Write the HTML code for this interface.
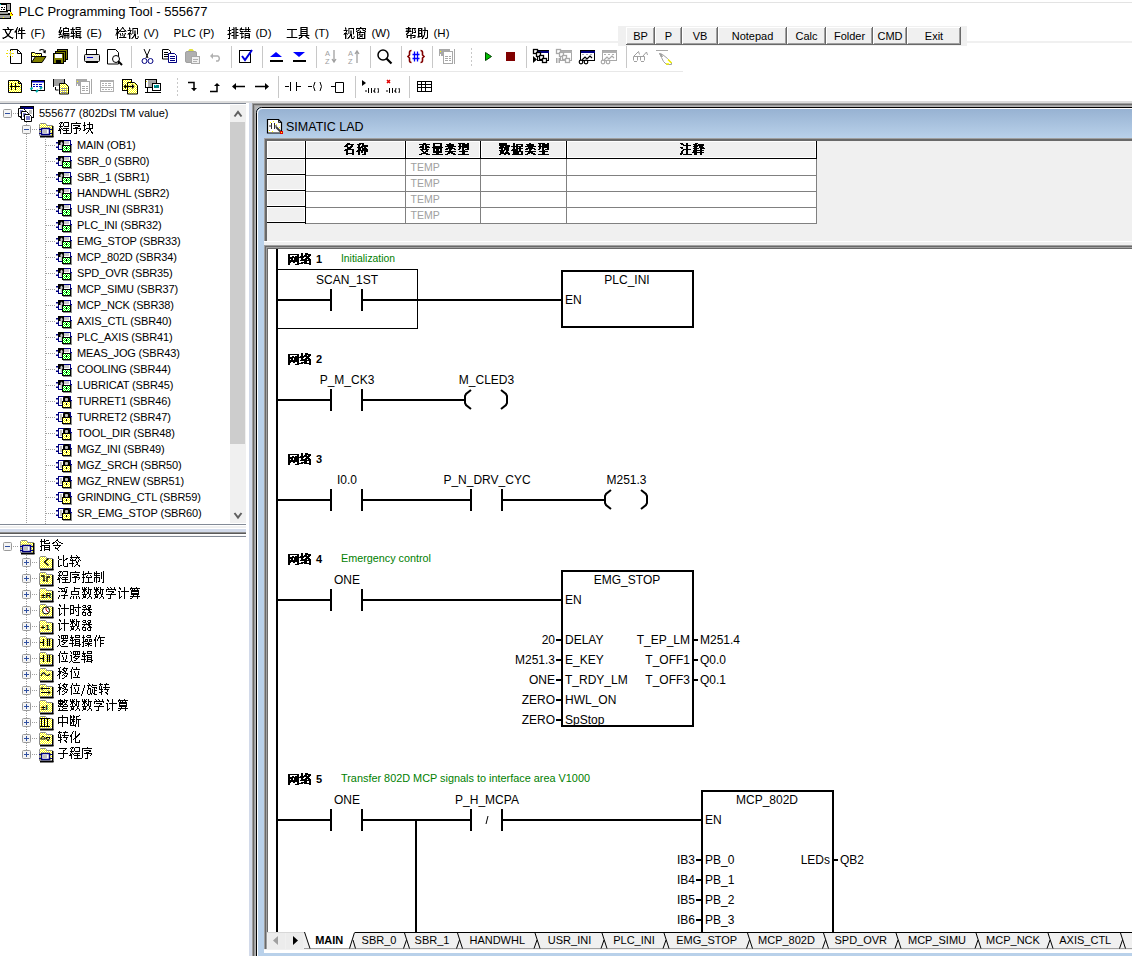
<!DOCTYPE html>
<html><head><meta charset="utf-8"><title>PLC Programming Tool - 555677</title>
<style>html,body{margin:0;padding:0;width:1132px;height:956px;overflow:hidden;background:#fff;font-family:"Liberation Sans",sans-serif}
svg text{font-family:"Liberation Sans",sans-serif}</style></head>
<body>
<svg width="1132" height="956" viewBox="0 0 1132 956" style="position:absolute;left:0;top:0" font-family="Liberation Sans, sans-serif"><rect x="0" y="0" width="1132" height="956" fill="#ffffff" /><rect x="139" y="2" width="993" height="1" fill="#e3e3e3" /><rect x="139" y="0" width="1" height="3" fill="#e3e3e3" /><g><rect x="0" y="3" width="11" height="16" fill="#000"/><rect x="0" y="4" width="1" height="1" fill="#00e0e0"/><rect x="0" y="5" width="6" height="6" fill="#fff"/><rect x="1" y="7" width="2" height="1" fill="#000"/><rect x="4" y="7" width="1" height="1" fill="#000"/><rect x="1" y="9" width="1" height="1" fill="#000"/><rect x="3" y="9" width="2" height="1" fill="#000"/><rect x="7" y="4" width="3" height="6" fill="#a8a8a8"/><rect x="0" y="12" width="8" height="2" fill="#a0a0a0"/><rect x="8" y="11" width="2" height="2" fill="#fff"/><rect x="0" y="15" width="10" height="3" fill="#a0a0a0"/><rect x="3" y="17" width="1" height="1" fill="#ffff00"/><rect x="10" y="12" width="2" height="2" fill="#ffff00"/><rect x="11" y="13" width="1" height="1" fill="#c00000"/><rect x="10" y="14" width="3" height="2" fill="#ffff00"/><rect x="12" y="14" width="1" height="1" fill="#800000"/></g><text x="18.5" y="16" font-size="13" fill="#000" >PLC Programming Tool - 555677</text><path d="M22 27h1v1h-1zM7 28h1v1h-1zM22 28h1v1h-1zM2 29h1v1h-1zM17 29h2v1h-2zM22 29h1v1h-1zM4 30h1v1h-1zM6 31h1v1h-1zM9 31h1v1h-1zM14 31h1v1h-1zM22 31h1v1h-1zM14 32h1v1h-1zM18 32h1v1h-1zM22 32h1v1h-1zM8 33h1v1h-1zM17 33h1v1h-1zM6 34h1v1h-1zM9 34h1v1h-1zM22 34h1v1h-1zM6 35h1v1h-1zM9 35h1v1h-1zM22 35h1v1h-1zM22 36h1v1h-1zM2 37h1v1h-1zM6 37h1v1h-1zM9 37h1v1h-1zM13 37h1v1h-1zM22 37h1v1h-1zM2 38h1v1h-1zM4 38h1v1h-1zM11 38h1v1h-1zM22 38h1v1h-1z" fill="#000" fill-opacity="0.35"/><path d="M8 27h1v1h-1zM21 27h1v1h-1zM16 28h2v1h-2zM13 29h1v1h-1zM11 30h1v1h-1zM15 30h1v1h-1zM18 30h1v1h-1zM5 32h1v1h-1zM9 32h2v1h-2zM15 32h1v1h-1zM7 33h1v1h-1zM25 33h1v1h-1zM5 36h1v1h-1zM7 36h2v1h-2zM10 36h1v1h-1zM3 37h1v1h-1zM12 37h1v1h-1z" fill="#000" fill-opacity="0.62"/><path d="M7 27h1v1h-1zM17 27h1v1h-1zM8 28h1v1h-1zM19 28h1v1h-1zM21 28h1v1h-1zM3 29h10v1h-10zM16 29h1v1h-1zM19 29h1v1h-1zM21 29h1v1h-1zM5 30h1v1h-1zM10 30h1v1h-1zM16 30h1v1h-1zM19 30h6v1h-6zM5 31h1v1h-1zM10 31h1v1h-1zM15 31h2v1h-2zM18 31h1v1h-1zM21 31h1v1h-1zM6 32h1v1h-1zM16 32h1v1h-1zM21 32h1v1h-1zM6 33h1v1h-1zM9 33h1v1h-1zM16 33h1v1h-1zM18 33h7v1h-7zM7 34h2v1h-2zM16 34h1v1h-1zM21 34h1v1h-1zM7 35h2v1h-2zM16 35h1v1h-1zM21 35h1v1h-1zM6 36h1v1h-1zM9 36h1v1h-1zM16 36h1v1h-1zM21 36h1v1h-1zM4 37h2v1h-2zM10 37h2v1h-2zM16 37h1v1h-1zM21 37h1v1h-1zM3 38h1v1h-1zM12 38h1v1h-1zM16 38h1v1h-1zM21 38h1v1h-1z" fill="#000"/><text x="30.5" y="36.5" font-size="11.5" fill="#000" >(F)</text><path d="M61 27h1v1h-1zM73 27h1v1h-1zM75 27h1v1h-1zM73 28h1v1h-1zM75 28h1v1h-1zM79 28h1v1h-1zM59 29h1v1h-1zM75 29h1v1h-1zM60 30h1v1h-1zM62 30h1v1h-1zM71 30h1v1h-1zM58 31h1v1h-1zM81 31h1v1h-1zM58 32h1v1h-1zM61 32h1v1h-1zM72 32h1v1h-1zM75 32h1v1h-1zM79 32h1v1h-1zM59 33h1v1h-1zM62 33h1v1h-1zM69 33h2v1h-2zM75 33h1v1h-1zM58 34h1v1h-1zM62 34h1v1h-1zM66 34h1v1h-1zM69 34h1v1h-1zM75 34h1v1h-1zM79 34h1v1h-1zM59 35h1v1h-1zM61 35h1v1h-1zM69 35h1v1h-1zM71 35h1v1h-1zM75 35h1v1h-1zM59 36h1v1h-1zM66 36h1v1h-1zM69 36h1v1h-1zM74 36h2v1h-2zM77 36h2v1h-2zM60 37h1v1h-1zM63 37h1v1h-1zM66 37h1v1h-1zM69 37h1v1h-1zM62 38h1v1h-1zM65 38h1v1h-1zM67 38h1v1h-1zM79 38h1v1h-1z" fill="#000" fill-opacity="0.35"/><path d="M65 27h2v1h-2zM72 27h1v1h-1zM80 27h1v1h-1zM76 28h1v1h-1zM80 28h1v1h-1zM60 29h1v1h-1zM70 29h1v1h-1zM80 29h1v1h-1zM72 30h2v1h-2zM60 31h1v1h-1zM71 31h2v1h-2zM80 32h1v1h-1zM80 33h1v1h-1zM61 34h1v1h-1zM64 34h2v1h-2zM67 34h2v1h-2zM80 34h1v1h-1zM62 35h2v1h-2zM72 35h1v1h-1zM74 35h1v1h-1zM80 35h1v1h-1zM63 36h3v1h-3zM67 36h2v1h-2zM70 36h1v1h-1zM79 36h2v1h-2zM58 37h1v1h-1zM64 37h2v1h-2zM67 37h2v1h-2zM75 37h1v1h-1zM78 37h1v1h-1zM81 37h1v1h-1zM64 38h1v1h-1zM68 38h1v1h-1zM80 38h1v1h-1z" fill="#000" fill-opacity="0.62"/><path d="M60 27h1v1h-1zM76 27h4v1h-4zM60 28h1v1h-1zM63 28h6v1h-6zM72 28h1v1h-1zM63 29h1v1h-1zM68 29h1v1h-1zM71 29h4v1h-4zM76 29h4v1h-4zM59 30h1v1h-1zM61 30h1v1h-1zM63 30h1v1h-1zM68 30h1v1h-1zM59 31h1v1h-1zM61 31h1v1h-1zM63 31h6v1h-6zM73 31h1v1h-1zM75 31h6v1h-6zM59 32h2v1h-2zM63 32h1v1h-1zM71 32h1v1h-1zM73 32h1v1h-1zM76 32h1v1h-1zM60 33h1v1h-1zM63 33h6v1h-6zM71 33h4v1h-4zM76 33h4v1h-4zM59 34h2v1h-2zM63 34h1v1h-1zM73 34h1v1h-1zM76 34h1v1h-1zM64 35h5v1h-5zM73 35h1v1h-1zM76 35h4v1h-4zM60 36h3v1h-3zM71 36h3v1h-3zM76 36h1v1h-1zM59 37h1v1h-1zM62 37h1v1h-1zM73 37h1v1h-1zM76 37h2v1h-2zM79 37h2v1h-2zM73 38h1v1h-1z" fill="#000"/><text x="86.5" y="36.5" font-size="11.5" fill="#000" >(E)</text><path d="M123 27h1v1h-1zM130 28h1v1h-1zM120 29h1v1h-1zM123 29h1v1h-1zM130 29h1v1h-1zM133 29h1v1h-1zM116 30h1v1h-1zM127 30h1v1h-1zM133 30h3v1h-3zM116 31h1v1h-1zM126 31h1v1h-1zM133 31h1v1h-1zM133 32h1v1h-1zM119 33h1v1h-1zM124 33h1v1h-1zM131 33h1v1h-1zM133 33h1v1h-1zM115 34h1v1h-1zM123 34h1v1h-1zM125 34h1v1h-1zM127 34h1v1h-1zM130 34h1v1h-1zM137 34h1v1h-1zM115 35h2v1h-2zM121 35h1v1h-1zM123 35h1v1h-1zM130 35h1v1h-1zM133 35h1v1h-1zM120 36h1v1h-1zM130 36h1v1h-1zM134 36h1v1h-1zM137 36h1v1h-1zM126 37h1v1h-1zM130 37h1v1h-1zM137 37h1v1h-1zM130 38h1v1h-1z" fill="#000" fill-opacity="0.35"/><path d="M129 27h1v1h-1zM121 28h2v1h-2zM132 28h1v1h-1zM115 29h1v1h-1zM121 29h1v1h-1zM124 29h1v1h-1zM129 29h1v1h-1zM132 29h1v1h-1zM119 30h1v1h-1zM124 30h1v1h-1zM131 30h2v1h-2zM118 31h1v1h-1zM120 31h1v1h-1zM125 31h1v1h-1zM132 31h1v1h-1zM134 31h2v1h-2zM116 32h1v1h-1zM129 32h2v1h-2zM132 32h1v1h-1zM134 32h2v1h-2zM118 33h1v1h-1zM120 33h1v1h-1zM132 33h1v1h-1zM134 33h2v1h-2zM116 34h1v1h-1zM122 34h1v1h-1zM124 34h1v1h-1zM128 34h1v1h-1zM131 34h1v1h-1zM120 35h1v1h-1zM122 35h1v1h-1zM123 36h2v1h-2zM138 36h1v1h-1zM133 37h1v1h-1zM138 37h1v1h-1zM131 38h2v1h-2zM135 38h1v1h-1z" fill="#000" fill-opacity="0.62"/><path d="M117 27h1v1h-1zM122 27h1v1h-1zM117 28h1v1h-1zM123 28h1v1h-1zM129 28h1v1h-1zM133 28h5v1h-5zM116 29h3v1h-3zM137 29h1v1h-1zM117 30h1v1h-1zM120 30h1v1h-1zM125 30h1v1h-1zM128 30h3v1h-3zM137 30h1v1h-1zM117 31h1v1h-1zM119 31h1v1h-1zM121 31h4v1h-4zM130 31h1v1h-1zM137 31h1v1h-1zM117 32h2v1h-2zM137 32h1v1h-1zM116 33h2v1h-2zM122 33h1v1h-1zM125 33h1v1h-1zM128 33h3v1h-3zM137 33h1v1h-1zM117 34h1v1h-1zM120 34h1v1h-1zM129 34h1v1h-1zM134 34h2v1h-2zM117 35h1v1h-1zM124 35h1v1h-1zM129 35h1v1h-1zM134 35h2v1h-2zM117 36h1v1h-1zM129 36h1v1h-1zM133 36h1v1h-1zM135 36h1v1h-1zM117 37h1v1h-1zM119 37h7v1h-7zM129 37h1v1h-1zM132 37h1v1h-1zM135 37h1v1h-1zM117 38h1v1h-1zM129 38h1v1h-1zM136 38h2v1h-2z" fill="#000"/><text x="143.5" y="36.5" font-size="11.5" fill="#000" >(V)</text><text x="173.5" y="36.5" font-size="11.5" fill="#000" >PLC (P)</text><path d="M234 27h1v1h-1zM246 27h1v1h-1zM246 28h1v1h-1zM231 29h1v1h-1zM238 29h2v1h-2zM250 29h1v1h-1zM227 30h1v1h-1zM231 30h1v1h-1zM239 30h1v1h-1zM246 30h1v1h-1zM231 32h1v1h-1zM238 32h1v1h-1zM242 32h1v1h-1zM228 33h1v1h-1zM231 33h1v1h-1zM239 33h1v1h-1zM244 33h1v1h-1zM230 34h1v1h-1zM242 34h1v1h-1zM244 34h1v1h-1zM248 34h1v1h-1zM242 35h1v1h-1zM244 35h1v1h-1zM244 36h1v1h-1zM248 36h1v1h-1zM243 37h2v1h-2zM244 38h1v1h-1zM248 38h1v1h-1z" fill="#000" fill-opacity="0.35"/><path d="M233 27h1v1h-1zM235 27h2v1h-2zM241 27h1v1h-1zM245 27h1v1h-1zM233 28h4v1h-4zM240 28h1v1h-1zM245 28h1v1h-1zM234 29h2v1h-2zM244 29h1v1h-1zM233 30h4v1h-4zM240 30h1v1h-1zM245 30h1v1h-1zM233 31h4v1h-4zM243 31h1v1h-1zM250 31h1v1h-1zM234 32h2v1h-2zM241 32h1v1h-1zM233 33h4v1h-4zM249 33h1v1h-1zM227 34h1v1h-1zM233 34h4v1h-4zM241 34h1v1h-1zM245 34h1v1h-1zM231 35h1v1h-1zM234 35h2v1h-2zM238 35h1v1h-1zM241 35h1v1h-1zM233 36h4v1h-4zM241 36h3v1h-3zM245 36h1v1h-1zM233 37h4v1h-4zM233 38h4v1h-4zM241 38h1v1h-1zM245 38h1v1h-1zM249 38h1v1h-1z" fill="#000" fill-opacity="0.62"/><path d="M229 27h1v1h-1zM248 27h1v1h-1zM229 28h1v1h-1zM241 28h1v1h-1zM248 28h1v1h-1zM229 29h1v1h-1zM232 29h2v1h-2zM236 29h2v1h-2zM240 29h4v1h-4zM245 29h5v1h-5zM228 30h3v1h-3zM248 30h1v1h-1zM229 31h1v1h-1zM240 31h3v1h-3zM244 31h6v1h-6zM229 32h1v1h-1zM232 32h2v1h-2zM236 32h2v1h-2zM229 33h2v1h-2zM240 33h4v1h-4zM245 33h4v1h-4zM228 34h2v1h-2zM249 34h1v1h-1zM229 35h1v1h-1zM232 35h2v1h-2zM236 35h2v1h-2zM245 35h5v1h-5zM229 36h1v1h-1zM249 36h1v1h-1zM229 37h1v1h-1zM241 37h2v1h-2zM245 37h5v1h-5zM228 38h2v1h-2z" fill="#000"/><text x="255.5" y="36.5" font-size="11.5" fill="#000" >(D)</text><path d="M298 35h1v1h-1zM309 35h1v1h-1zM307 36h1v1h-1zM286 37h1v1h-1zM297 37h1v1h-1zM298 38h1v1h-1zM300 38h1v1h-1zM307 38h1v1h-1zM309 38h1v1h-1z" fill="#000" fill-opacity="0.35"/><path d="M300 27h1v1h-1zM307 27h1v1h-1zM300 28h2v1h-2zM306 28h2v1h-2zM300 29h1v1h-1zM307 29h1v1h-1zM291 30h2v1h-2zM300 30h2v1h-2zM306 30h2v1h-2zM291 31h2v1h-2zM300 31h1v1h-1zM307 31h1v1h-1zM291 32h2v1h-2zM300 32h2v1h-2zM306 32h2v1h-2zM291 33h2v1h-2zM300 33h1v1h-1zM307 33h1v1h-1zM291 34h2v1h-2zM300 34h2v1h-2zM306 34h2v1h-2zM291 35h2v1h-2zM291 36h2v1h-2zM302 36h1v1h-1zM305 36h1v1h-1zM299 37h1v1h-1zM306 37h1v1h-1zM308 37h1v1h-1z" fill="#000" fill-opacity="0.62"/><path d="M301 27h6v1h-6zM287 29h10v1h-10zM301 29h6v1h-6zM301 31h6v1h-6zM301 33h6v1h-6zM299 35h10v1h-10zM301 36h1v1h-1zM306 36h1v1h-1zM287 37h10v1h-10zM300 37h2v1h-2zM307 37h1v1h-1zM299 38h1v1h-1zM308 38h1v1h-1z" fill="#000"/><text x="314.5" y="36.5" font-size="11.5" fill="#000" >(T)</text><path d="M361 27h1v1h-1zM346 28h1v1h-1zM346 29h1v1h-1zM349 29h1v1h-1zM358 29h1v1h-1zM363 29h1v1h-1zM343 30h1v1h-1zM349 30h3v1h-3zM356 30h1v1h-1zM359 30h2v1h-2zM362 30h1v1h-1zM365 30h1v1h-1zM349 31h1v1h-1zM359 31h1v1h-1zM364 31h1v1h-1zM349 32h1v1h-1zM365 32h1v1h-1zM347 33h1v1h-1zM349 33h1v1h-1zM360 33h1v1h-1zM365 33h1v1h-1zM343 34h1v1h-1zM346 34h1v1h-1zM353 34h1v1h-1zM358 34h1v1h-1zM363 34h1v1h-1zM365 34h1v1h-1zM346 35h1v1h-1zM349 35h1v1h-1zM358 35h2v1h-2zM365 35h1v1h-1zM346 36h1v1h-1zM350 36h1v1h-1zM353 36h1v1h-1zM359 36h1v1h-1zM365 36h1v1h-1zM346 37h1v1h-1zM353 37h1v1h-1zM358 37h1v1h-1zM362 37h1v1h-1zM365 37h1v1h-1zM346 38h1v1h-1zM365 38h1v1h-1z" fill="#000" fill-opacity="0.35"/><path d="M345 27h1v1h-1zM348 28h1v1h-1zM345 29h1v1h-1zM348 29h1v1h-1zM359 29h1v1h-1zM362 29h1v1h-1zM347 30h2v1h-2zM357 30h1v1h-1zM348 31h1v1h-1zM350 31h2v1h-2zM357 31h1v1h-1zM345 32h2v1h-2zM348 32h1v1h-1zM350 32h2v1h-2zM348 33h1v1h-1zM350 33h2v1h-2zM359 33h1v1h-1zM344 34h1v1h-1zM347 34h1v1h-1zM360 34h2v1h-2zM360 35h3v1h-3zM354 36h1v1h-1zM362 36h1v1h-1zM349 37h1v1h-1zM354 37h1v1h-1zM359 37h1v1h-1zM347 38h2v1h-2zM351 38h1v1h-1z" fill="#000" fill-opacity="0.62"/><path d="M360 27h1v1h-1zM345 28h1v1h-1zM349 28h5v1h-5zM356 28h10v1h-10zM353 29h1v1h-1zM356 29h1v1h-1zM365 29h1v1h-1zM344 30h3v1h-3zM353 30h1v1h-1zM358 30h1v1h-1zM363 30h2v1h-2zM346 31h1v1h-1zM353 31h1v1h-1zM356 31h1v1h-1zM360 31h1v1h-1zM365 31h1v1h-1zM353 32h1v1h-1zM357 32h8v1h-8zM344 33h3v1h-3zM353 33h1v1h-1zM357 33h1v1h-1zM364 33h1v1h-1zM345 34h1v1h-1zM350 34h2v1h-2zM357 34h1v1h-1zM359 34h1v1h-1zM362 34h1v1h-1zM364 34h1v1h-1zM345 35h1v1h-1zM350 35h2v1h-2zM357 35h1v1h-1zM364 35h1v1h-1zM345 36h1v1h-1zM349 36h1v1h-1zM351 36h1v1h-1zM357 36h1v1h-1zM360 36h2v1h-2zM364 36h1v1h-1zM345 37h1v1h-1zM348 37h1v1h-1zM351 37h1v1h-1zM357 37h1v1h-1zM364 37h1v1h-1zM345 38h1v1h-1zM352 38h2v1h-2zM357 38h8v1h-8z" fill="#000"/><text x="371.5" y="36.5" font-size="11.5" fill="#000" >(W)</text><path d="M409 27h1v1h-1zM425 27h1v1h-1zM405 28h1v1h-1zM411 28h1v1h-1zM422 28h1v1h-1zM406 29h2v1h-2zM410 29h1v1h-1zM415 29h1v1h-1zM419 29h1v1h-1zM422 29h1v1h-1zM405 31h1v1h-1zM419 31h1v1h-1zM422 31h1v1h-1zM425 31h1v1h-1zM419 32h1v1h-1zM422 32h1v1h-1zM425 32h1v1h-1zM408 33h1v1h-1zM410 33h2v1h-2zM422 33h1v1h-1zM407 34h1v1h-1zM419 34h1v1h-1zM422 34h1v1h-1zM406 35h1v1h-1zM419 35h1v1h-1zM406 36h1v1h-1zM417 36h1v1h-1zM424 36h1v1h-1zM406 37h1v1h-1zM412 37h1v1h-1zM415 37h1v1h-1zM417 37h1v1h-1zM419 37h1v1h-1zM426 37h1v1h-1zM421 38h1v1h-1zM427 38h1v1h-1z" fill="#000" fill-opacity="0.35"/><path d="M424 27h1v1h-1zM424 28h2v1h-2zM409 29h1v1h-1zM414 29h1v1h-1zM424 29h2v1h-2zM406 30h2v1h-2zM409 30h2v1h-2zM414 30h2v1h-2zM422 30h1v1h-1zM411 31h1v1h-1zM424 31h1v1h-1zM407 32h1v1h-1zM413 32h1v1h-1zM406 33h1v1h-1zM410 34h2v1h-2zM415 35h1v1h-1zM422 35h3v1h-3zM410 36h2v1h-2zM414 36h2v1h-2zM422 36h1v1h-1zM410 37h2v1h-2zM418 37h1v1h-1zM423 37h1v1h-1zM410 38h2v1h-2z" fill="#000" fill-opacity="0.62"/><path d="M408 27h1v1h-1zM406 28h5v1h-5zM412 28h4v1h-4zM418 28h4v1h-4zM408 29h1v1h-1zM412 29h1v1h-1zM418 29h1v1h-1zM421 29h1v1h-1zM408 30h1v1h-1zM412 30h1v1h-1zM418 30h4v1h-4zM423 30h5v1h-5zM406 31h5v1h-5zM412 31h1v1h-1zM415 31h1v1h-1zM418 31h1v1h-1zM421 31h1v1h-1zM427 31h1v1h-1zM408 32h1v1h-1zM412 32h1v1h-1zM414 32h2v1h-2zM418 32h1v1h-1zM421 32h1v1h-1zM424 32h1v1h-1zM427 32h1v1h-1zM407 33h1v1h-1zM412 33h1v1h-1zM418 33h4v1h-4zM424 33h1v1h-1zM427 33h1v1h-1zM406 34h1v1h-1zM418 34h1v1h-1zM421 34h1v1h-1zM424 34h1v1h-1zM427 34h1v1h-1zM407 35h8v1h-8zM418 35h1v1h-1zM421 35h1v1h-1zM427 35h1v1h-1zM407 36h1v1h-1zM418 36h4v1h-4zM423 36h1v1h-1zM427 36h1v1h-1zM407 37h1v1h-1zM413 37h2v1h-2zM422 37h1v1h-1zM427 37h1v1h-1zM422 38h1v1h-1zM425 38h2v1h-2z" fill="#000"/><text x="433.5" y="36.5" font-size="11.5" fill="#000" >(H)</text><rect x="0" y="41" width="1132" height="2" fill="#f0f0f0" /><rect x="618" y="26" width="349" height="20" fill="#f0f0f0" /><rect x="626" y="27" width="29" height="18" fill="#f0f0f0" /><rect x="626" y="27" width="29" height="1" fill="#ffffff" /><rect x="626" y="27" width="1" height="18" fill="#ffffff" /><rect x="654" y="27" width="1" height="18" fill="#696969" /><rect x="626" y="44" width="29" height="1" fill="#696969" /><rect x="653" y="28" width="1" height="16" fill="#a0a0a0" /><rect x="627" y="43" width="27" height="1" fill="#a0a0a0" /><text x="640.5" y="40" font-size="11" fill="#000" text-anchor="middle" >BP</text><rect x="655" y="27" width="27" height="18" fill="#f0f0f0" /><rect x="655" y="27" width="27" height="1" fill="#ffffff" /><rect x="655" y="27" width="1" height="18" fill="#ffffff" /><rect x="681" y="27" width="1" height="18" fill="#696969" /><rect x="655" y="44" width="27" height="1" fill="#696969" /><rect x="680" y="28" width="1" height="16" fill="#a0a0a0" /><rect x="656" y="43" width="25" height="1" fill="#a0a0a0" /><text x="668.5" y="40" font-size="11" fill="#000" text-anchor="middle" >P</text><rect x="682" y="27" width="36" height="18" fill="#f0f0f0" /><rect x="682" y="27" width="36" height="1" fill="#ffffff" /><rect x="682" y="27" width="1" height="18" fill="#ffffff" /><rect x="717" y="27" width="1" height="18" fill="#696969" /><rect x="682" y="44" width="36" height="1" fill="#696969" /><rect x="716" y="28" width="1" height="16" fill="#a0a0a0" /><rect x="683" y="43" width="34" height="1" fill="#a0a0a0" /><text x="700.0" y="40" font-size="11" fill="#000" text-anchor="middle" >VB</text><rect x="718" y="27" width="69" height="18" fill="#f0f0f0" /><rect x="718" y="27" width="69" height="1" fill="#ffffff" /><rect x="718" y="27" width="1" height="18" fill="#ffffff" /><rect x="786" y="27" width="1" height="18" fill="#696969" /><rect x="718" y="44" width="69" height="1" fill="#696969" /><rect x="785" y="28" width="1" height="16" fill="#a0a0a0" /><rect x="719" y="43" width="67" height="1" fill="#a0a0a0" /><text x="752.5" y="40" font-size="11" fill="#000" text-anchor="middle" >Notepad</text><rect x="787" y="27" width="39" height="18" fill="#f0f0f0" /><rect x="787" y="27" width="39" height="1" fill="#ffffff" /><rect x="787" y="27" width="1" height="18" fill="#ffffff" /><rect x="825" y="27" width="1" height="18" fill="#696969" /><rect x="787" y="44" width="39" height="1" fill="#696969" /><rect x="824" y="28" width="1" height="16" fill="#a0a0a0" /><rect x="788" y="43" width="37" height="1" fill="#a0a0a0" /><text x="806.5" y="40" font-size="11" fill="#000" text-anchor="middle" >Calc</text><rect x="826" y="27" width="47" height="18" fill="#f0f0f0" /><rect x="826" y="27" width="47" height="1" fill="#ffffff" /><rect x="826" y="27" width="1" height="18" fill="#ffffff" /><rect x="872" y="27" width="1" height="18" fill="#696969" /><rect x="826" y="44" width="47" height="1" fill="#696969" /><rect x="871" y="28" width="1" height="16" fill="#a0a0a0" /><rect x="827" y="43" width="45" height="1" fill="#a0a0a0" /><text x="849.5" y="40" font-size="11" fill="#000" text-anchor="middle" >Folder</text><rect x="873" y="27" width="34" height="18" fill="#f0f0f0" /><rect x="873" y="27" width="34" height="1" fill="#ffffff" /><rect x="873" y="27" width="1" height="18" fill="#ffffff" /><rect x="906" y="27" width="1" height="18" fill="#696969" /><rect x="873" y="44" width="34" height="1" fill="#696969" /><rect x="905" y="28" width="1" height="16" fill="#a0a0a0" /><rect x="874" y="43" width="32" height="1" fill="#a0a0a0" /><text x="890.0" y="40" font-size="11" fill="#000" text-anchor="middle" >CMD</text><rect x="907" y="27" width="54" height="18" fill="#f0f0f0" /><rect x="907" y="27" width="54" height="1" fill="#ffffff" /><rect x="907" y="27" width="1" height="18" fill="#ffffff" /><rect x="960" y="27" width="1" height="18" fill="#696969" /><rect x="907" y="44" width="54" height="1" fill="#696969" /><rect x="959" y="28" width="1" height="16" fill="#a0a0a0" /><rect x="908" y="43" width="52" height="1" fill="#a0a0a0" /><text x="934.0" y="40" font-size="11" fill="#000" text-anchor="middle" >Exit</text><rect x="967" y="41" width="165" height="2" fill="#f0f0f0" /><rect x="0" y="71" width="683" height="1" fill="#e8e8e8" /><rect x="0" y="101" width="1132" height="2" fill="#dcdcdc" /><rect x="77" y="46" width="1" height="22" fill="#c8c8c8" /><rect x="131" y="46" width="1" height="22" fill="#c8c8c8" /><rect x="231" y="46" width="1" height="22" fill="#c8c8c8" /><rect x="262" y="46" width="1" height="22" fill="#c8c8c8" /><rect x="316" y="46" width="1" height="22" fill="#c8c8c8" /><rect x="370" y="46" width="1" height="22" fill="#c8c8c8" /><rect x="401" y="46" width="1" height="22" fill="#c8c8c8" /><rect x="432" y="46" width="1" height="22" fill="#c8c8c8" /><rect x="526" y="46" width="1" height="22" fill="#c8c8c8" /><rect x="626" y="46" width="1" height="22" fill="#c8c8c8" /><rect x="471" y="48" width="1" height="2" fill="#c8c8c8" /><rect x="471" y="52" width="1" height="2" fill="#c8c8c8" /><rect x="471" y="56" width="1" height="2" fill="#c8c8c8" /><rect x="471" y="60" width="1" height="2" fill="#c8c8c8" /><rect x="471" y="64" width="1" height="2" fill="#c8c8c8" /><path d="M10.5 49.5h7l4 4v10h-11z" fill="#fff" stroke="#000"/><path d="M17.5 49.5v4h4" fill="none" stroke="#000"/><rect x="7" y="50" width="1" height="1" fill="#f0e000"/><rect x="12" y="50" width="1" height="1" fill="#f0e000"/><rect x="6" y="53" width="2" height="1" fill="#f0e000"/><rect x="12" y="53" width="2" height="1" fill="#f0e000"/><rect x="7" y="56" width="1" height="1" fill="#f0e000"/><rect x="12" y="56" width="1" height="1" fill="#f0e000"/><rect x="10" y="51" width="1" height="5" fill="#f0e000"/><rect x="9" y="53" width="3" height="1" fill="#c8c8a0"/><path d="M31.5 62.5v-10h3l1 1h6v3h-10" fill="url(#dith)" stroke="#000"/><path d="M31.5 62.5v-9M31.5 62.5l4-6h10.5l-4 6z" fill="#808000" stroke="#000"/><path d="M39.5 50.5q2-2 5 0" fill="none" stroke="#000" stroke-width="1.2"/><path d="M46 50l-0.5 3.5l-3-1.5z" fill="#000"/><rect x="57.5" y="49.5" width="10" height="10" fill="#808000" stroke="#000"/><rect x="55.5" y="51.5" width="10" height="10" fill="#808000" stroke="#000"/><rect x="53.5" y="53.5" width="10" height="10" fill="#808000" stroke="#000"/><rect x="55" y="54" width="7" height="4" fill="#fff"/><rect x="56" y="60" width="5" height="3" fill="#000"/><rect x="86.5" y="49.5" width="10" height="5" fill="#fff" stroke="#000"/><rect x="84.5" y="54.5" width="15" height="7" rx="1" fill="#e0e0e0" stroke="#000"/><rect x="87" y="57" width="6" height="1" fill="#0000c0"/><rect x="86" y="61" width="12" height="2" fill="#000"/><path d="M107.5 49.5h8l3 3v11.5h-11z" fill="#fff" stroke="#000"/><circle cx="116" cy="59" r="3.5" fill="#fff" stroke="#000"/><path d="M118 61l4 4" stroke="#000" stroke-width="2"/><path d="M144 49l4 9M150 49l-4 9" stroke="#000"/><circle cx="144.5" cy="61" r="2.5" fill="none" stroke="#000080"/><circle cx="150.5" cy="61" r="2.5" fill="none" stroke="#000080"/><path d="M162.5 49.5h6l2 2v7.5h-8z" fill="#fff" stroke="#000"/><path d="M164 52.5h4M164 54.5h4M164 56.5h4" stroke="#000"/><path d="M168.5 53.5h6l2 2v7h-8z" fill="#fff" stroke="#000080"/><path d="M170 56.5h5M170 58.5h5M170 60.5h5" stroke="#000080"/><rect x="185.5" y="51.5" width="11" height="11" rx="1.5" fill="#b0b0b0" stroke="#a0a0a0"/><path d="M188 51l1.5-2h3l1.5 2z" fill="#e0e040"/><rect x="191.5" y="56.5" width="8" height="7" fill="#f0f0f0" stroke="#a8a8a8"/><path d="M193 59.5h5M193 61.5h4" stroke="#b0b0b0"/><path d="M212 56h6a3 3 0 0 1 0 5h-2" fill="none" stroke="#b0b0b0" stroke-width="1.5"/><path d="M210 56l3-3v6z" fill="#b0b0b0"/><rect x="239.5" y="50.5" width="11" height="12" fill="#fff" stroke="#000"/><path d="M242 56l3 4l7-10" fill="none" stroke="#0000e0" stroke-width="2"/><path d="M270 57h12l-6-5z" fill="#0000ff"/><rect x="270" y="60" width="13" height="2" fill="#000"/><path d="M293 52h12l-6 5z" fill="#0000ff"/><rect x="293" y="60" width="13" height="2" fill="#000"/><text x="325" y="56" font-size="7.5" fill="#a0a0a0">A</text><text x="325" y="63.5" font-size="7.5" fill="#a0a0a0">Z</text><path d="M334 50v12M332 59l2 3l2-3" stroke="#a0a0a0" fill="none" stroke-width="1.3"/><text x="348" y="56" font-size="7.5" fill="#a0a0a0">A</text><text x="348" y="63.5" font-size="7.5" fill="#a0a0a0">Z</text><path d="M357 63v-12M355 54l2-3l2 3" stroke="#a0a0a0" fill="none" stroke-width="1.3"/><circle cx="383" cy="55" r="5" fill="none" stroke="#000" stroke-width="1.5"/><path d="M386.5 58.5l5 5" stroke="#000" stroke-width="2.2"/><path d="M411.5 50.5q-2 0-2 2v2.5l-1.5 1.5l1.5 1.5v2.5q0 2 2 2M420.5 50.5q2 0 2 2v2.5l1.5 1.5l-1.5 1.5v2.5q0 2-2 2" fill="none" stroke="#800000" stroke-width="1.6"/><path d="M414.5 51.5v10M417.5 51.5v10M412.5 54.5h7M412.5 58.5h7" stroke="#0000ff" stroke-width="1.3"/><rect x="439" y="49" width="11" height="7" fill="#a8a8a8"/><rect x="440" y="51" width="1" height="1" fill="#ffff00"/><rect x="440" y="54" width="1" height="2" fill="#fff"/><rect x="443.5" y="51.5" width="9" height="12" fill="#fff" stroke="#a8a8a8"/><path d="M445 56.5h3M449 56.5h2M445 58.5h3M449 58.5h2M445 60.5h3M449 60.5h2" stroke="#a8a8a8"/><rect x="454" y="49" width="1" height="15" fill="#a8a8a8"/><path d="M485.5 52.5v8l6-4z" fill="#00c000" stroke="#004000"/><rect x="506" y="52" width="9" height="9" fill="#800000" /><rect x="537.5" y="50.5" width="11" height="10" fill="#fff" stroke="#000"/><rect x="538" y="51" width="11" height="2" fill="#000080"/><rect x="533.5" y="49.5" width="4" height="4" fill="#fff" stroke="#000" stroke-width="1.3"/><rect x="536.5" y="52.5" width="4" height="4" fill="#fff" stroke="#000" stroke-width="1.3"/><rect x="539.5" y="55.5" width="4" height="4" fill="#fff" stroke="#000" stroke-width="1.3"/><rect x="542.5" y="58.5" width="4" height="4" fill="#fff" stroke="#000" stroke-width="1.3"/><path d="M533 56v7l4-3.5z" fill="#000"/><rect x="560.5" y="50.5" width="11" height="10" fill="#fff" stroke="#a8a8a8"/><rect x="561" y="51" width="11" height="2" fill="#b0b0b0"/><rect x="556.5" y="49.5" width="4" height="4" fill="#fff" stroke="#a8a8a8" stroke-width="1.3"/><rect x="559.5" y="52.5" width="4" height="4" fill="#fff" stroke="#a8a8a8" stroke-width="1.3"/><rect x="562.5" y="55.5" width="4" height="4" fill="#fff" stroke="#a8a8a8" stroke-width="1.3"/><rect x="565.5" y="58.5" width="4" height="4" fill="#fff" stroke="#a8a8a8" stroke-width="1.3"/><rect x="556" y="58" width="1.5" height="5" fill="#a8a8a8"/><rect x="558.5" y="58" width="1.5" height="5" fill="#a8a8a8"/><rect x="580.5" y="50.5" width="14" height="10" fill="#fff" stroke="#000"/><rect x="581" y="51" width="14" height="2" fill="#000080"/><path d="M582 54.5h2M586 54.5h2M590 54.5h2" stroke="#b0b0b0"/><path d="M582 60l3-3l2 2l3-3l2 2" fill="none" stroke="#000" stroke-width="1.2"/><circle cx="581" cy="62" r="1.8" fill="#fff" stroke="#000" stroke-width="1.2"/><circle cx="586" cy="62" r="1.8" fill="#fff" stroke="#000" stroke-width="1.2"/><rect x="602.5" y="50.5" width="14" height="10" fill="#fff" stroke="#a8a8a8"/><rect x="603" y="51" width="14" height="2" fill="#b0b0b0"/><path d="M604 54.5h2M608 54.5h2M612 54.5h2" stroke="#b0b0b0"/><path d="M604 60l3-3l2 2l3-3l2 2" fill="none" stroke="#a8a8a8" stroke-width="1.2"/><circle cx="603" cy="62" r="1.8" fill="#fff" stroke="#a8a8a8" stroke-width="1.2"/><circle cx="608" cy="62" r="1.8" fill="#fff" stroke="#a8a8a8" stroke-width="1.2"/><path d="M633.5 56.5h11M633.5 56.5v4M637.5 56.5v4M640.5 56.5v4M644.5 56.5v4M634 61.5h3M641 61.5h3M634 56l4.5-4.5l1 3M643 56l3.5-4l1 3" stroke="#a0a0a0" fill="none"/><path d="M656 51l1-1l1 1l1-1l1 1l1-1l1 1l1-1l1 1l1-1l1 1l1-1l1 1" stroke="#a8a8a8" fill="none"/><path d="M659.5 53.5l3 1l5 4l4 4v2h-5l-3-3l-2-4z" fill="#fff" stroke="#a0a0a0"/><path d="M659 53l3 1l1 3l-2 0z" fill="#a0a0a0"/><path d="M668 59.5l3.5 3.5M666 64h3" stroke="#f0f000" stroke-width="1.6"/><rect x="177" y="78" width="1" height="2" fill="#c8c8c8" /><rect x="177" y="82" width="1" height="2" fill="#c8c8c8" /><rect x="177" y="86" width="1" height="2" fill="#c8c8c8" /><rect x="177" y="90" width="1" height="2" fill="#c8c8c8" /><rect x="177" y="94" width="1" height="2" fill="#c8c8c8" /><rect x="278" y="76" width="1" height="22" fill="#c8c8c8" /><rect x="355" y="76" width="1" height="22" fill="#c8c8c8" /><rect x="409" y="76" width="1" height="22" fill="#c8c8c8" /><path d="M8.5 80.5h10l3 3v9h-13z" fill="url(#dith)" stroke="#000"/><path d="M18.5 80.5v3h3" fill="none" stroke="#000"/><path d="M10 86.5h10M11.5 83v7M15.5 83v7" stroke="#000"/><rect x="31.5" y="80.5" width="13" height="10" fill="#fff" stroke="#000"/><rect x="32" y="81" width="12" height="1.5" fill="#0000c0"/><path d="M33 84.5h2M36 84.5h2M39 84.5h3M33 86.5h2M36 86.5h2M39 86.5h3" stroke="#0000c0"/><path d="M30.5 89.5l2-2M36 92l2-2M40 89l2-2" stroke="#00b0b0" stroke-width="2"/><rect x="54" y="79" width="11" height="7" fill="#a0a0a0"/><path d="M53.5 79v8M64.5 79v6" stroke="#000"/><path d="M55.5 87v3h3" fill="none" stroke="#000"/><path d="M59.5 83.5h6l3 3v7.5h-9z" fill="url(#dith)" stroke="#000"/><path d="M61 88.5h6M61 90.5h6M61 92.5h6" stroke="#909090"/><rect x="76" y="79" width="11" height="7" fill="#a8a8a8"/><rect x="77" y="81" width="1" height="1" fill="#ffff00"/><rect x="77" y="84" width="1" height="2" fill="#fff"/><rect x="80.5" y="81.5" width="9" height="12" fill="#fff" stroke="#a8a8a8"/><path d="M82 86.5h3M86 86.5h2M82 88.5h3M86 88.5h2M82 90.5h3M86 90.5h2" stroke="#a8a8a8"/><rect x="91" y="79" width="1" height="15" fill="#a8a8a8"/><rect x="100.5" y="80.5" width="13" height="11" fill="#fff" stroke="#b0b0b0"/><rect x="101" y="81" width="12" height="1" fill="#b0b0b0"/><path d="M101 87.5h12" stroke="#b0b0b0"/><path d="M102 83.5h2M105 83.5h2M108 83.5h3M102 85.5h2M105 85.5h2M108 85.5h3M102 89.5h2M105 89.5h2M108 89.5h2M111 89.5h1" stroke="#b0b0b0"/><rect x="122.5" y="79.5" width="9" height="11" fill="url(#dith)" stroke="#000"/><path d="M127.5 82.5h7l3 3v8.5h-10z" fill="url(#dith)" stroke="#000"/><path d="M124 86.5h9" stroke="#000" stroke-width="1.2"/><path d="M123.5 86.5l2.5-2.5v5zM134.5 86.5l-2.5-2.5v5z" fill="#000"/><rect x="145.5" y="79.5" width="11" height="8" fill="#a8a8a8" stroke="#000"/><rect x="146" y="80" width="2" height="7" fill="#fff"/><rect x="146" y="81" width="1" height="1" fill="#e0e000"/><rect x="152.5" y="83.5" width="8" height="7" fill="#fff" stroke="#000"/><rect x="154" y="85" width="5" height="3" fill="#008080"/><rect x="155" y="85" width="1" height="1" fill="#00ffff"/><path d="M145 92.5h16M147.5 88v4" stroke="#000"/><path d="M188 82.5h6v8" fill="none" stroke="#000" stroke-width="1.5"/><path d="M191 88h6l-3 3z" fill="#000"/><path d="M210 91.5h7v-7" fill="none" stroke="#000" stroke-width="1.5"/><path d="M214 86h6l-3-3z" fill="#000"/><path d="M234 86.5h11" stroke="#000" stroke-width="1.5"/><path d="M232 86.5l4-3.5v7z" fill="#000"/><path d="M255 86.5h11" stroke="#000" stroke-width="1.5"/><path d="M269 86.5l-4-3.5v7z" fill="#000"/><path d="M285 86.5h4M290.5 82v9M296.5 82v9M297 86.5h4" stroke="#000" fill="none"/><path d="M308 86.5h4M315 82q-3 4.5 0 9M320 82q3 4.5 0 9" stroke="#000" fill="none"/><path d="M331 86.5h4M335.5 82.5h8v10h-8z" stroke="#000" fill="none"/><path d="M362 80v6l4-3z" fill="#000"/><path d="M365 91h2M368.5 88v5M371.5 88v5M373 91h2M375 88q-1 3 0 5M378 88q1 3 0 5" stroke="#000" fill="none"/><path d="M387 80l3 3M390 80l-3 3" stroke="#e00000" stroke-width="1.5"/><path d="M386 91h2M389.5 88v5M392.5 88v5M394 91h2M396 88q-1 3 0 5M399 88q1 3 0 5" stroke="#000" fill="none"/><rect x="417.5" y="81.5" width="14" height="10" fill="#fff" stroke="#000"/><path d="M418 84.5h13M418 87.5h13M421.5 82v9M425.5 82v9" stroke="#000"/><rect x="0" y="103" width="246" height="1" fill="#838a96" /><defs><pattern id="chk" width="2" height="2" patternUnits="userSpaceOnUse"><rect width="2" height="2" fill="#00ff00"/><rect width="1" height="1" fill="#ffffff"/><rect x="1" y="1" width="1" height="1" fill="#ffffff"/></pattern><pattern id="dith" width="2" height="2" patternUnits="userSpaceOnUse"><rect width="2" height="2" fill="#ffff00"/><rect width="1" height="1" fill="#ffffff"/><rect x="1" y="1" width="1" height="1" fill="#ffffff"/></pattern></defs><rect x="3.5" y="109.5" width="8" height="8" rx="1" fill="#f4f4f4" stroke="#9a9a9a"/><rect x="5" y="113" width="5" height="1" fill="#3050a0" /><rect x="13" y="113" width="1" height="1" fill="#a0a0a0" /><rect x="15" y="113" width="1" height="1" fill="#a0a0a0" /><rect x="17" y="113" width="1" height="1" fill="#a0a0a0" /><rect x="20.5" y="106.5" width="13" height="11" fill="#fff" stroke="#000"/><rect x="21" y="107" width="12" height="2" fill="#000080"/><path d="M29 111h3M29 113h3" stroke="#808080"/><path d="M18.5 108.5h5l2 2v6h-7z" fill="#fff" stroke="#000"/><path d="M20 111h3M20 113h3" stroke="#0000a0"/><path d="M21.5 111.5h5l2 2v6h-7z" fill="#fff" stroke="#000"/><path d="M23 114h3M23 116h3" stroke="#0000a0"/><path d="M24.5 114.5h5l2 2v5h-7z" fill="#fff" stroke="#000"/><path d="M26 117h4M26 119h4" stroke="#0000a0"/><text x="39" y="117" font-size="11" fill="#000" >555677 (802Dsl TM value)</text><rect x="26" y="122" width="1" height="1" fill="#a0a0a0" /><rect x="26" y="124" width="1" height="1" fill="#a0a0a0" /><rect x="26" y="126" width="1" height="1" fill="#a0a0a0" /><rect x="26" y="128" width="1" height="1" fill="#a0a0a0" /><rect x="26" y="130" width="1" height="1" fill="#a0a0a0" /><rect x="26" y="132" width="1" height="1" fill="#a0a0a0" /><rect x="26" y="134" width="1" height="1" fill="#a0a0a0" /><rect x="26" y="136" width="1" height="1" fill="#a0a0a0" /><rect x="26" y="138" width="1" height="1" fill="#a0a0a0" /><rect x="26" y="140" width="1" height="1" fill="#a0a0a0" /><rect x="26" y="142" width="1" height="1" fill="#a0a0a0" /><rect x="26" y="144" width="1" height="1" fill="#a0a0a0" /><rect x="26" y="146" width="1" height="1" fill="#a0a0a0" /><rect x="26" y="148" width="1" height="1" fill="#a0a0a0" /><rect x="26" y="150" width="1" height="1" fill="#a0a0a0" /><rect x="26" y="152" width="1" height="1" fill="#a0a0a0" /><rect x="26" y="154" width="1" height="1" fill="#a0a0a0" /><rect x="26" y="156" width="1" height="1" fill="#a0a0a0" /><rect x="26" y="158" width="1" height="1" fill="#a0a0a0" /><rect x="26" y="160" width="1" height="1" fill="#a0a0a0" /><rect x="26" y="162" width="1" height="1" fill="#a0a0a0" /><rect x="26" y="164" width="1" height="1" fill="#a0a0a0" /><rect x="26" y="166" width="1" height="1" fill="#a0a0a0" /><rect x="26" y="168" width="1" height="1" fill="#a0a0a0" /><rect x="26" y="170" width="1" height="1" fill="#a0a0a0" /><rect x="26" y="172" width="1" height="1" fill="#a0a0a0" /><rect x="26" y="174" width="1" height="1" fill="#a0a0a0" /><rect x="26" y="176" width="1" height="1" fill="#a0a0a0" /><rect x="26" y="178" width="1" height="1" fill="#a0a0a0" /><rect x="26" y="180" width="1" height="1" fill="#a0a0a0" /><rect x="26" y="182" width="1" height="1" fill="#a0a0a0" /><rect x="26" y="184" width="1" height="1" fill="#a0a0a0" /><rect x="26" y="186" width="1" height="1" fill="#a0a0a0" /><rect x="26" y="188" width="1" height="1" fill="#a0a0a0" /><rect x="26" y="190" width="1" height="1" fill="#a0a0a0" /><rect x="26" y="192" width="1" height="1" fill="#a0a0a0" /><rect x="26" y="194" width="1" height="1" fill="#a0a0a0" /><rect x="26" y="196" width="1" height="1" fill="#a0a0a0" /><rect x="26" y="198" width="1" height="1" fill="#a0a0a0" /><rect x="26" y="200" width="1" height="1" fill="#a0a0a0" /><rect x="26" y="202" width="1" height="1" fill="#a0a0a0" /><rect x="26" y="204" width="1" height="1" fill="#a0a0a0" /><rect x="26" y="206" width="1" height="1" fill="#a0a0a0" /><rect x="26" y="208" width="1" height="1" fill="#a0a0a0" /><rect x="26" y="210" width="1" height="1" fill="#a0a0a0" /><rect x="26" y="212" width="1" height="1" fill="#a0a0a0" /><rect x="26" y="214" width="1" height="1" fill="#a0a0a0" /><rect x="26" y="216" width="1" height="1" fill="#a0a0a0" /><rect x="26" y="218" width="1" height="1" fill="#a0a0a0" /><rect x="26" y="220" width="1" height="1" fill="#a0a0a0" /><rect x="26" y="222" width="1" height="1" fill="#a0a0a0" /><rect x="26" y="224" width="1" height="1" fill="#a0a0a0" /><rect x="26" y="226" width="1" height="1" fill="#a0a0a0" /><rect x="26" y="228" width="1" height="1" fill="#a0a0a0" /><rect x="26" y="230" width="1" height="1" fill="#a0a0a0" /><rect x="26" y="232" width="1" height="1" fill="#a0a0a0" /><rect x="26" y="234" width="1" height="1" fill="#a0a0a0" /><rect x="26" y="236" width="1" height="1" fill="#a0a0a0" /><rect x="26" y="238" width="1" height="1" fill="#a0a0a0" /><rect x="26" y="240" width="1" height="1" fill="#a0a0a0" /><rect x="26" y="242" width="1" height="1" fill="#a0a0a0" /><rect x="26" y="244" width="1" height="1" fill="#a0a0a0" /><rect x="26" y="246" width="1" height="1" fill="#a0a0a0" /><rect x="26" y="248" width="1" height="1" fill="#a0a0a0" /><rect x="26" y="250" width="1" height="1" fill="#a0a0a0" /><rect x="26" y="252" width="1" height="1" fill="#a0a0a0" /><rect x="26" y="254" width="1" height="1" fill="#a0a0a0" /><rect x="26" y="256" width="1" height="1" fill="#a0a0a0" /><rect x="26" y="258" width="1" height="1" fill="#a0a0a0" /><rect x="26" y="260" width="1" height="1" fill="#a0a0a0" /><rect x="26" y="262" width="1" height="1" fill="#a0a0a0" /><rect x="26" y="264" width="1" height="1" fill="#a0a0a0" /><rect x="26" y="266" width="1" height="1" fill="#a0a0a0" /><rect x="26" y="268" width="1" height="1" fill="#a0a0a0" /><rect x="26" y="270" width="1" height="1" fill="#a0a0a0" /><rect x="26" y="272" width="1" height="1" fill="#a0a0a0" /><rect x="26" y="274" width="1" height="1" fill="#a0a0a0" /><rect x="26" y="276" width="1" height="1" fill="#a0a0a0" /><rect x="26" y="278" width="1" height="1" fill="#a0a0a0" /><rect x="26" y="280" width="1" height="1" fill="#a0a0a0" /><rect x="26" y="282" width="1" height="1" fill="#a0a0a0" /><rect x="26" y="284" width="1" height="1" fill="#a0a0a0" /><rect x="26" y="286" width="1" height="1" fill="#a0a0a0" /><rect x="26" y="288" width="1" height="1" fill="#a0a0a0" /><rect x="26" y="290" width="1" height="1" fill="#a0a0a0" /><rect x="26" y="292" width="1" height="1" fill="#a0a0a0" /><rect x="26" y="294" width="1" height="1" fill="#a0a0a0" /><rect x="26" y="296" width="1" height="1" fill="#a0a0a0" /><rect x="26" y="298" width="1" height="1" fill="#a0a0a0" /><rect x="26" y="300" width="1" height="1" fill="#a0a0a0" /><rect x="26" y="302" width="1" height="1" fill="#a0a0a0" /><rect x="26" y="304" width="1" height="1" fill="#a0a0a0" /><rect x="26" y="306" width="1" height="1" fill="#a0a0a0" /><rect x="26" y="308" width="1" height="1" fill="#a0a0a0" /><rect x="26" y="310" width="1" height="1" fill="#a0a0a0" /><rect x="26" y="312" width="1" height="1" fill="#a0a0a0" /><rect x="26" y="314" width="1" height="1" fill="#a0a0a0" /><rect x="26" y="316" width="1" height="1" fill="#a0a0a0" /><rect x="26" y="318" width="1" height="1" fill="#a0a0a0" /><rect x="26" y="320" width="1" height="1" fill="#a0a0a0" /><rect x="26" y="322" width="1" height="1" fill="#a0a0a0" /><rect x="26" y="324" width="1" height="1" fill="#a0a0a0" /><rect x="26" y="326" width="1" height="1" fill="#a0a0a0" /><rect x="26" y="328" width="1" height="1" fill="#a0a0a0" /><rect x="26" y="330" width="1" height="1" fill="#a0a0a0" /><rect x="26" y="332" width="1" height="1" fill="#a0a0a0" /><rect x="26" y="334" width="1" height="1" fill="#a0a0a0" /><rect x="26" y="336" width="1" height="1" fill="#a0a0a0" /><rect x="26" y="338" width="1" height="1" fill="#a0a0a0" /><rect x="26" y="340" width="1" height="1" fill="#a0a0a0" /><rect x="26" y="342" width="1" height="1" fill="#a0a0a0" /><rect x="26" y="344" width="1" height="1" fill="#a0a0a0" /><rect x="26" y="346" width="1" height="1" fill="#a0a0a0" /><rect x="26" y="348" width="1" height="1" fill="#a0a0a0" /><rect x="26" y="350" width="1" height="1" fill="#a0a0a0" /><rect x="26" y="352" width="1" height="1" fill="#a0a0a0" /><rect x="26" y="354" width="1" height="1" fill="#a0a0a0" /><rect x="26" y="356" width="1" height="1" fill="#a0a0a0" /><rect x="26" y="358" width="1" height="1" fill="#a0a0a0" /><rect x="26" y="360" width="1" height="1" fill="#a0a0a0" /><rect x="26" y="362" width="1" height="1" fill="#a0a0a0" /><rect x="26" y="364" width="1" height="1" fill="#a0a0a0" /><rect x="26" y="366" width="1" height="1" fill="#a0a0a0" /><rect x="26" y="368" width="1" height="1" fill="#a0a0a0" /><rect x="26" y="370" width="1" height="1" fill="#a0a0a0" /><rect x="26" y="372" width="1" height="1" fill="#a0a0a0" /><rect x="26" y="374" width="1" height="1" fill="#a0a0a0" /><rect x="26" y="376" width="1" height="1" fill="#a0a0a0" /><rect x="26" y="378" width="1" height="1" fill="#a0a0a0" /><rect x="26" y="380" width="1" height="1" fill="#a0a0a0" /><rect x="26" y="382" width="1" height="1" fill="#a0a0a0" /><rect x="26" y="384" width="1" height="1" fill="#a0a0a0" /><rect x="26" y="386" width="1" height="1" fill="#a0a0a0" /><rect x="26" y="388" width="1" height="1" fill="#a0a0a0" /><rect x="26" y="390" width="1" height="1" fill="#a0a0a0" /><rect x="26" y="392" width="1" height="1" fill="#a0a0a0" /><rect x="26" y="394" width="1" height="1" fill="#a0a0a0" /><rect x="26" y="396" width="1" height="1" fill="#a0a0a0" /><rect x="26" y="398" width="1" height="1" fill="#a0a0a0" /><rect x="26" y="400" width="1" height="1" fill="#a0a0a0" /><rect x="26" y="402" width="1" height="1" fill="#a0a0a0" /><rect x="26" y="404" width="1" height="1" fill="#a0a0a0" /><rect x="26" y="406" width="1" height="1" fill="#a0a0a0" /><rect x="26" y="408" width="1" height="1" fill="#a0a0a0" /><rect x="26" y="410" width="1" height="1" fill="#a0a0a0" /><rect x="26" y="412" width="1" height="1" fill="#a0a0a0" /><rect x="26" y="414" width="1" height="1" fill="#a0a0a0" /><rect x="26" y="416" width="1" height="1" fill="#a0a0a0" /><rect x="26" y="418" width="1" height="1" fill="#a0a0a0" /><rect x="26" y="420" width="1" height="1" fill="#a0a0a0" /><rect x="26" y="422" width="1" height="1" fill="#a0a0a0" /><rect x="26" y="424" width="1" height="1" fill="#a0a0a0" /><rect x="26" y="426" width="1" height="1" fill="#a0a0a0" /><rect x="26" y="428" width="1" height="1" fill="#a0a0a0" /><rect x="26" y="430" width="1" height="1" fill="#a0a0a0" /><rect x="26" y="432" width="1" height="1" fill="#a0a0a0" /><rect x="26" y="434" width="1" height="1" fill="#a0a0a0" /><rect x="26" y="436" width="1" height="1" fill="#a0a0a0" /><rect x="26" y="438" width="1" height="1" fill="#a0a0a0" /><rect x="26" y="440" width="1" height="1" fill="#a0a0a0" /><rect x="26" y="442" width="1" height="1" fill="#a0a0a0" /><rect x="26" y="444" width="1" height="1" fill="#a0a0a0" /><rect x="26" y="446" width="1" height="1" fill="#a0a0a0" /><rect x="26" y="448" width="1" height="1" fill="#a0a0a0" /><rect x="26" y="450" width="1" height="1" fill="#a0a0a0" /><rect x="26" y="452" width="1" height="1" fill="#a0a0a0" /><rect x="26" y="454" width="1" height="1" fill="#a0a0a0" /><rect x="26" y="456" width="1" height="1" fill="#a0a0a0" /><rect x="26" y="458" width="1" height="1" fill="#a0a0a0" /><rect x="26" y="460" width="1" height="1" fill="#a0a0a0" /><rect x="26" y="462" width="1" height="1" fill="#a0a0a0" /><rect x="26" y="464" width="1" height="1" fill="#a0a0a0" /><rect x="26" y="466" width="1" height="1" fill="#a0a0a0" /><rect x="26" y="468" width="1" height="1" fill="#a0a0a0" /><rect x="26" y="470" width="1" height="1" fill="#a0a0a0" /><rect x="26" y="472" width="1" height="1" fill="#a0a0a0" /><rect x="26" y="474" width="1" height="1" fill="#a0a0a0" /><rect x="26" y="476" width="1" height="1" fill="#a0a0a0" /><rect x="26" y="478" width="1" height="1" fill="#a0a0a0" /><rect x="26" y="480" width="1" height="1" fill="#a0a0a0" /><rect x="26" y="482" width="1" height="1" fill="#a0a0a0" /><rect x="26" y="484" width="1" height="1" fill="#a0a0a0" /><rect x="26" y="486" width="1" height="1" fill="#a0a0a0" /><rect x="26" y="488" width="1" height="1" fill="#a0a0a0" /><rect x="26" y="490" width="1" height="1" fill="#a0a0a0" /><rect x="26" y="492" width="1" height="1" fill="#a0a0a0" /><rect x="26" y="494" width="1" height="1" fill="#a0a0a0" /><rect x="26" y="496" width="1" height="1" fill="#a0a0a0" /><rect x="26" y="498" width="1" height="1" fill="#a0a0a0" /><rect x="26" y="500" width="1" height="1" fill="#a0a0a0" /><rect x="26" y="502" width="1" height="1" fill="#a0a0a0" /><rect x="26" y="504" width="1" height="1" fill="#a0a0a0" /><rect x="26" y="506" width="1" height="1" fill="#a0a0a0" /><rect x="26" y="508" width="1" height="1" fill="#a0a0a0" /><rect x="26" y="510" width="1" height="1" fill="#a0a0a0" /><rect x="26" y="512" width="1" height="1" fill="#a0a0a0" /><rect x="26" y="514" width="1" height="1" fill="#a0a0a0" /><rect x="26" y="516" width="1" height="1" fill="#a0a0a0" /><rect x="26" y="518" width="1" height="1" fill="#a0a0a0" /><rect x="26" y="520" width="1" height="1" fill="#a0a0a0" /><rect x="26" y="522" width="1" height="1" fill="#a0a0a0" /><rect x="22.5" y="125.5" width="8" height="8" rx="1" fill="#f4f4f4" stroke="#9a9a9a"/><rect x="24" y="129" width="5" height="1" fill="#3050a0" /><rect x="32" y="129" width="1" height="1" fill="#a0a0a0" /><rect x="34" y="129" width="1" height="1" fill="#a0a0a0" /><rect x="36" y="129" width="1" height="1" fill="#a0a0a0" /><path d="M39.5 126.5v-2l1-1h5l1 1v1h6v10h-13z" fill="url(#dith)" stroke="#8a8a8a"/><rect x="52" y="126" width="1.5" height="11" fill="#000"/><rect x="40" y="136" width="13.5" height="1.5" fill="#000"/><rect x="41.5" y="128.5" width="8" height="6" fill="#fff" stroke="#000080" stroke-width="1.5"/><rect x="43" y="130" width="4" height="3" fill="#c0c0c0"/><rect x="39" y="129" width="2" height="1" fill="#000080"/><rect x="39" y="133" width="2" height="1" fill="#000080"/><rect x="50" y="129" width="2" height="1" fill="#000080"/><rect x="50" y="133" width="2" height="1" fill="#000080"/><path d="M60 122h3v1h-3zM64 122h5v1h-5zM76 122h1v1h-1zM84 122h1v1h-1zM89 122h1v1h-1zM59 123h1v1h-1zM61 123h1v1h-1zM63 123h1v1h-1zM68 123h1v1h-1zM71 123h10v1h-10zM84 123h1v1h-1zM89 123h1v1h-1zM60 124h1v1h-1zM63 124h1v1h-1zM68 124h1v1h-1zM71 124h1v1h-1zM84 124h1v1h-1zM87 124h6v1h-6zM60 125h1v1h-1zM63 125h1v1h-1zM68 125h1v1h-1zM71 125h1v1h-1zM73 125h7v1h-7zM83 125h3v1h-3zM89 125h1v1h-1zM92 125h1v1h-1zM59 126h4v1h-4zM64 126h5v1h-5zM71 126h1v1h-1zM78 126h2v1h-2zM84 126h1v1h-1zM89 126h1v1h-1zM92 126h1v1h-1zM60 127h1v1h-1zM71 127h1v1h-1zM75 127h3v1h-3zM84 127h1v1h-1zM89 127h1v1h-1zM92 127h1v1h-1zM59 128h1v1h-1zM61 128h1v1h-1zM63 128h6v1h-6zM71 128h1v1h-1zM73 128h8v1h-8zM84 128h1v1h-1zM86 128h7v1h-7zM59 129h2v1h-2zM62 129h1v1h-1zM66 129h1v1h-1zM71 129h1v1h-1zM76 129h1v1h-1zM80 129h1v1h-1zM84 129h2v1h-2zM89 129h2v1h-2zM58 130h3v1h-3zM63 130h6v1h-6zM71 130h1v1h-1zM76 130h1v1h-1zM79 130h1v1h-1zM83 130h2v1h-2zM88 130h1v1h-1zM90 130h1v1h-1zM60 131h1v1h-1zM66 131h1v1h-1zM71 131h1v1h-1zM76 131h1v1h-1zM88 131h1v1h-1zM91 131h1v1h-1zM60 132h1v1h-1zM66 132h1v1h-1zM71 132h1v1h-1zM76 132h1v1h-1zM87 132h1v1h-1zM91 132h2v1h-2zM60 133h1v1h-1zM63 133h8v1h-8zM74 133h3v1h-3zM86 133h1v1h-1zM92 133h1v1h-1z" fill="#000"/><rect x="45" y="137" width="1" height="1" fill="#a0a0a0" /><rect x="45" y="139" width="1" height="1" fill="#a0a0a0" /><rect x="45" y="141" width="1" height="1" fill="#a0a0a0" /><rect x="45" y="143" width="1" height="1" fill="#a0a0a0" /><rect x="45" y="145" width="1" height="1" fill="#a0a0a0" /><rect x="45" y="147" width="1" height="1" fill="#a0a0a0" /><rect x="45" y="149" width="1" height="1" fill="#a0a0a0" /><rect x="45" y="151" width="1" height="1" fill="#a0a0a0" /><rect x="45" y="153" width="1" height="1" fill="#a0a0a0" /><rect x="45" y="155" width="1" height="1" fill="#a0a0a0" /><rect x="45" y="157" width="1" height="1" fill="#a0a0a0" /><rect x="45" y="159" width="1" height="1" fill="#a0a0a0" /><rect x="45" y="161" width="1" height="1" fill="#a0a0a0" /><rect x="45" y="163" width="1" height="1" fill="#a0a0a0" /><rect x="45" y="165" width="1" height="1" fill="#a0a0a0" /><rect x="45" y="167" width="1" height="1" fill="#a0a0a0" /><rect x="45" y="169" width="1" height="1" fill="#a0a0a0" /><rect x="45" y="171" width="1" height="1" fill="#a0a0a0" /><rect x="45" y="173" width="1" height="1" fill="#a0a0a0" /><rect x="45" y="175" width="1" height="1" fill="#a0a0a0" /><rect x="45" y="177" width="1" height="1" fill="#a0a0a0" /><rect x="45" y="179" width="1" height="1" fill="#a0a0a0" /><rect x="45" y="181" width="1" height="1" fill="#a0a0a0" /><rect x="45" y="183" width="1" height="1" fill="#a0a0a0" /><rect x="45" y="185" width="1" height="1" fill="#a0a0a0" /><rect x="45" y="187" width="1" height="1" fill="#a0a0a0" /><rect x="45" y="189" width="1" height="1" fill="#a0a0a0" /><rect x="45" y="191" width="1" height="1" fill="#a0a0a0" /><rect x="45" y="193" width="1" height="1" fill="#a0a0a0" /><rect x="45" y="195" width="1" height="1" fill="#a0a0a0" /><rect x="45" y="197" width="1" height="1" fill="#a0a0a0" /><rect x="45" y="199" width="1" height="1" fill="#a0a0a0" /><rect x="45" y="201" width="1" height="1" fill="#a0a0a0" /><rect x="45" y="203" width="1" height="1" fill="#a0a0a0" /><rect x="45" y="205" width="1" height="1" fill="#a0a0a0" /><rect x="45" y="207" width="1" height="1" fill="#a0a0a0" /><rect x="45" y="209" width="1" height="1" fill="#a0a0a0" /><rect x="45" y="211" width="1" height="1" fill="#a0a0a0" /><rect x="45" y="213" width="1" height="1" fill="#a0a0a0" /><rect x="45" y="215" width="1" height="1" fill="#a0a0a0" /><rect x="45" y="217" width="1" height="1" fill="#a0a0a0" /><rect x="45" y="219" width="1" height="1" fill="#a0a0a0" /><rect x="45" y="221" width="1" height="1" fill="#a0a0a0" /><rect x="45" y="223" width="1" height="1" fill="#a0a0a0" /><rect x="45" y="225" width="1" height="1" fill="#a0a0a0" /><rect x="45" y="227" width="1" height="1" fill="#a0a0a0" /><rect x="45" y="229" width="1" height="1" fill="#a0a0a0" /><rect x="45" y="231" width="1" height="1" fill="#a0a0a0" /><rect x="45" y="233" width="1" height="1" fill="#a0a0a0" /><rect x="45" y="235" width="1" height="1" fill="#a0a0a0" /><rect x="45" y="237" width="1" height="1" fill="#a0a0a0" /><rect x="45" y="239" width="1" height="1" fill="#a0a0a0" /><rect x="45" y="241" width="1" height="1" fill="#a0a0a0" /><rect x="45" y="243" width="1" height="1" fill="#a0a0a0" /><rect x="45" y="245" width="1" height="1" fill="#a0a0a0" /><rect x="45" y="247" width="1" height="1" fill="#a0a0a0" /><rect x="45" y="249" width="1" height="1" fill="#a0a0a0" /><rect x="45" y="251" width="1" height="1" fill="#a0a0a0" /><rect x="45" y="253" width="1" height="1" fill="#a0a0a0" /><rect x="45" y="255" width="1" height="1" fill="#a0a0a0" /><rect x="45" y="257" width="1" height="1" fill="#a0a0a0" /><rect x="45" y="259" width="1" height="1" fill="#a0a0a0" /><rect x="45" y="261" width="1" height="1" fill="#a0a0a0" /><rect x="45" y="263" width="1" height="1" fill="#a0a0a0" /><rect x="45" y="265" width="1" height="1" fill="#a0a0a0" /><rect x="45" y="267" width="1" height="1" fill="#a0a0a0" /><rect x="45" y="269" width="1" height="1" fill="#a0a0a0" /><rect x="45" y="271" width="1" height="1" fill="#a0a0a0" /><rect x="45" y="273" width="1" height="1" fill="#a0a0a0" /><rect x="45" y="275" width="1" height="1" fill="#a0a0a0" /><rect x="45" y="277" width="1" height="1" fill="#a0a0a0" /><rect x="45" y="279" width="1" height="1" fill="#a0a0a0" /><rect x="45" y="281" width="1" height="1" fill="#a0a0a0" /><rect x="45" y="283" width="1" height="1" fill="#a0a0a0" /><rect x="45" y="285" width="1" height="1" fill="#a0a0a0" /><rect x="45" y="287" width="1" height="1" fill="#a0a0a0" /><rect x="45" y="289" width="1" height="1" fill="#a0a0a0" /><rect x="45" y="291" width="1" height="1" fill="#a0a0a0" /><rect x="45" y="293" width="1" height="1" fill="#a0a0a0" /><rect x="45" y="295" width="1" height="1" fill="#a0a0a0" /><rect x="45" y="297" width="1" height="1" fill="#a0a0a0" /><rect x="45" y="299" width="1" height="1" fill="#a0a0a0" /><rect x="45" y="301" width="1" height="1" fill="#a0a0a0" /><rect x="45" y="303" width="1" height="1" fill="#a0a0a0" /><rect x="45" y="305" width="1" height="1" fill="#a0a0a0" /><rect x="45" y="307" width="1" height="1" fill="#a0a0a0" /><rect x="45" y="309" width="1" height="1" fill="#a0a0a0" /><rect x="45" y="311" width="1" height="1" fill="#a0a0a0" /><rect x="45" y="313" width="1" height="1" fill="#a0a0a0" /><rect x="45" y="315" width="1" height="1" fill="#a0a0a0" /><rect x="45" y="317" width="1" height="1" fill="#a0a0a0" /><rect x="45" y="319" width="1" height="1" fill="#a0a0a0" /><rect x="45" y="321" width="1" height="1" fill="#a0a0a0" /><rect x="45" y="323" width="1" height="1" fill="#a0a0a0" /><rect x="45" y="325" width="1" height="1" fill="#a0a0a0" /><rect x="45" y="327" width="1" height="1" fill="#a0a0a0" /><rect x="45" y="329" width="1" height="1" fill="#a0a0a0" /><rect x="45" y="331" width="1" height="1" fill="#a0a0a0" /><rect x="45" y="333" width="1" height="1" fill="#a0a0a0" /><rect x="45" y="335" width="1" height="1" fill="#a0a0a0" /><rect x="45" y="337" width="1" height="1" fill="#a0a0a0" /><rect x="45" y="339" width="1" height="1" fill="#a0a0a0" /><rect x="45" y="341" width="1" height="1" fill="#a0a0a0" /><rect x="45" y="343" width="1" height="1" fill="#a0a0a0" /><rect x="45" y="345" width="1" height="1" fill="#a0a0a0" /><rect x="45" y="347" width="1" height="1" fill="#a0a0a0" /><rect x="45" y="349" width="1" height="1" fill="#a0a0a0" /><rect x="45" y="351" width="1" height="1" fill="#a0a0a0" /><rect x="45" y="353" width="1" height="1" fill="#a0a0a0" /><rect x="45" y="355" width="1" height="1" fill="#a0a0a0" /><rect x="45" y="357" width="1" height="1" fill="#a0a0a0" /><rect x="45" y="359" width="1" height="1" fill="#a0a0a0" /><rect x="45" y="361" width="1" height="1" fill="#a0a0a0" /><rect x="45" y="363" width="1" height="1" fill="#a0a0a0" /><rect x="45" y="365" width="1" height="1" fill="#a0a0a0" /><rect x="45" y="367" width="1" height="1" fill="#a0a0a0" /><rect x="45" y="369" width="1" height="1" fill="#a0a0a0" /><rect x="45" y="371" width="1" height="1" fill="#a0a0a0" /><rect x="45" y="373" width="1" height="1" fill="#a0a0a0" /><rect x="45" y="375" width="1" height="1" fill="#a0a0a0" /><rect x="45" y="377" width="1" height="1" fill="#a0a0a0" /><rect x="45" y="379" width="1" height="1" fill="#a0a0a0" /><rect x="45" y="381" width="1" height="1" fill="#a0a0a0" /><rect x="45" y="383" width="1" height="1" fill="#a0a0a0" /><rect x="45" y="385" width="1" height="1" fill="#a0a0a0" /><rect x="45" y="387" width="1" height="1" fill="#a0a0a0" /><rect x="45" y="389" width="1" height="1" fill="#a0a0a0" /><rect x="45" y="391" width="1" height="1" fill="#a0a0a0" /><rect x="45" y="393" width="1" height="1" fill="#a0a0a0" /><rect x="45" y="395" width="1" height="1" fill="#a0a0a0" /><rect x="45" y="397" width="1" height="1" fill="#a0a0a0" /><rect x="45" y="399" width="1" height="1" fill="#a0a0a0" /><rect x="45" y="401" width="1" height="1" fill="#a0a0a0" /><rect x="45" y="403" width="1" height="1" fill="#a0a0a0" /><rect x="45" y="405" width="1" height="1" fill="#a0a0a0" /><rect x="45" y="407" width="1" height="1" fill="#a0a0a0" /><rect x="45" y="409" width="1" height="1" fill="#a0a0a0" /><rect x="45" y="411" width="1" height="1" fill="#a0a0a0" /><rect x="45" y="413" width="1" height="1" fill="#a0a0a0" /><rect x="45" y="415" width="1" height="1" fill="#a0a0a0" /><rect x="45" y="417" width="1" height="1" fill="#a0a0a0" /><rect x="45" y="419" width="1" height="1" fill="#a0a0a0" /><rect x="45" y="421" width="1" height="1" fill="#a0a0a0" /><rect x="45" y="423" width="1" height="1" fill="#a0a0a0" /><rect x="45" y="425" width="1" height="1" fill="#a0a0a0" /><rect x="45" y="427" width="1" height="1" fill="#a0a0a0" /><rect x="45" y="429" width="1" height="1" fill="#a0a0a0" /><rect x="45" y="431" width="1" height="1" fill="#a0a0a0" /><rect x="45" y="433" width="1" height="1" fill="#a0a0a0" /><rect x="45" y="435" width="1" height="1" fill="#a0a0a0" /><rect x="45" y="437" width="1" height="1" fill="#a0a0a0" /><rect x="45" y="439" width="1" height="1" fill="#a0a0a0" /><rect x="45" y="441" width="1" height="1" fill="#a0a0a0" /><rect x="45" y="443" width="1" height="1" fill="#a0a0a0" /><rect x="45" y="445" width="1" height="1" fill="#a0a0a0" /><rect x="45" y="447" width="1" height="1" fill="#a0a0a0" /><rect x="45" y="449" width="1" height="1" fill="#a0a0a0" /><rect x="45" y="451" width="1" height="1" fill="#a0a0a0" /><rect x="45" y="453" width="1" height="1" fill="#a0a0a0" /><rect x="45" y="455" width="1" height="1" fill="#a0a0a0" /><rect x="45" y="457" width="1" height="1" fill="#a0a0a0" /><rect x="45" y="459" width="1" height="1" fill="#a0a0a0" /><rect x="45" y="461" width="1" height="1" fill="#a0a0a0" /><rect x="45" y="463" width="1" height="1" fill="#a0a0a0" /><rect x="45" y="465" width="1" height="1" fill="#a0a0a0" /><rect x="45" y="467" width="1" height="1" fill="#a0a0a0" /><rect x="45" y="469" width="1" height="1" fill="#a0a0a0" /><rect x="45" y="471" width="1" height="1" fill="#a0a0a0" /><rect x="45" y="473" width="1" height="1" fill="#a0a0a0" /><rect x="45" y="475" width="1" height="1" fill="#a0a0a0" /><rect x="45" y="477" width="1" height="1" fill="#a0a0a0" /><rect x="45" y="479" width="1" height="1" fill="#a0a0a0" /><rect x="45" y="481" width="1" height="1" fill="#a0a0a0" /><rect x="45" y="483" width="1" height="1" fill="#a0a0a0" /><rect x="45" y="485" width="1" height="1" fill="#a0a0a0" /><rect x="45" y="487" width="1" height="1" fill="#a0a0a0" /><rect x="45" y="489" width="1" height="1" fill="#a0a0a0" /><rect x="45" y="491" width="1" height="1" fill="#a0a0a0" /><rect x="45" y="493" width="1" height="1" fill="#a0a0a0" /><rect x="45" y="495" width="1" height="1" fill="#a0a0a0" /><rect x="45" y="497" width="1" height="1" fill="#a0a0a0" /><rect x="45" y="499" width="1" height="1" fill="#a0a0a0" /><rect x="45" y="501" width="1" height="1" fill="#a0a0a0" /><rect x="45" y="503" width="1" height="1" fill="#a0a0a0" /><rect x="45" y="505" width="1" height="1" fill="#a0a0a0" /><rect x="45" y="507" width="1" height="1" fill="#a0a0a0" /><rect x="45" y="509" width="1" height="1" fill="#a0a0a0" /><rect x="45" y="511" width="1" height="1" fill="#a0a0a0" /><rect x="45" y="513" width="1" height="1" fill="#a0a0a0" /><rect x="45" y="515" width="1" height="1" fill="#a0a0a0" /><rect x="45" y="517" width="1" height="1" fill="#a0a0a0" /><rect x="45" y="519" width="1" height="1" fill="#a0a0a0" /><rect x="45" y="521" width="1" height="1" fill="#a0a0a0" /><rect x="45" y="523" width="1" height="1" fill="#a0a0a0" /><rect x="46" y="145" width="1" height="1" fill="#a0a0a0" /><rect x="48" y="145" width="1" height="1" fill="#a0a0a0" /><rect x="50" y="145" width="1" height="1" fill="#a0a0a0" /><rect x="52" y="145" width="1" height="1" fill="#a0a0a0" /><rect x="54" y="145" width="1" height="1" fill="#a0a0a0" /><rect x="58.5" y="140.5" width="12" height="9" fill="#fff" stroke="#000080"/><rect x="56" y="142" width="2" height="1.5" fill="#000080"/><rect x="56" y="146.5" width="2" height="1.5" fill="#000080"/><rect x="71" y="144" width="1" height="1.5" fill="#000080"/><rect x="71" y="146" width="1" height="6" fill="#909090"/><rect x="63" y="152" width="9" height="1" fill="#909090"/><rect x="58" y="140" width="6" height="5" fill="#000"/><path d="M61.5 141.5l1.5 2h-0.5v5h-2v-5h-0.5z" fill="#c8c8c8"/><rect x="64" y="141" width="5" height="3" fill="#c8c8c8"/><rect x="62.5" y="145.5" width="8" height="6" fill="url(#chk)" stroke="#000"/><rect x="66" y="147" width="1" height="2" fill="#000"/><text x="77" y="149" font-size="11" fill="#000" letter-spacing="-0.15">MAIN (OB1)</text><rect x="46" y="161" width="1" height="1" fill="#a0a0a0" /><rect x="48" y="161" width="1" height="1" fill="#a0a0a0" /><rect x="50" y="161" width="1" height="1" fill="#a0a0a0" /><rect x="52" y="161" width="1" height="1" fill="#a0a0a0" /><rect x="54" y="161" width="1" height="1" fill="#a0a0a0" /><rect x="58.5" y="156.5" width="12" height="9" fill="#fff" stroke="#000080"/><rect x="56" y="158" width="2" height="1.5" fill="#000080"/><rect x="56" y="162.5" width="2" height="1.5" fill="#000080"/><rect x="71" y="160" width="1" height="1.5" fill="#000080"/><rect x="71" y="162" width="1" height="6" fill="#909090"/><rect x="63" y="168" width="9" height="1" fill="#909090"/><rect x="58" y="156" width="6" height="5" fill="#000"/><path d="M61.5 157.5l1.5 2h-0.5v5h-2v-5h-0.5z" fill="#c8c8c8"/><rect x="64" y="157" width="5" height="3" fill="#c8c8c8"/><rect x="62.5" y="161.5" width="8" height="6" fill="url(#chk)" stroke="#000"/><rect x="66" y="163" width="1" height="2" fill="#000"/><text x="77" y="165" font-size="11" fill="#000" letter-spacing="-0.15">SBR_0 (SBR0)</text><rect x="46" y="177" width="1" height="1" fill="#a0a0a0" /><rect x="48" y="177" width="1" height="1" fill="#a0a0a0" /><rect x="50" y="177" width="1" height="1" fill="#a0a0a0" /><rect x="52" y="177" width="1" height="1" fill="#a0a0a0" /><rect x="54" y="177" width="1" height="1" fill="#a0a0a0" /><rect x="58.5" y="172.5" width="12" height="9" fill="#fff" stroke="#000080"/><rect x="56" y="174" width="2" height="1.5" fill="#000080"/><rect x="56" y="178.5" width="2" height="1.5" fill="#000080"/><rect x="71" y="176" width="1" height="1.5" fill="#000080"/><rect x="71" y="178" width="1" height="6" fill="#909090"/><rect x="63" y="184" width="9" height="1" fill="#909090"/><rect x="58" y="172" width="6" height="5" fill="#000"/><path d="M61.5 173.5l1.5 2h-0.5v5h-2v-5h-0.5z" fill="#c8c8c8"/><rect x="64" y="173" width="5" height="3" fill="#c8c8c8"/><rect x="62.5" y="177.5" width="8" height="6" fill="url(#chk)" stroke="#000"/><rect x="66" y="179" width="1" height="2" fill="#000"/><text x="77" y="181" font-size="11" fill="#000" letter-spacing="-0.15">SBR_1 (SBR1)</text><rect x="46" y="193" width="1" height="1" fill="#a0a0a0" /><rect x="48" y="193" width="1" height="1" fill="#a0a0a0" /><rect x="50" y="193" width="1" height="1" fill="#a0a0a0" /><rect x="52" y="193" width="1" height="1" fill="#a0a0a0" /><rect x="54" y="193" width="1" height="1" fill="#a0a0a0" /><rect x="58.5" y="188.5" width="12" height="9" fill="#fff" stroke="#000080"/><rect x="56" y="190" width="2" height="1.5" fill="#000080"/><rect x="56" y="194.5" width="2" height="1.5" fill="#000080"/><rect x="71" y="192" width="1" height="1.5" fill="#000080"/><rect x="71" y="194" width="1" height="6" fill="#909090"/><rect x="63" y="200" width="9" height="1" fill="#909090"/><rect x="58" y="188" width="6" height="5" fill="#000"/><path d="M61.5 189.5l1.5 2h-0.5v5h-2v-5h-0.5z" fill="#c8c8c8"/><rect x="64" y="189" width="5" height="3" fill="#c8c8c8"/><rect x="62.5" y="193.5" width="8" height="6" fill="url(#chk)" stroke="#000"/><rect x="66" y="195" width="1" height="2" fill="#000"/><text x="77" y="197" font-size="11" fill="#000" letter-spacing="-0.15">HANDWHL (SBR2)</text><rect x="46" y="209" width="1" height="1" fill="#a0a0a0" /><rect x="48" y="209" width="1" height="1" fill="#a0a0a0" /><rect x="50" y="209" width="1" height="1" fill="#a0a0a0" /><rect x="52" y="209" width="1" height="1" fill="#a0a0a0" /><rect x="54" y="209" width="1" height="1" fill="#a0a0a0" /><rect x="58.5" y="204.5" width="12" height="9" fill="#fff" stroke="#000080"/><rect x="56" y="206" width="2" height="1.5" fill="#000080"/><rect x="56" y="210.5" width="2" height="1.5" fill="#000080"/><rect x="71" y="208" width="1" height="1.5" fill="#000080"/><rect x="71" y="210" width="1" height="6" fill="#909090"/><rect x="63" y="216" width="9" height="1" fill="#909090"/><rect x="58" y="204" width="6" height="5" fill="#000"/><path d="M61.5 205.5l1.5 2h-0.5v5h-2v-5h-0.5z" fill="#c8c8c8"/><rect x="64" y="205" width="5" height="3" fill="#c8c8c8"/><rect x="62.5" y="209.5" width="8" height="6" fill="url(#chk)" stroke="#000"/><rect x="66" y="211" width="1" height="2" fill="#000"/><text x="77" y="213" font-size="11" fill="#000" letter-spacing="-0.15">USR_INI (SBR31)</text><rect x="46" y="225" width="1" height="1" fill="#a0a0a0" /><rect x="48" y="225" width="1" height="1" fill="#a0a0a0" /><rect x="50" y="225" width="1" height="1" fill="#a0a0a0" /><rect x="52" y="225" width="1" height="1" fill="#a0a0a0" /><rect x="54" y="225" width="1" height="1" fill="#a0a0a0" /><rect x="58.5" y="220.5" width="12" height="9" fill="#fff" stroke="#000080"/><rect x="56" y="222" width="2" height="1.5" fill="#000080"/><rect x="56" y="226.5" width="2" height="1.5" fill="#000080"/><rect x="71" y="224" width="1" height="1.5" fill="#000080"/><rect x="71" y="226" width="1" height="6" fill="#909090"/><rect x="63" y="232" width="9" height="1" fill="#909090"/><rect x="58" y="220" width="6" height="5" fill="#000"/><path d="M61.5 221.5l1.5 2h-0.5v5h-2v-5h-0.5z" fill="#c8c8c8"/><rect x="64" y="221" width="5" height="3" fill="#c8c8c8"/><rect x="62.5" y="225.5" width="8" height="6" fill="url(#chk)" stroke="#000"/><rect x="66" y="227" width="1" height="2" fill="#000"/><text x="77" y="229" font-size="11" fill="#000" letter-spacing="-0.15">PLC_INI (SBR32)</text><rect x="46" y="241" width="1" height="1" fill="#a0a0a0" /><rect x="48" y="241" width="1" height="1" fill="#a0a0a0" /><rect x="50" y="241" width="1" height="1" fill="#a0a0a0" /><rect x="52" y="241" width="1" height="1" fill="#a0a0a0" /><rect x="54" y="241" width="1" height="1" fill="#a0a0a0" /><rect x="58.5" y="236.5" width="12" height="9" fill="#fff" stroke="#000080"/><rect x="56" y="238" width="2" height="1.5" fill="#000080"/><rect x="56" y="242.5" width="2" height="1.5" fill="#000080"/><rect x="71" y="240" width="1" height="1.5" fill="#000080"/><rect x="71" y="242" width="1" height="6" fill="#909090"/><rect x="63" y="248" width="9" height="1" fill="#909090"/><rect x="58" y="236" width="6" height="5" fill="#000"/><path d="M61.5 237.5l1.5 2h-0.5v5h-2v-5h-0.5z" fill="#c8c8c8"/><rect x="64" y="237" width="5" height="3" fill="#c8c8c8"/><rect x="62.5" y="241.5" width="8" height="6" fill="url(#chk)" stroke="#000"/><rect x="66" y="243" width="1" height="2" fill="#000"/><text x="77" y="245" font-size="11" fill="#000" letter-spacing="-0.15">EMG_STOP (SBR33)</text><rect x="46" y="257" width="1" height="1" fill="#a0a0a0" /><rect x="48" y="257" width="1" height="1" fill="#a0a0a0" /><rect x="50" y="257" width="1" height="1" fill="#a0a0a0" /><rect x="52" y="257" width="1" height="1" fill="#a0a0a0" /><rect x="54" y="257" width="1" height="1" fill="#a0a0a0" /><rect x="58.5" y="252.5" width="12" height="9" fill="#fff" stroke="#000080"/><rect x="56" y="254" width="2" height="1.5" fill="#000080"/><rect x="56" y="258.5" width="2" height="1.5" fill="#000080"/><rect x="71" y="256" width="1" height="1.5" fill="#000080"/><rect x="71" y="258" width="1" height="6" fill="#909090"/><rect x="63" y="264" width="9" height="1" fill="#909090"/><rect x="58" y="252" width="6" height="5" fill="#000"/><path d="M61.5 253.5l1.5 2h-0.5v5h-2v-5h-0.5z" fill="#c8c8c8"/><rect x="64" y="253" width="5" height="3" fill="#c8c8c8"/><rect x="62.5" y="257.5" width="8" height="6" fill="url(#chk)" stroke="#000"/><rect x="66" y="259" width="1" height="2" fill="#000"/><text x="77" y="261" font-size="11" fill="#000" letter-spacing="-0.15">MCP_802D (SBR34)</text><rect x="46" y="273" width="1" height="1" fill="#a0a0a0" /><rect x="48" y="273" width="1" height="1" fill="#a0a0a0" /><rect x="50" y="273" width="1" height="1" fill="#a0a0a0" /><rect x="52" y="273" width="1" height="1" fill="#a0a0a0" /><rect x="54" y="273" width="1" height="1" fill="#a0a0a0" /><rect x="58.5" y="268.5" width="12" height="9" fill="#fff" stroke="#000080"/><rect x="56" y="270" width="2" height="1.5" fill="#000080"/><rect x="56" y="274.5" width="2" height="1.5" fill="#000080"/><rect x="71" y="272" width="1" height="1.5" fill="#000080"/><rect x="71" y="274" width="1" height="6" fill="#909090"/><rect x="63" y="280" width="9" height="1" fill="#909090"/><rect x="58" y="268" width="6" height="5" fill="#000"/><path d="M61.5 269.5l1.5 2h-0.5v5h-2v-5h-0.5z" fill="#c8c8c8"/><rect x="64" y="269" width="5" height="3" fill="#c8c8c8"/><rect x="62.5" y="273.5" width="8" height="6" fill="url(#chk)" stroke="#000"/><rect x="66" y="275" width="1" height="2" fill="#000"/><text x="77" y="277" font-size="11" fill="#000" letter-spacing="-0.15">SPD_OVR (SBR35)</text><rect x="46" y="289" width="1" height="1" fill="#a0a0a0" /><rect x="48" y="289" width="1" height="1" fill="#a0a0a0" /><rect x="50" y="289" width="1" height="1" fill="#a0a0a0" /><rect x="52" y="289" width="1" height="1" fill="#a0a0a0" /><rect x="54" y="289" width="1" height="1" fill="#a0a0a0" /><rect x="58.5" y="284.5" width="12" height="9" fill="#fff" stroke="#000080"/><rect x="56" y="286" width="2" height="1.5" fill="#000080"/><rect x="56" y="290.5" width="2" height="1.5" fill="#000080"/><rect x="71" y="288" width="1" height="1.5" fill="#000080"/><rect x="71" y="290" width="1" height="6" fill="#909090"/><rect x="63" y="296" width="9" height="1" fill="#909090"/><rect x="58" y="284" width="6" height="5" fill="#000"/><path d="M61.5 285.5l1.5 2h-0.5v5h-2v-5h-0.5z" fill="#c8c8c8"/><rect x="64" y="285" width="5" height="3" fill="#c8c8c8"/><rect x="62.5" y="289.5" width="8" height="6" fill="url(#chk)" stroke="#000"/><rect x="66" y="291" width="1" height="2" fill="#000"/><text x="77" y="293" font-size="11" fill="#000" letter-spacing="-0.15">MCP_SIMU (SBR37)</text><rect x="46" y="305" width="1" height="1" fill="#a0a0a0" /><rect x="48" y="305" width="1" height="1" fill="#a0a0a0" /><rect x="50" y="305" width="1" height="1" fill="#a0a0a0" /><rect x="52" y="305" width="1" height="1" fill="#a0a0a0" /><rect x="54" y="305" width="1" height="1" fill="#a0a0a0" /><rect x="58.5" y="300.5" width="12" height="9" fill="#fff" stroke="#000080"/><rect x="56" y="302" width="2" height="1.5" fill="#000080"/><rect x="56" y="306.5" width="2" height="1.5" fill="#000080"/><rect x="71" y="304" width="1" height="1.5" fill="#000080"/><rect x="71" y="306" width="1" height="6" fill="#909090"/><rect x="63" y="312" width="9" height="1" fill="#909090"/><rect x="58" y="300" width="6" height="5" fill="#000"/><path d="M61.5 301.5l1.5 2h-0.5v5h-2v-5h-0.5z" fill="#c8c8c8"/><rect x="64" y="301" width="5" height="3" fill="#c8c8c8"/><rect x="62.5" y="305.5" width="8" height="6" fill="url(#chk)" stroke="#000"/><rect x="66" y="307" width="1" height="2" fill="#000"/><text x="77" y="309" font-size="11" fill="#000" letter-spacing="-0.15">MCP_NCK (SBR38)</text><rect x="46" y="321" width="1" height="1" fill="#a0a0a0" /><rect x="48" y="321" width="1" height="1" fill="#a0a0a0" /><rect x="50" y="321" width="1" height="1" fill="#a0a0a0" /><rect x="52" y="321" width="1" height="1" fill="#a0a0a0" /><rect x="54" y="321" width="1" height="1" fill="#a0a0a0" /><rect x="58.5" y="316.5" width="12" height="9" fill="#fff" stroke="#000080"/><rect x="56" y="318" width="2" height="1.5" fill="#000080"/><rect x="56" y="322.5" width="2" height="1.5" fill="#000080"/><rect x="71" y="320" width="1" height="1.5" fill="#000080"/><rect x="71" y="322" width="1" height="6" fill="#909090"/><rect x="63" y="328" width="9" height="1" fill="#909090"/><rect x="58" y="316" width="6" height="5" fill="#000"/><path d="M61.5 317.5l1.5 2h-0.5v5h-2v-5h-0.5z" fill="#c8c8c8"/><rect x="64" y="317" width="5" height="3" fill="#c8c8c8"/><rect x="62.5" y="321.5" width="8" height="6" fill="url(#chk)" stroke="#000"/><rect x="66" y="323" width="1" height="2" fill="#000"/><text x="77" y="325" font-size="11" fill="#000" letter-spacing="-0.15">AXIS_CTL (SBR40)</text><rect x="46" y="337" width="1" height="1" fill="#a0a0a0" /><rect x="48" y="337" width="1" height="1" fill="#a0a0a0" /><rect x="50" y="337" width="1" height="1" fill="#a0a0a0" /><rect x="52" y="337" width="1" height="1" fill="#a0a0a0" /><rect x="54" y="337" width="1" height="1" fill="#a0a0a0" /><rect x="58.5" y="332.5" width="12" height="9" fill="#fff" stroke="#000080"/><rect x="56" y="334" width="2" height="1.5" fill="#000080"/><rect x="56" y="338.5" width="2" height="1.5" fill="#000080"/><rect x="71" y="336" width="1" height="1.5" fill="#000080"/><rect x="71" y="338" width="1" height="6" fill="#909090"/><rect x="63" y="344" width="9" height="1" fill="#909090"/><rect x="58" y="332" width="6" height="5" fill="#000"/><path d="M61.5 333.5l1.5 2h-0.5v5h-2v-5h-0.5z" fill="#c8c8c8"/><rect x="64" y="333" width="5" height="3" fill="#c8c8c8"/><rect x="62.5" y="337.5" width="8" height="6" fill="url(#chk)" stroke="#000"/><rect x="66" y="339" width="1" height="2" fill="#000"/><text x="77" y="341" font-size="11" fill="#000" letter-spacing="-0.15">PLC_AXIS (SBR41)</text><rect x="46" y="353" width="1" height="1" fill="#a0a0a0" /><rect x="48" y="353" width="1" height="1" fill="#a0a0a0" /><rect x="50" y="353" width="1" height="1" fill="#a0a0a0" /><rect x="52" y="353" width="1" height="1" fill="#a0a0a0" /><rect x="54" y="353" width="1" height="1" fill="#a0a0a0" /><rect x="58.5" y="348.5" width="12" height="9" fill="#fff" stroke="#000080"/><rect x="56" y="350" width="2" height="1.5" fill="#000080"/><rect x="56" y="354.5" width="2" height="1.5" fill="#000080"/><rect x="71" y="352" width="1" height="1.5" fill="#000080"/><rect x="71" y="354" width="1" height="6" fill="#909090"/><rect x="63" y="360" width="9" height="1" fill="#909090"/><rect x="58" y="348" width="6" height="5" fill="#000"/><path d="M61.5 349.5l1.5 2h-0.5v5h-2v-5h-0.5z" fill="#c8c8c8"/><rect x="64" y="349" width="5" height="3" fill="#c8c8c8"/><rect x="62.5" y="353.5" width="8" height="6" fill="url(#chk)" stroke="#000"/><rect x="66" y="355" width="1" height="2" fill="#000"/><text x="77" y="357" font-size="11" fill="#000" letter-spacing="-0.15">MEAS_JOG (SBR43)</text><rect x="46" y="369" width="1" height="1" fill="#a0a0a0" /><rect x="48" y="369" width="1" height="1" fill="#a0a0a0" /><rect x="50" y="369" width="1" height="1" fill="#a0a0a0" /><rect x="52" y="369" width="1" height="1" fill="#a0a0a0" /><rect x="54" y="369" width="1" height="1" fill="#a0a0a0" /><rect x="58.5" y="364.5" width="12" height="9" fill="#fff" stroke="#000080"/><rect x="56" y="366" width="2" height="1.5" fill="#000080"/><rect x="56" y="370.5" width="2" height="1.5" fill="#000080"/><rect x="71" y="368" width="1" height="1.5" fill="#000080"/><rect x="71" y="370" width="1" height="6" fill="#909090"/><rect x="63" y="376" width="9" height="1" fill="#909090"/><rect x="58" y="364" width="6" height="5" fill="#000"/><path d="M61.5 365.5l1.5 2h-0.5v5h-2v-5h-0.5z" fill="#c8c8c8"/><rect x="64" y="365" width="5" height="3" fill="#c8c8c8"/><rect x="62.5" y="369.5" width="8" height="6" fill="url(#chk)" stroke="#000"/><rect x="66" y="371" width="1" height="2" fill="#000"/><text x="77" y="373" font-size="11" fill="#000" letter-spacing="-0.15">COOLING (SBR44)</text><rect x="46" y="385" width="1" height="1" fill="#a0a0a0" /><rect x="48" y="385" width="1" height="1" fill="#a0a0a0" /><rect x="50" y="385" width="1" height="1" fill="#a0a0a0" /><rect x="52" y="385" width="1" height="1" fill="#a0a0a0" /><rect x="54" y="385" width="1" height="1" fill="#a0a0a0" /><rect x="58.5" y="380.5" width="12" height="9" fill="#fff" stroke="#000080"/><rect x="56" y="382" width="2" height="1.5" fill="#000080"/><rect x="56" y="386.5" width="2" height="1.5" fill="#000080"/><rect x="71" y="384" width="1" height="1.5" fill="#000080"/><rect x="71" y="386" width="1" height="6" fill="#909090"/><rect x="63" y="392" width="9" height="1" fill="#909090"/><rect x="58" y="380" width="6" height="5" fill="#000"/><path d="M61.5 381.5l1.5 2h-0.5v5h-2v-5h-0.5z" fill="#c8c8c8"/><rect x="64" y="381" width="5" height="3" fill="#c8c8c8"/><rect x="62.5" y="385.5" width="8" height="6" fill="url(#chk)" stroke="#000"/><rect x="66" y="387" width="1" height="2" fill="#000"/><text x="77" y="389" font-size="11" fill="#000" letter-spacing="-0.15">LUBRICAT (SBR45)</text><rect x="46" y="401" width="1" height="1" fill="#a0a0a0" /><rect x="48" y="401" width="1" height="1" fill="#a0a0a0" /><rect x="50" y="401" width="1" height="1" fill="#a0a0a0" /><rect x="52" y="401" width="1" height="1" fill="#a0a0a0" /><rect x="54" y="401" width="1" height="1" fill="#a0a0a0" /><rect x="58.5" y="396.5" width="12" height="9" fill="#fff" stroke="#000080"/><rect x="56" y="398" width="2" height="1.5" fill="#000080"/><rect x="56" y="402.5" width="2" height="1.5" fill="#000080"/><rect x="71" y="400" width="1" height="1.5" fill="#000080"/><rect x="71" y="402" width="1" height="6" fill="#909090"/><rect x="63" y="408" width="9" height="1" fill="#909090"/><rect x="60" y="398" width="2" height="6" fill="#c0c0c0"/><path d="M63 401.5v-3.5q0-2 2-2h3q2 0 2 2v3.5z" fill="#000"/><rect x="65" y="398" width="3" height="3" rx="1" fill="#c0c0c0"/><rect x="62.5" y="401.5" width="8" height="6" fill="url(#dith)" stroke="#000"/><rect x="66" y="403" width="1" height="2" fill="#000"/><text x="77" y="405" font-size="11" fill="#000" letter-spacing="-0.15">TURRET1 (SBR46)</text><rect x="46" y="417" width="1" height="1" fill="#a0a0a0" /><rect x="48" y="417" width="1" height="1" fill="#a0a0a0" /><rect x="50" y="417" width="1" height="1" fill="#a0a0a0" /><rect x="52" y="417" width="1" height="1" fill="#a0a0a0" /><rect x="54" y="417" width="1" height="1" fill="#a0a0a0" /><rect x="58.5" y="412.5" width="12" height="9" fill="#fff" stroke="#000080"/><rect x="56" y="414" width="2" height="1.5" fill="#000080"/><rect x="56" y="418.5" width="2" height="1.5" fill="#000080"/><rect x="71" y="416" width="1" height="1.5" fill="#000080"/><rect x="71" y="418" width="1" height="6" fill="#909090"/><rect x="63" y="424" width="9" height="1" fill="#909090"/><rect x="60" y="414" width="2" height="6" fill="#c0c0c0"/><path d="M63 417.5v-3.5q0-2 2-2h3q2 0 2 2v3.5z" fill="#000"/><rect x="65" y="414" width="3" height="3" rx="1" fill="#c0c0c0"/><rect x="62.5" y="417.5" width="8" height="6" fill="url(#dith)" stroke="#000"/><rect x="66" y="419" width="1" height="2" fill="#000"/><text x="77" y="421" font-size="11" fill="#000" letter-spacing="-0.15">TURRET2 (SBR47)</text><rect x="46" y="433" width="1" height="1" fill="#a0a0a0" /><rect x="48" y="433" width="1" height="1" fill="#a0a0a0" /><rect x="50" y="433" width="1" height="1" fill="#a0a0a0" /><rect x="52" y="433" width="1" height="1" fill="#a0a0a0" /><rect x="54" y="433" width="1" height="1" fill="#a0a0a0" /><rect x="58.5" y="428.5" width="12" height="9" fill="#fff" stroke="#000080"/><rect x="56" y="430" width="2" height="1.5" fill="#000080"/><rect x="56" y="434.5" width="2" height="1.5" fill="#000080"/><rect x="71" y="432" width="1" height="1.5" fill="#000080"/><rect x="71" y="434" width="1" height="6" fill="#909090"/><rect x="63" y="440" width="9" height="1" fill="#909090"/><rect x="60" y="430" width="2" height="6" fill="#c0c0c0"/><path d="M63 433.5v-3.5q0-2 2-2h3q2 0 2 2v3.5z" fill="#000"/><rect x="65" y="430" width="3" height="3" rx="1" fill="#c0c0c0"/><rect x="62.5" y="433.5" width="8" height="6" fill="url(#dith)" stroke="#000"/><rect x="66" y="435" width="1" height="2" fill="#000"/><text x="77" y="437" font-size="11" fill="#000" letter-spacing="-0.15">TOOL_DIR (SBR48)</text><rect x="46" y="449" width="1" height="1" fill="#a0a0a0" /><rect x="48" y="449" width="1" height="1" fill="#a0a0a0" /><rect x="50" y="449" width="1" height="1" fill="#a0a0a0" /><rect x="52" y="449" width="1" height="1" fill="#a0a0a0" /><rect x="54" y="449" width="1" height="1" fill="#a0a0a0" /><rect x="58.5" y="444.5" width="12" height="9" fill="#fff" stroke="#000080"/><rect x="56" y="446" width="2" height="1.5" fill="#000080"/><rect x="56" y="450.5" width="2" height="1.5" fill="#000080"/><rect x="71" y="448" width="1" height="1.5" fill="#000080"/><rect x="71" y="450" width="1" height="6" fill="#909090"/><rect x="63" y="456" width="9" height="1" fill="#909090"/><rect x="60" y="446" width="2" height="6" fill="#c0c0c0"/><path d="M63 449.5v-3.5q0-2 2-2h3q2 0 2 2v3.5z" fill="#000"/><rect x="65" y="446" width="3" height="3" rx="1" fill="#c0c0c0"/><rect x="62.5" y="449.5" width="8" height="6" fill="url(#dith)" stroke="#000"/><rect x="66" y="451" width="1" height="2" fill="#000"/><text x="77" y="453" font-size="11" fill="#000" letter-spacing="-0.15">MGZ_INI (SBR49)</text><rect x="46" y="465" width="1" height="1" fill="#a0a0a0" /><rect x="48" y="465" width="1" height="1" fill="#a0a0a0" /><rect x="50" y="465" width="1" height="1" fill="#a0a0a0" /><rect x="52" y="465" width="1" height="1" fill="#a0a0a0" /><rect x="54" y="465" width="1" height="1" fill="#a0a0a0" /><rect x="58.5" y="460.5" width="12" height="9" fill="#fff" stroke="#000080"/><rect x="56" y="462" width="2" height="1.5" fill="#000080"/><rect x="56" y="466.5" width="2" height="1.5" fill="#000080"/><rect x="71" y="464" width="1" height="1.5" fill="#000080"/><rect x="71" y="466" width="1" height="6" fill="#909090"/><rect x="63" y="472" width="9" height="1" fill="#909090"/><rect x="60" y="462" width="2" height="6" fill="#c0c0c0"/><path d="M63 465.5v-3.5q0-2 2-2h3q2 0 2 2v3.5z" fill="#000"/><rect x="65" y="462" width="3" height="3" rx="1" fill="#c0c0c0"/><rect x="62.5" y="465.5" width="8" height="6" fill="url(#dith)" stroke="#000"/><rect x="66" y="467" width="1" height="2" fill="#000"/><text x="77" y="469" font-size="11" fill="#000" letter-spacing="-0.15">MGZ_SRCH (SBR50)</text><rect x="46" y="481" width="1" height="1" fill="#a0a0a0" /><rect x="48" y="481" width="1" height="1" fill="#a0a0a0" /><rect x="50" y="481" width="1" height="1" fill="#a0a0a0" /><rect x="52" y="481" width="1" height="1" fill="#a0a0a0" /><rect x="54" y="481" width="1" height="1" fill="#a0a0a0" /><rect x="58.5" y="476.5" width="12" height="9" fill="#fff" stroke="#000080"/><rect x="56" y="478" width="2" height="1.5" fill="#000080"/><rect x="56" y="482.5" width="2" height="1.5" fill="#000080"/><rect x="71" y="480" width="1" height="1.5" fill="#000080"/><rect x="71" y="482" width="1" height="6" fill="#909090"/><rect x="63" y="488" width="9" height="1" fill="#909090"/><rect x="60" y="478" width="2" height="6" fill="#c0c0c0"/><path d="M63 481.5v-3.5q0-2 2-2h3q2 0 2 2v3.5z" fill="#000"/><rect x="65" y="478" width="3" height="3" rx="1" fill="#c0c0c0"/><rect x="62.5" y="481.5" width="8" height="6" fill="url(#dith)" stroke="#000"/><rect x="66" y="483" width="1" height="2" fill="#000"/><text x="77" y="485" font-size="11" fill="#000" letter-spacing="-0.15">MGZ_RNEW (SBR51)</text><rect x="46" y="497" width="1" height="1" fill="#a0a0a0" /><rect x="48" y="497" width="1" height="1" fill="#a0a0a0" /><rect x="50" y="497" width="1" height="1" fill="#a0a0a0" /><rect x="52" y="497" width="1" height="1" fill="#a0a0a0" /><rect x="54" y="497" width="1" height="1" fill="#a0a0a0" /><rect x="58.5" y="492.5" width="12" height="9" fill="#fff" stroke="#000080"/><rect x="56" y="494" width="2" height="1.5" fill="#000080"/><rect x="56" y="498.5" width="2" height="1.5" fill="#000080"/><rect x="71" y="496" width="1" height="1.5" fill="#000080"/><rect x="71" y="498" width="1" height="6" fill="#909090"/><rect x="63" y="504" width="9" height="1" fill="#909090"/><rect x="60" y="494" width="2" height="6" fill="#c0c0c0"/><path d="M63 497.5v-3.5q0-2 2-2h3q2 0 2 2v3.5z" fill="#000"/><rect x="65" y="494" width="3" height="3" rx="1" fill="#c0c0c0"/><rect x="62.5" y="497.5" width="8" height="6" fill="url(#dith)" stroke="#000"/><rect x="66" y="499" width="1" height="2" fill="#000"/><text x="77" y="501" font-size="11" fill="#000" letter-spacing="-0.15">GRINDING_CTL (SBR59)</text><rect x="46" y="513" width="1" height="1" fill="#a0a0a0" /><rect x="48" y="513" width="1" height="1" fill="#a0a0a0" /><rect x="50" y="513" width="1" height="1" fill="#a0a0a0" /><rect x="52" y="513" width="1" height="1" fill="#a0a0a0" /><rect x="54" y="513" width="1" height="1" fill="#a0a0a0" /><rect x="58.5" y="508.5" width="12" height="9" fill="#fff" stroke="#000080"/><rect x="56" y="510" width="2" height="1.5" fill="#000080"/><rect x="56" y="514.5" width="2" height="1.5" fill="#000080"/><rect x="71" y="512" width="1" height="1.5" fill="#000080"/><rect x="71" y="514" width="1" height="6" fill="#909090"/><rect x="63" y="520" width="9" height="1" fill="#909090"/><rect x="60" y="510" width="2" height="6" fill="#c0c0c0"/><path d="M63 513.5v-3.5q0-2 2-2h3q2 0 2 2v3.5z" fill="#000"/><rect x="65" y="510" width="3" height="3" rx="1" fill="#c0c0c0"/><rect x="62.5" y="513.5" width="8" height="6" fill="url(#dith)" stroke="#000"/><rect x="66" y="515" width="1" height="2" fill="#000"/><text x="77" y="517" font-size="11" fill="#000" letter-spacing="-0.15">SR_EMG_STOP (SBR60)</text><rect x="230" y="105" width="16" height="418" fill="#f0f0f0" /><rect x="230" y="122" width="15" height="322" fill="#cdcdcd" /><path d="M234.5 116.5l3.5-4.5l3.5 4.5" fill="none" stroke="#606060" stroke-width="2"/><path d="M234.5 513l3.5 4.5l3.5-4.5" fill="none" stroke="#606060" stroke-width="2"/><rect x="0" y="524" width="246" height="1" fill="#838a96" /><rect x="0" y="525" width="246" height="4" fill="#ffffff" /><rect x="0" y="526" width="246" height="2" fill="#f0f0f0" /><rect x="0" y="529" width="246" height="3" fill="#d2daea" /><rect x="0" y="532" width="246" height="1" fill="#909090" /><rect x="0" y="533" width="246" height="1" fill="#5a5a5a" /><rect x="0" y="535" width="246" height="1" fill="#f8f8f8" /><rect x="0" y="536" width="246" height="1" fill="#838a96" /><rect x="3.5" y="542.5" width="8" height="8" rx="1" fill="#f4f4f4" stroke="#9a9a9a"/><rect x="5" y="546" width="5" height="1" fill="#3050a0" /><rect x="13" y="546" width="1" height="1" fill="#a0a0a0" /><rect x="15" y="546" width="1" height="1" fill="#a0a0a0" /><rect x="17" y="546" width="1" height="1" fill="#a0a0a0" /><path d="M20.5 543.5v-2l1-1h5l1 1v1h6v10h-13z" fill="url(#dith)" stroke="#8a8a8a"/><rect x="33" y="543" width="1.5" height="11" fill="#000"/><rect x="21" y="553" width="13.5" height="1.5" fill="#000"/><rect x="22.5" y="545.5" width="8" height="6" fill="#fff" stroke="#000080" stroke-width="1.5"/><rect x="24" y="547" width="4" height="3" fill="#c0c0c0"/><rect x="20" y="546" width="2" height="1" fill="#000080"/><rect x="20" y="550" width="2" height="1" fill="#000080"/><rect x="31" y="546" width="2" height="1" fill="#000080"/><rect x="31" y="550" width="2" height="1" fill="#000080"/><path d="M41 539h1v1h-1zM44 539h1v1h-1zM57 539h1v1h-1zM41 540h1v1h-1zM44 540h1v1h-1zM46 540h3v1h-3zM56 540h2v1h-2zM40 541h6v1h-6zM55 541h1v1h-1zM58 541h1v1h-1zM41 542h1v1h-1zM44 542h1v1h-1zM49 542h1v1h-1zM53 542h2v1h-2zM56 542h1v1h-1zM59 542h2v1h-2zM41 543h1v1h-1zM44 543h6v1h-6zM52 543h2v1h-2zM57 543h1v1h-1zM61 543h2v1h-2zM41 544h1v1h-1zM57 544h1v1h-1zM41 545h9v1h-9zM53 545h8v1h-8zM40 546h2v1h-2zM44 546h1v1h-1zM49 546h1v1h-1zM59 546h1v1h-1zM41 547h1v1h-1zM44 547h6v1h-6zM55 547h1v1h-1zM58 547h1v1h-1zM41 548h1v1h-1zM44 548h1v1h-1zM49 548h1v1h-1zM55 548h3v1h-3zM41 549h1v1h-1zM44 549h6v1h-6zM57 549h1v1h-1zM40 550h2v1h-2zM44 550h1v1h-1zM49 550h1v1h-1zM58 550h1v1h-1z" fill="#000"/><rect x="26" y="555" width="1" height="1" fill="#a0a0a0" /><rect x="26" y="557" width="1" height="1" fill="#a0a0a0" /><rect x="26" y="559" width="1" height="1" fill="#a0a0a0" /><rect x="26" y="561" width="1" height="1" fill="#a0a0a0" /><rect x="26" y="563" width="1" height="1" fill="#a0a0a0" /><rect x="26" y="565" width="1" height="1" fill="#a0a0a0" /><rect x="26" y="567" width="1" height="1" fill="#a0a0a0" /><rect x="26" y="569" width="1" height="1" fill="#a0a0a0" /><rect x="26" y="571" width="1" height="1" fill="#a0a0a0" /><rect x="26" y="573" width="1" height="1" fill="#a0a0a0" /><rect x="26" y="575" width="1" height="1" fill="#a0a0a0" /><rect x="26" y="577" width="1" height="1" fill="#a0a0a0" /><rect x="26" y="579" width="1" height="1" fill="#a0a0a0" /><rect x="26" y="581" width="1" height="1" fill="#a0a0a0" /><rect x="26" y="583" width="1" height="1" fill="#a0a0a0" /><rect x="26" y="585" width="1" height="1" fill="#a0a0a0" /><rect x="26" y="587" width="1" height="1" fill="#a0a0a0" /><rect x="26" y="589" width="1" height="1" fill="#a0a0a0" /><rect x="26" y="591" width="1" height="1" fill="#a0a0a0" /><rect x="26" y="593" width="1" height="1" fill="#a0a0a0" /><rect x="26" y="595" width="1" height="1" fill="#a0a0a0" /><rect x="26" y="597" width="1" height="1" fill="#a0a0a0" /><rect x="26" y="599" width="1" height="1" fill="#a0a0a0" /><rect x="26" y="601" width="1" height="1" fill="#a0a0a0" /><rect x="26" y="603" width="1" height="1" fill="#a0a0a0" /><rect x="26" y="605" width="1" height="1" fill="#a0a0a0" /><rect x="26" y="607" width="1" height="1" fill="#a0a0a0" /><rect x="26" y="609" width="1" height="1" fill="#a0a0a0" /><rect x="26" y="611" width="1" height="1" fill="#a0a0a0" /><rect x="26" y="613" width="1" height="1" fill="#a0a0a0" /><rect x="26" y="615" width="1" height="1" fill="#a0a0a0" /><rect x="26" y="617" width="1" height="1" fill="#a0a0a0" /><rect x="26" y="619" width="1" height="1" fill="#a0a0a0" /><rect x="26" y="621" width="1" height="1" fill="#a0a0a0" /><rect x="26" y="623" width="1" height="1" fill="#a0a0a0" /><rect x="26" y="625" width="1" height="1" fill="#a0a0a0" /><rect x="26" y="627" width="1" height="1" fill="#a0a0a0" /><rect x="26" y="629" width="1" height="1" fill="#a0a0a0" /><rect x="26" y="631" width="1" height="1" fill="#a0a0a0" /><rect x="26" y="633" width="1" height="1" fill="#a0a0a0" /><rect x="26" y="635" width="1" height="1" fill="#a0a0a0" /><rect x="26" y="637" width="1" height="1" fill="#a0a0a0" /><rect x="26" y="639" width="1" height="1" fill="#a0a0a0" /><rect x="26" y="641" width="1" height="1" fill="#a0a0a0" /><rect x="26" y="643" width="1" height="1" fill="#a0a0a0" /><rect x="26" y="645" width="1" height="1" fill="#a0a0a0" /><rect x="26" y="647" width="1" height="1" fill="#a0a0a0" /><rect x="26" y="649" width="1" height="1" fill="#a0a0a0" /><rect x="26" y="651" width="1" height="1" fill="#a0a0a0" /><rect x="26" y="653" width="1" height="1" fill="#a0a0a0" /><rect x="26" y="655" width="1" height="1" fill="#a0a0a0" /><rect x="26" y="657" width="1" height="1" fill="#a0a0a0" /><rect x="26" y="659" width="1" height="1" fill="#a0a0a0" /><rect x="26" y="661" width="1" height="1" fill="#a0a0a0" /><rect x="26" y="663" width="1" height="1" fill="#a0a0a0" /><rect x="26" y="665" width="1" height="1" fill="#a0a0a0" /><rect x="26" y="667" width="1" height="1" fill="#a0a0a0" /><rect x="26" y="669" width="1" height="1" fill="#a0a0a0" /><rect x="26" y="671" width="1" height="1" fill="#a0a0a0" /><rect x="26" y="673" width="1" height="1" fill="#a0a0a0" /><rect x="26" y="675" width="1" height="1" fill="#a0a0a0" /><rect x="26" y="677" width="1" height="1" fill="#a0a0a0" /><rect x="26" y="679" width="1" height="1" fill="#a0a0a0" /><rect x="26" y="681" width="1" height="1" fill="#a0a0a0" /><rect x="26" y="683" width="1" height="1" fill="#a0a0a0" /><rect x="26" y="685" width="1" height="1" fill="#a0a0a0" /><rect x="26" y="687" width="1" height="1" fill="#a0a0a0" /><rect x="26" y="689" width="1" height="1" fill="#a0a0a0" /><rect x="26" y="691" width="1" height="1" fill="#a0a0a0" /><rect x="26" y="693" width="1" height="1" fill="#a0a0a0" /><rect x="26" y="695" width="1" height="1" fill="#a0a0a0" /><rect x="26" y="697" width="1" height="1" fill="#a0a0a0" /><rect x="26" y="699" width="1" height="1" fill="#a0a0a0" /><rect x="26" y="701" width="1" height="1" fill="#a0a0a0" /><rect x="26" y="703" width="1" height="1" fill="#a0a0a0" /><rect x="26" y="705" width="1" height="1" fill="#a0a0a0" /><rect x="26" y="707" width="1" height="1" fill="#a0a0a0" /><rect x="26" y="709" width="1" height="1" fill="#a0a0a0" /><rect x="26" y="711" width="1" height="1" fill="#a0a0a0" /><rect x="26" y="713" width="1" height="1" fill="#a0a0a0" /><rect x="26" y="715" width="1" height="1" fill="#a0a0a0" /><rect x="26" y="717" width="1" height="1" fill="#a0a0a0" /><rect x="26" y="719" width="1" height="1" fill="#a0a0a0" /><rect x="26" y="721" width="1" height="1" fill="#a0a0a0" /><rect x="26" y="723" width="1" height="1" fill="#a0a0a0" /><rect x="26" y="725" width="1" height="1" fill="#a0a0a0" /><rect x="26" y="727" width="1" height="1" fill="#a0a0a0" /><rect x="26" y="729" width="1" height="1" fill="#a0a0a0" /><rect x="26" y="731" width="1" height="1" fill="#a0a0a0" /><rect x="26" y="733" width="1" height="1" fill="#a0a0a0" /><rect x="26" y="735" width="1" height="1" fill="#a0a0a0" /><rect x="26" y="737" width="1" height="1" fill="#a0a0a0" /><rect x="26" y="739" width="1" height="1" fill="#a0a0a0" /><rect x="26" y="741" width="1" height="1" fill="#a0a0a0" /><rect x="26" y="743" width="1" height="1" fill="#a0a0a0" /><rect x="26" y="745" width="1" height="1" fill="#a0a0a0" /><rect x="26" y="747" width="1" height="1" fill="#a0a0a0" /><rect x="26" y="749" width="1" height="1" fill="#a0a0a0" /><rect x="26" y="751" width="1" height="1" fill="#a0a0a0" /><rect x="26" y="753" width="1" height="1" fill="#a0a0a0" /><rect x="22.5" y="558.5" width="8" height="8" rx="1" fill="#f4f4f4" stroke="#9a9a9a"/><rect x="24" y="562" width="5" height="1" fill="#3050a0" /><rect x="26" y="560" width="1" height="5" fill="#3050a0" /><rect x="32" y="562" width="1" height="1" fill="#a0a0a0" /><rect x="34" y="562" width="1" height="1" fill="#a0a0a0" /><rect x="36" y="562" width="1" height="1" fill="#a0a0a0" /><path d="M39.5 559.5v-2l1-1h5l1 1v1h6v10h-13z" fill="url(#dith)" stroke="#8a8a8a"/><rect x="52" y="559" width="1.5" height="11" fill="#000"/><rect x="40" y="569" width="13.5" height="1.5" fill="#000"/><g transform="translate(0,562)"><path d="M48.5 -3.5l-4 3.5l4 3.5" fill="none" stroke="#000" stroke-width="1.3"/></g><path d="M63 555h1v1h-1zM71 555h1v1h-1zM76 555h1v1h-1zM58 556h1v1h-1zM63 556h1v1h-1zM71 556h1v1h-1zM77 556h1v1h-1zM58 557h1v1h-1zM63 557h1v1h-1zM70 557h10v1h-10zM58 558h1v1h-1zM63 558h1v1h-1zM66 558h2v1h-2zM71 558h1v1h-1zM76 558h1v1h-1zM78 558h1v1h-1zM59 559h3v1h-3zM63 559h1v1h-1zM65 559h2v1h-2zM70 559h1v1h-1zM72 559h1v1h-1zM75 559h1v1h-1zM79 559h1v1h-1zM58 560h1v1h-1zM63 560h2v1h-2zM70 560h6v1h-6zM78 560h1v1h-1zM80 560h1v1h-1zM58 561h1v1h-1zM63 561h1v1h-1zM72 561h1v1h-1zM76 561h1v1h-1zM78 561h1v1h-1zM58 562h1v1h-1zM63 562h1v1h-1zM72 562h1v1h-1zM76 562h2v1h-2zM58 563h1v1h-1zM63 563h1v1h-1zM67 563h1v1h-1zM69 563h5v1h-5zM77 563h1v1h-1zM58 564h1v1h-1zM63 564h1v1h-1zM67 564h1v1h-1zM72 564h1v1h-1zM76 564h2v1h-2zM58 565h1v1h-1zM60 565h2v1h-2zM63 565h1v1h-1zM67 565h1v1h-1zM72 565h1v1h-1zM75 565h1v1h-1zM78 565h2v1h-2zM58 566h2v1h-2zM64 566h4v1h-4zM72 566h1v1h-1zM74 566h1v1h-1zM79 566h1v1h-1z" fill="#000"/><rect x="22.5" y="574.5" width="8" height="8" rx="1" fill="#f4f4f4" stroke="#9a9a9a"/><rect x="24" y="578" width="5" height="1" fill="#3050a0" /><rect x="26" y="576" width="1" height="5" fill="#3050a0" /><rect x="32" y="578" width="1" height="1" fill="#a0a0a0" /><rect x="34" y="578" width="1" height="1" fill="#a0a0a0" /><rect x="36" y="578" width="1" height="1" fill="#a0a0a0" /><path d="M39.5 575.5v-2l1-1h5l1 1v1h6v10h-13z" fill="url(#dith)" stroke="#8a8a8a"/><rect x="52" y="575" width="1.5" height="11" fill="#000"/><rect x="40" y="585" width="13.5" height="1.5" fill="#000"/><g transform="translate(0,578)"><path d="M41 -2h3v4M47 4v-5h3" fill="none" stroke="#000" stroke-width="1.3"/><path d="M42.5 2h3l-1.5 2z" fill="#000"/></g><path d="M59 571h3v1h-3zM63 571h5v1h-5zM75 571h1v1h-1zM83 571h1v1h-1zM88 571h1v1h-1zM96 571h1v1h-1zM103 571h1v1h-1zM58 572h1v1h-1zM60 572h1v1h-1zM62 572h1v1h-1zM67 572h1v1h-1zM70 572h10v1h-10zM83 572h1v1h-1zM88 572h1v1h-1zM94 572h1v1h-1zM96 572h1v1h-1zM101 572h1v1h-1zM103 572h1v1h-1zM59 573h1v1h-1zM62 573h1v1h-1zM67 573h1v1h-1zM70 573h1v1h-1zM83 573h1v1h-1zM85 573h7v1h-7zM94 573h6v1h-6zM101 573h1v1h-1zM103 573h1v1h-1zM59 574h1v1h-1zM62 574h1v1h-1zM67 574h1v1h-1zM70 574h1v1h-1zM72 574h7v1h-7zM82 574h4v1h-4zM94 574h1v1h-1zM96 574h1v1h-1zM101 574h1v1h-1zM103 574h1v1h-1zM58 575h4v1h-4zM63 575h5v1h-5zM70 575h1v1h-1zM77 575h2v1h-2zM83 575h1v1h-1zM87 575h1v1h-1zM90 575h1v1h-1zM94 575h6v1h-6zM101 575h1v1h-1zM103 575h1v1h-1zM59 576h1v1h-1zM70 576h1v1h-1zM74 576h3v1h-3zM83 576h1v1h-1zM86 576h1v1h-1zM91 576h1v1h-1zM96 576h1v1h-1zM101 576h1v1h-1zM103 576h1v1h-1zM58 577h1v1h-1zM60 577h1v1h-1zM62 577h6v1h-6zM70 577h1v1h-1zM72 577h8v1h-8zM82 577h3v1h-3zM86 577h6v1h-6zM94 577h6v1h-6zM101 577h1v1h-1zM103 577h1v1h-1zM58 578h2v1h-2zM61 578h1v1h-1zM65 578h1v1h-1zM70 578h1v1h-1zM75 578h1v1h-1zM79 578h1v1h-1zM83 578h1v1h-1zM88 578h1v1h-1zM94 578h1v1h-1zM96 578h1v1h-1zM99 578h1v1h-1zM101 578h1v1h-1zM103 578h1v1h-1zM57 579h3v1h-3zM62 579h6v1h-6zM70 579h1v1h-1zM75 579h1v1h-1zM78 579h1v1h-1zM83 579h1v1h-1zM88 579h1v1h-1zM94 579h1v1h-1zM96 579h1v1h-1zM99 579h1v1h-1zM103 579h1v1h-1zM59 580h1v1h-1zM65 580h1v1h-1zM70 580h1v1h-1zM75 580h1v1h-1zM83 580h1v1h-1zM88 580h1v1h-1zM94 580h1v1h-1zM96 580h1v1h-1zM99 580h1v1h-1zM103 580h1v1h-1zM59 581h1v1h-1zM65 581h1v1h-1zM70 581h1v1h-1zM75 581h1v1h-1zM83 581h1v1h-1zM88 581h1v1h-1zM94 581h1v1h-1zM96 581h1v1h-1zM98 581h2v1h-2zM103 581h1v1h-1zM59 582h1v1h-1zM62 582h8v1h-8zM73 582h3v1h-3zM82 582h2v1h-2zM85 582h8v1h-8zM96 582h1v1h-1zM102 582h2v1h-2z" fill="#000"/><rect x="22.5" y="590.5" width="8" height="8" rx="1" fill="#f4f4f4" stroke="#9a9a9a"/><rect x="24" y="594" width="5" height="1" fill="#3050a0" /><rect x="26" y="592" width="1" height="5" fill="#3050a0" /><rect x="32" y="594" width="1" height="1" fill="#a0a0a0" /><rect x="34" y="594" width="1" height="1" fill="#a0a0a0" /><rect x="36" y="594" width="1" height="1" fill="#a0a0a0" /><path d="M39.5 591.5v-2l1-1h5l1 1v1h6v10h-13z" fill="url(#dith)" stroke="#8a8a8a"/><rect x="52" y="591" width="1.5" height="11" fill="#000"/><rect x="40" y="601" width="13.5" height="1.5" fill="#000"/><g transform="translate(0,594)"><text x="41" y="4" font-size="8" font-weight="bold">±R</text></g><path d="M58 587h1v1h-1zM65 587h3v1h-3zM74 587h1v1h-1zM82 587h1v1h-1zM84 587h1v1h-1zM86 587h1v1h-1zM88 587h1v1h-1zM94 587h1v1h-1zM96 587h1v1h-1zM98 587h1v1h-1zM100 587h1v1h-1zM107 587h1v1h-1zM110 587h1v1h-1zM114 587h1v1h-1zM119 587h1v1h-1zM124 587h1v1h-1zM131 587h1v1h-1zM136 587h1v1h-1zM59 588h6v1h-6zM74 588h6v1h-6zM82 588h1v1h-1zM84 588h2v1h-2zM88 588h1v1h-1zM94 588h1v1h-1zM96 588h2v1h-2zM100 588h1v1h-1zM108 588h1v1h-1zM111 588h1v1h-1zM114 588h1v1h-1zM119 588h2v1h-2zM124 588h1v1h-1zM130 588h10v1h-10zM61 589h1v1h-1zM64 589h1v1h-1zM66 589h1v1h-1zM74 589h1v1h-1zM82 589h5v1h-5zM88 589h4v1h-4zM94 589h5v1h-5zM100 589h4v1h-4zM106 589h10v1h-10zM120 589h1v1h-1zM124 589h1v1h-1zM130 589h1v1h-1zM132 589h1v1h-1zM134 589h1v1h-1zM137 589h1v1h-1zM62 590h1v1h-1zM64 590h1v1h-1zM66 590h1v1h-1zM74 590h1v1h-1zM83 590h3v1h-3zM88 590h1v1h-1zM90 590h1v1h-1zM95 590h3v1h-3zM100 590h1v1h-1zM102 590h1v1h-1zM106 590h1v1h-1zM115 590h1v1h-1zM124 590h1v1h-1zM131 590h8v1h-8zM58 591h2v1h-2zM61 591h6v1h-6zM71 591h8v1h-8zM83 591h2v1h-2zM86 591h1v1h-1zM88 591h1v1h-1zM90 591h1v1h-1zM95 591h2v1h-2zM98 591h1v1h-1zM100 591h1v1h-1zM102 591h1v1h-1zM106 591h1v1h-1zM108 591h6v1h-6zM118 591h2v1h-2zM121 591h8v1h-8zM131 591h8v1h-8zM65 592h2v1h-2zM71 592h1v1h-1zM78 592h1v1h-1zM82 592h1v1h-1zM84 592h1v1h-1zM87 592h2v1h-2zM90 592h1v1h-1zM94 592h1v1h-1zM96 592h1v1h-1zM99 592h2v1h-2zM102 592h1v1h-1zM112 592h2v1h-2zM119 592h1v1h-1zM124 592h1v1h-1zM131 592h1v1h-1zM138 592h1v1h-1zM65 593h1v1h-1zM71 593h1v1h-1zM78 593h1v1h-1zM84 593h1v1h-1zM87 593h2v1h-2zM90 593h1v1h-1zM96 593h1v1h-1zM99 593h2v1h-2zM102 593h1v1h-1zM111 593h1v1h-1zM119 593h1v1h-1zM124 593h1v1h-1zM131 593h8v1h-8zM64 594h1v1h-1zM71 594h8v1h-8zM82 594h5v1h-5zM89 594h2v1h-2zM94 594h5v1h-5zM101 594h2v1h-2zM106 594h10v1h-10zM119 594h1v1h-1zM124 594h1v1h-1zM131 594h8v1h-8zM59 595h1v1h-1zM61 595h7v1h-7zM83 595h1v1h-1zM85 595h1v1h-1zM89 595h1v1h-1zM95 595h1v1h-1zM97 595h1v1h-1zM101 595h1v1h-1zM110 595h1v1h-1zM119 595h1v1h-1zM124 595h1v1h-1zM133 595h1v1h-1zM137 595h1v1h-1zM59 596h1v1h-1zM64 596h1v1h-1zM71 596h1v1h-1zM73 596h1v1h-1zM76 596h1v1h-1zM78 596h1v1h-1zM83 596h3v1h-3zM89 596h2v1h-2zM95 596h3v1h-3zM101 596h2v1h-2zM110 596h1v1h-1zM119 596h1v1h-1zM121 596h1v1h-1zM124 596h1v1h-1zM130 596h10v1h-10zM58 597h1v1h-1zM64 597h1v1h-1zM70 597h1v1h-1zM73 597h1v1h-1zM76 597h1v1h-1zM79 597h1v1h-1zM83 597h3v1h-3zM88 597h1v1h-1zM91 597h1v1h-1zM95 597h3v1h-3zM100 597h1v1h-1zM103 597h1v1h-1zM110 597h1v1h-1zM119 597h2v1h-2zM124 597h1v1h-1zM132 597h1v1h-1zM137 597h1v1h-1zM58 598h1v1h-1zM63 598h2v1h-2zM70 598h1v1h-1zM73 598h1v1h-1zM76 598h1v1h-1zM79 598h1v1h-1zM82 598h1v1h-1zM87 598h1v1h-1zM91 598h1v1h-1zM94 598h1v1h-1zM99 598h1v1h-1zM103 598h1v1h-1zM108 598h3v1h-3zM119 598h1v1h-1zM124 598h1v1h-1zM130 598h2v1h-2zM137 598h1v1h-1z" fill="#000"/><rect x="22.5" y="606.5" width="8" height="8" rx="1" fill="#f4f4f4" stroke="#9a9a9a"/><rect x="24" y="610" width="5" height="1" fill="#3050a0" /><rect x="26" y="608" width="1" height="5" fill="#3050a0" /><rect x="32" y="610" width="1" height="1" fill="#a0a0a0" /><rect x="34" y="610" width="1" height="1" fill="#a0a0a0" /><rect x="36" y="610" width="1" height="1" fill="#a0a0a0" /><path d="M39.5 607.5v-2l1-1h5l1 1v1h6v10h-13z" fill="url(#dith)" stroke="#8a8a8a"/><rect x="52" y="607" width="1.5" height="11" fill="#000"/><rect x="40" y="617" width="13.5" height="1.5" fill="#000"/><g transform="translate(0,610)"><circle cx="46" cy="0.5" r="3.5" fill="#fff" stroke="#000"/><path d="M46 0v-2M46 0l2 2" stroke="#c00000"/></g><path d="M59 604h1v1h-1zM64 604h1v1h-1zM78 604h1v1h-1zM59 605h2v1h-2zM64 605h1v1h-1zM70 605h4v1h-4zM78 605h1v1h-1zM83 605h3v1h-3zM88 605h3v1h-3zM60 606h1v1h-1zM64 606h1v1h-1zM70 606h1v1h-1zM73 606h1v1h-1zM78 606h1v1h-1zM82 606h1v1h-1zM85 606h1v1h-1zM87 606h1v1h-1zM90 606h1v1h-1zM64 607h1v1h-1zM70 607h1v1h-1zM73 607h8v1h-8zM83 607h3v1h-3zM88 607h3v1h-3zM58 608h2v1h-2zM61 608h8v1h-8zM70 608h1v1h-1zM73 608h1v1h-1zM78 608h1v1h-1zM86 608h1v1h-1zM88 608h2v1h-2zM59 609h1v1h-1zM64 609h1v1h-1zM70 609h4v1h-4zM75 609h1v1h-1zM78 609h1v1h-1zM82 609h10v1h-10zM59 610h1v1h-1zM64 610h1v1h-1zM70 610h1v1h-1zM73 610h1v1h-1zM75 610h1v1h-1zM78 610h1v1h-1zM84 610h1v1h-1zM88 610h2v1h-2zM59 611h1v1h-1zM64 611h1v1h-1zM70 611h1v1h-1zM73 611h1v1h-1zM76 611h1v1h-1zM78 611h1v1h-1zM83 611h1v1h-1zM89 611h2v1h-2zM59 612h1v1h-1zM64 612h1v1h-1zM70 612h1v1h-1zM73 612h1v1h-1zM78 612h1v1h-1zM82 612h4v1h-4zM88 612h4v1h-4zM59 613h1v1h-1zM61 613h1v1h-1zM64 613h1v1h-1zM70 613h4v1h-4zM78 613h1v1h-1zM82 613h1v1h-1zM85 613h1v1h-1zM87 613h1v1h-1zM90 613h1v1h-1zM59 614h2v1h-2zM64 614h1v1h-1zM70 614h1v1h-1zM78 614h1v1h-1zM82 614h1v1h-1zM85 614h1v1h-1zM87 614h1v1h-1zM90 614h1v1h-1zM59 615h1v1h-1zM64 615h1v1h-1zM76 615h3v1h-3zM83 615h3v1h-3zM88 615h3v1h-3z" fill="#000"/><rect x="22.5" y="622.5" width="8" height="8" rx="1" fill="#f4f4f4" stroke="#9a9a9a"/><rect x="24" y="626" width="5" height="1" fill="#3050a0" /><rect x="26" y="624" width="1" height="5" fill="#3050a0" /><rect x="32" y="626" width="1" height="1" fill="#a0a0a0" /><rect x="34" y="626" width="1" height="1" fill="#a0a0a0" /><rect x="36" y="626" width="1" height="1" fill="#a0a0a0" /><path d="M39.5 623.5v-2l1-1h5l1 1v1h6v10h-13z" fill="url(#dith)" stroke="#8a8a8a"/><rect x="52" y="623" width="1.5" height="11" fill="#000"/><rect x="40" y="633" width="13.5" height="1.5" fill="#000"/><g transform="translate(0,626)"><text x="40.5" y="4" font-size="8" font-weight="bold">+1</text></g><path d="M59 619h1v1h-1zM64 619h1v1h-1zM70 619h1v1h-1zM72 619h1v1h-1zM74 619h1v1h-1zM76 619h1v1h-1zM59 620h2v1h-2zM64 620h1v1h-1zM70 620h1v1h-1zM72 620h2v1h-2zM76 620h1v1h-1zM83 620h3v1h-3zM88 620h3v1h-3zM60 621h1v1h-1zM64 621h1v1h-1zM70 621h5v1h-5zM76 621h4v1h-4zM82 621h1v1h-1zM85 621h1v1h-1zM87 621h1v1h-1zM90 621h1v1h-1zM64 622h1v1h-1zM71 622h3v1h-3zM76 622h1v1h-1zM78 622h1v1h-1zM83 622h3v1h-3zM88 622h3v1h-3zM58 623h2v1h-2zM61 623h8v1h-8zM71 623h2v1h-2zM74 623h1v1h-1zM76 623h1v1h-1zM78 623h1v1h-1zM86 623h1v1h-1zM88 623h2v1h-2zM59 624h1v1h-1zM64 624h1v1h-1zM70 624h1v1h-1zM72 624h1v1h-1zM75 624h2v1h-2zM78 624h1v1h-1zM82 624h10v1h-10zM59 625h1v1h-1zM64 625h1v1h-1zM72 625h1v1h-1zM75 625h2v1h-2zM78 625h1v1h-1zM84 625h1v1h-1zM88 625h2v1h-2zM59 626h1v1h-1zM64 626h1v1h-1zM70 626h5v1h-5zM77 626h2v1h-2zM83 626h1v1h-1zM89 626h2v1h-2zM59 627h1v1h-1zM64 627h1v1h-1zM71 627h1v1h-1zM73 627h1v1h-1zM77 627h1v1h-1zM82 627h4v1h-4zM88 627h4v1h-4zM59 628h1v1h-1zM61 628h1v1h-1zM64 628h1v1h-1zM71 628h3v1h-3zM77 628h2v1h-2zM82 628h1v1h-1zM85 628h1v1h-1zM87 628h1v1h-1zM90 628h1v1h-1zM59 629h2v1h-2zM64 629h1v1h-1zM71 629h3v1h-3zM76 629h1v1h-1zM79 629h1v1h-1zM82 629h1v1h-1zM85 629h1v1h-1zM87 629h1v1h-1zM90 629h1v1h-1zM59 630h1v1h-1zM64 630h1v1h-1zM70 630h1v1h-1zM75 630h1v1h-1zM79 630h1v1h-1zM83 630h3v1h-3zM88 630h3v1h-3z" fill="#000"/><rect x="22.5" y="638.5" width="8" height="8" rx="1" fill="#f4f4f4" stroke="#9a9a9a"/><rect x="24" y="642" width="5" height="1" fill="#3050a0" /><rect x="26" y="640" width="1" height="5" fill="#3050a0" /><rect x="32" y="642" width="1" height="1" fill="#a0a0a0" /><rect x="34" y="642" width="1" height="1" fill="#a0a0a0" /><rect x="36" y="642" width="1" height="1" fill="#a0a0a0" /><path d="M39.5 639.5v-2l1-1h5l1 1v1h6v10h-13z" fill="url(#dith)" stroke="#8a8a8a"/><rect x="52" y="639" width="1.5" height="11" fill="#000"/><rect x="40" y="649" width="13.5" height="1.5" fill="#000"/><g transform="translate(0,642)"><path d="M40 0.5h3M43.5 -3v7M47.5 -3v7M49.5 -3v7" stroke="#000" stroke-width="1.2"/></g><path d="M58 635h1v1h-1zM61 635h7v1h-7zM71 635h1v1h-1zM75 635h5v1h-5zM83 635h1v1h-1zM87 635h4v1h-4zM96 635h1v1h-1zM99 635h1v1h-1zM59 636h1v1h-1zM61 636h1v1h-1zM63 636h1v1h-1zM65 636h1v1h-1zM67 636h1v1h-1zM71 636h1v1h-1zM75 636h1v1h-1zM79 636h1v1h-1zM83 636h1v1h-1zM86 636h1v1h-1zM90 636h1v1h-1zM96 636h1v1h-1zM99 636h1v1h-1zM59 637h1v1h-1zM61 637h1v1h-1zM63 637h1v1h-1zM65 637h1v1h-1zM67 637h1v1h-1zM70 637h4v1h-4zM75 637h5v1h-5zM82 637h3v1h-3zM87 637h4v1h-4zM95 637h1v1h-1zM98 637h7v1h-7zM61 638h7v1h-7zM71 638h2v1h-2zM83 638h1v1h-1zM95 638h1v1h-1zM98 638h1v1h-1zM100 638h1v1h-1zM58 639h2v1h-2zM63 639h1v1h-1zM70 639h1v1h-1zM72 639h1v1h-1zM74 639h6v1h-6zM83 639h1v1h-1zM85 639h3v1h-3zM89 639h3v1h-3zM94 639h2v1h-2zM97 639h1v1h-1zM100 639h1v1h-1zM59 640h1v1h-1zM62 640h6v1h-6zM70 640h4v1h-4zM75 640h1v1h-1zM79 640h1v1h-1zM83 640h1v1h-1zM85 640h1v1h-1zM87 640h1v1h-1zM89 640h1v1h-1zM91 640h1v1h-1zM94 640h2v1h-2zM97 640h1v1h-1zM100 640h4v1h-4zM59 641h1v1h-1zM61 641h2v1h-2zM66 641h1v1h-1zM72 641h1v1h-1zM75 641h5v1h-5zM83 641h5v1h-5zM89 641h3v1h-3zM95 641h1v1h-1zM100 641h1v1h-1zM59 642h1v1h-1zM63 642h3v1h-3zM72 642h1v1h-1zM75 642h1v1h-1zM79 642h1v1h-1zM82 642h2v1h-2zM88 642h1v1h-1zM95 642h1v1h-1zM100 642h1v1h-1zM59 643h1v1h-1zM64 643h1v1h-1zM69 643h5v1h-5zM75 643h5v1h-5zM83 643h1v1h-1zM85 643h7v1h-7zM95 643h1v1h-1zM100 643h4v1h-4zM59 644h1v1h-1zM62 644h2v1h-2zM72 644h1v1h-1zM75 644h1v1h-1zM79 644h2v1h-2zM83 644h1v1h-1zM87 644h3v1h-3zM95 644h1v1h-1zM100 644h1v1h-1zM58 645h1v1h-1zM60 645h1v1h-1zM72 645h1v1h-1zM74 645h6v1h-6zM83 645h1v1h-1zM85 645h2v1h-2zM88 645h1v1h-1zM90 645h2v1h-2zM95 645h1v1h-1zM100 645h1v1h-1zM57 646h1v1h-1zM61 646h7v1h-7zM72 646h1v1h-1zM79 646h1v1h-1zM82 646h2v1h-2zM88 646h1v1h-1zM95 646h1v1h-1zM100 646h1v1h-1z" fill="#000"/><rect x="22.5" y="654.5" width="8" height="8" rx="1" fill="#f4f4f4" stroke="#9a9a9a"/><rect x="24" y="658" width="5" height="1" fill="#3050a0" /><rect x="26" y="656" width="1" height="5" fill="#3050a0" /><rect x="32" y="658" width="1" height="1" fill="#a0a0a0" /><rect x="34" y="658" width="1" height="1" fill="#a0a0a0" /><rect x="36" y="658" width="1" height="1" fill="#a0a0a0" /><path d="M39.5 655.5v-2l1-1h5l1 1v1h6v10h-13z" fill="url(#dith)" stroke="#8a8a8a"/><rect x="52" y="655" width="1.5" height="11" fill="#000"/><rect x="40" y="665" width="13.5" height="1.5" fill="#000"/><g transform="translate(0,658)"><path d="M40 0.5h3M43.5 -3v7M47.5 -3v7M49.5 -3v7" stroke="#000" stroke-width="1.2"/></g><path d="M60 651h1v1h-1zM64 651h1v1h-1zM70 651h1v1h-1zM73 651h7v1h-7zM83 651h1v1h-1zM87 651h5v1h-5zM60 652h1v1h-1zM64 652h1v1h-1zM71 652h1v1h-1zM73 652h1v1h-1zM75 652h1v1h-1zM77 652h1v1h-1zM79 652h1v1h-1zM83 652h1v1h-1zM87 652h1v1h-1zM91 652h1v1h-1zM59 653h1v1h-1zM61 653h7v1h-7zM71 653h1v1h-1zM73 653h1v1h-1zM75 653h1v1h-1zM77 653h1v1h-1zM79 653h1v1h-1zM82 653h4v1h-4zM87 653h5v1h-5zM59 654h1v1h-1zM73 654h7v1h-7zM83 654h2v1h-2zM58 655h2v1h-2zM62 655h1v1h-1zM66 655h1v1h-1zM70 655h2v1h-2zM75 655h1v1h-1zM82 655h1v1h-1zM84 655h1v1h-1zM86 655h6v1h-6zM59 656h1v1h-1zM62 656h1v1h-1zM66 656h1v1h-1zM71 656h1v1h-1zM74 656h6v1h-6zM82 656h4v1h-4zM87 656h1v1h-1zM91 656h1v1h-1zM59 657h1v1h-1zM63 657h1v1h-1zM66 657h1v1h-1zM71 657h1v1h-1zM73 657h2v1h-2zM78 657h1v1h-1zM84 657h1v1h-1zM87 657h5v1h-5zM59 658h1v1h-1zM63 658h1v1h-1zM66 658h1v1h-1zM71 658h1v1h-1zM75 658h3v1h-3zM84 658h1v1h-1zM87 658h1v1h-1zM91 658h1v1h-1zM59 659h1v1h-1zM63 659h1v1h-1zM65 659h1v1h-1zM71 659h1v1h-1zM76 659h1v1h-1zM81 659h5v1h-5zM87 659h5v1h-5zM59 660h1v1h-1zM65 660h1v1h-1zM71 660h1v1h-1zM74 660h2v1h-2zM84 660h1v1h-1zM87 660h1v1h-1zM91 660h2v1h-2zM59 661h1v1h-1zM61 661h7v1h-7zM70 661h1v1h-1zM72 661h1v1h-1zM84 661h1v1h-1zM86 661h6v1h-6zM59 662h1v1h-1zM69 662h1v1h-1zM73 662h7v1h-7zM84 662h1v1h-1zM91 662h1v1h-1z" fill="#000"/><rect x="22.5" y="670.5" width="8" height="8" rx="1" fill="#f4f4f4" stroke="#9a9a9a"/><rect x="24" y="674" width="5" height="1" fill="#3050a0" /><rect x="26" y="672" width="1" height="5" fill="#3050a0" /><rect x="32" y="674" width="1" height="1" fill="#a0a0a0" /><rect x="34" y="674" width="1" height="1" fill="#a0a0a0" /><rect x="36" y="674" width="1" height="1" fill="#a0a0a0" /><path d="M39.5 671.5v-2l1-1h5l1 1v1h6v10h-13z" fill="url(#dith)" stroke="#8a8a8a"/><rect x="52" y="671" width="1.5" height="11" fill="#000"/><rect x="40" y="681" width="13.5" height="1.5" fill="#000"/><g transform="translate(0,674)"><path d="M41 2q2-5 4-2q2 3 5 0" fill="none" stroke="#000" stroke-width="1.2"/></g><path d="M60 667h1v1h-1zM64 667h1v1h-1zM72 667h1v1h-1zM76 667h1v1h-1zM58 668h2v1h-2zM63 668h5v1h-5zM72 668h1v1h-1zM76 668h1v1h-1zM59 669h1v1h-1zM62 669h2v1h-2zM66 669h1v1h-1zM71 669h1v1h-1zM73 669h7v1h-7zM59 670h1v1h-1zM63 670h2v1h-2zM66 670h1v1h-1zM71 670h1v1h-1zM58 671h4v1h-4zM64 671h2v1h-2zM70 671h2v1h-2zM74 671h1v1h-1zM78 671h1v1h-1zM59 672h2v1h-2zM62 672h2v1h-2zM65 672h1v1h-1zM71 672h1v1h-1zM74 672h1v1h-1zM78 672h1v1h-1zM59 673h2v1h-2zM64 673h4v1h-4zM71 673h1v1h-1zM75 673h1v1h-1zM78 673h1v1h-1zM58 674h2v1h-2zM63 674h1v1h-1zM67 674h1v1h-1zM71 674h1v1h-1zM75 674h1v1h-1zM78 674h1v1h-1zM57 675h1v1h-1zM59 675h1v1h-1zM62 675h1v1h-1zM64 675h1v1h-1zM66 675h1v1h-1zM71 675h1v1h-1zM75 675h1v1h-1zM77 675h1v1h-1zM59 676h1v1h-1zM65 676h2v1h-2zM71 676h1v1h-1zM77 676h1v1h-1zM59 677h1v1h-1zM64 677h1v1h-1zM71 677h1v1h-1zM73 677h7v1h-7zM59 678h1v1h-1zM62 678h2v1h-2zM71 678h1v1h-1z" fill="#000"/><rect x="22.5" y="686.5" width="8" height="8" rx="1" fill="#f4f4f4" stroke="#9a9a9a"/><rect x="24" y="690" width="5" height="1" fill="#3050a0" /><rect x="26" y="688" width="1" height="5" fill="#3050a0" /><rect x="32" y="690" width="1" height="1" fill="#a0a0a0" /><rect x="34" y="690" width="1" height="1" fill="#a0a0a0" /><rect x="36" y="690" width="1" height="1" fill="#a0a0a0" /><path d="M39.5 687.5v-2l1-1h5l1 1v1h6v10h-13z" fill="url(#dith)" stroke="#8a8a8a"/><rect x="52" y="687" width="1.5" height="11" fill="#000"/><rect x="40" y="697" width="13.5" height="1.5" fill="#000"/><g transform="translate(0,690)"><path d="M41 -1.5h9M41 2.5h9M43 -3.5l-2 2l2 2M48 0.5l2 2l-2 2" fill="none" stroke="#000"/></g><path d="M60 683h1v1h-1zM64 683h1v1h-1zM72 683h1v1h-1zM76 683h1v1h-1zM88 683h1v1h-1zM100 683h1v1h-1zM106 683h1v1h-1zM58 684h2v1h-2zM63 684h5v1h-5zM72 684h1v1h-1zM76 684h1v1h-1zM89 684h1v1h-1zM92 684h1v1h-1zM99 684h4v1h-4zM104 684h5v1h-5zM59 685h1v1h-1zM62 685h2v1h-2zM66 685h1v1h-1zM71 685h1v1h-1zM73 685h7v1h-7zM84 685h1v1h-1zM87 685h4v1h-4zM92 685h5v1h-5zM100 685h1v1h-1zM105 685h1v1h-1zM59 686h1v1h-1zM63 686h2v1h-2zM66 686h1v1h-1zM71 686h1v1h-1zM84 686h1v1h-1zM88 686h1v1h-1zM91 686h1v1h-1zM99 686h1v1h-1zM101 686h1v1h-1zM105 686h1v1h-1zM58 687h4v1h-4zM64 687h2v1h-2zM70 687h2v1h-2zM74 687h1v1h-1zM78 687h1v1h-1zM84 687h1v1h-1zM88 687h1v1h-1zM92 687h5v1h-5zM99 687h1v1h-1zM101 687h1v1h-1zM103 687h7v1h-7zM59 688h2v1h-2zM62 688h2v1h-2zM65 688h1v1h-1zM71 688h1v1h-1zM74 688h1v1h-1zM78 688h1v1h-1zM83 688h1v1h-1zM88 688h3v1h-3zM94 688h1v1h-1zM96 688h1v1h-1zM99 688h1v1h-1zM101 688h1v1h-1zM105 688h1v1h-1zM59 689h2v1h-2zM64 689h4v1h-4zM71 689h1v1h-1zM75 689h1v1h-1zM78 689h1v1h-1zM83 689h1v1h-1zM88 689h1v1h-1zM90 689h1v1h-1zM92 689h1v1h-1zM94 689h1v1h-1zM99 689h4v1h-4zM104 689h5v1h-5zM58 690h2v1h-2zM63 690h1v1h-1zM67 690h1v1h-1zM71 690h1v1h-1zM75 690h1v1h-1zM78 690h1v1h-1zM83 690h1v1h-1zM87 690h1v1h-1zM90 690h1v1h-1zM92 690h1v1h-1zM94 690h3v1h-3zM101 690h1v1h-1zM107 690h1v1h-1zM57 691h1v1h-1zM59 691h1v1h-1zM62 691h1v1h-1zM64 691h1v1h-1zM66 691h1v1h-1zM71 691h1v1h-1zM75 691h1v1h-1zM77 691h1v1h-1zM82 691h1v1h-1zM87 691h1v1h-1zM90 691h1v1h-1zM92 691h1v1h-1zM94 691h1v1h-1zM101 691h2v1h-2zM107 691h1v1h-1zM59 692h1v1h-1zM65 692h2v1h-2zM71 692h1v1h-1zM77 692h1v1h-1zM82 692h1v1h-1zM87 692h1v1h-1zM90 692h1v1h-1zM92 692h1v1h-1zM94 692h1v1h-1zM99 692h3v1h-3zM105 692h2v1h-2zM59 693h1v1h-1zM64 693h1v1h-1zM71 693h1v1h-1zM73 693h7v1h-7zM82 693h1v1h-1zM87 693h1v1h-1zM90 693h2v1h-2zM93 693h2v1h-2zM101 693h1v1h-1zM106 693h2v1h-2zM59 694h1v1h-1zM62 694h2v1h-2zM71 694h1v1h-1zM81 694h1v1h-1zM88 694h2v1h-2zM91 694h1v1h-1zM94 694h3v1h-3zM101 694h1v1h-1zM107 694h1v1h-1zM81 695h1v1h-1z" fill="#000"/><rect x="22.5" y="702.5" width="8" height="8" rx="1" fill="#f4f4f4" stroke="#9a9a9a"/><rect x="24" y="706" width="5" height="1" fill="#3050a0" /><rect x="26" y="704" width="1" height="5" fill="#3050a0" /><rect x="32" y="706" width="1" height="1" fill="#a0a0a0" /><rect x="34" y="706" width="1" height="1" fill="#a0a0a0" /><rect x="36" y="706" width="1" height="1" fill="#a0a0a0" /><path d="M39.5 703.5v-2l1-1h5l1 1v1h6v10h-13z" fill="url(#dith)" stroke="#8a8a8a"/><rect x="52" y="703" width="1.5" height="11" fill="#000"/><rect x="40" y="713" width="13.5" height="1.5" fill="#000"/><g transform="translate(0,706)"><text x="41" y="4" font-size="8" font-weight="bold">±I</text></g><path d="M60 699h1v1h-1zM64 699h1v1h-1zM70 699h1v1h-1zM72 699h1v1h-1zM74 699h1v1h-1zM76 699h1v1h-1zM82 699h1v1h-1zM84 699h1v1h-1zM86 699h1v1h-1zM88 699h1v1h-1zM95 699h1v1h-1zM98 699h1v1h-1zM102 699h1v1h-1zM107 699h1v1h-1zM112 699h1v1h-1zM119 699h1v1h-1zM124 699h1v1h-1zM58 700h5v1h-5zM64 700h4v1h-4zM70 700h1v1h-1zM72 700h2v1h-2zM76 700h1v1h-1zM82 700h1v1h-1zM84 700h2v1h-2zM88 700h1v1h-1zM96 700h1v1h-1zM99 700h1v1h-1zM102 700h1v1h-1zM107 700h2v1h-2zM112 700h1v1h-1zM118 700h10v1h-10zM58 701h7v1h-7zM66 701h1v1h-1zM70 701h5v1h-5zM76 701h4v1h-4zM82 701h5v1h-5zM88 701h4v1h-4zM94 701h10v1h-10zM108 701h1v1h-1zM112 701h1v1h-1zM118 701h1v1h-1zM120 701h1v1h-1zM122 701h1v1h-1zM125 701h1v1h-1zM58 702h1v1h-1zM60 702h1v1h-1zM62 702h3v1h-3zM66 702h1v1h-1zM71 702h3v1h-3zM76 702h1v1h-1zM78 702h1v1h-1zM83 702h3v1h-3zM88 702h1v1h-1zM90 702h1v1h-1zM94 702h1v1h-1zM103 702h1v1h-1zM112 702h1v1h-1zM119 702h8v1h-8zM58 703h5v1h-5zM65 703h1v1h-1zM71 703h2v1h-2zM74 703h1v1h-1zM76 703h1v1h-1zM78 703h1v1h-1zM83 703h2v1h-2zM86 703h1v1h-1zM88 703h1v1h-1zM90 703h1v1h-1zM94 703h1v1h-1zM96 703h6v1h-6zM106 703h2v1h-2zM109 703h8v1h-8zM119 703h8v1h-8zM59 704h4v1h-4zM64 704h3v1h-3zM70 704h1v1h-1zM72 704h1v1h-1zM75 704h2v1h-2zM78 704h1v1h-1zM82 704h1v1h-1zM84 704h1v1h-1zM87 704h2v1h-2zM90 704h1v1h-1zM100 704h2v1h-2zM107 704h1v1h-1zM112 704h1v1h-1zM119 704h1v1h-1zM126 704h1v1h-1zM58 705h1v1h-1zM60 705h1v1h-1zM63 705h1v1h-1zM67 705h1v1h-1zM72 705h1v1h-1zM75 705h2v1h-2zM78 705h1v1h-1zM84 705h1v1h-1zM87 705h2v1h-2zM90 705h1v1h-1zM99 705h1v1h-1zM107 705h1v1h-1zM112 705h1v1h-1zM119 705h8v1h-8zM58 706h10v1h-10zM70 706h5v1h-5zM77 706h2v1h-2zM82 706h5v1h-5zM89 706h2v1h-2zM94 706h10v1h-10zM107 706h1v1h-1zM112 706h1v1h-1zM119 706h8v1h-8zM62 707h1v1h-1zM71 707h1v1h-1zM73 707h1v1h-1zM77 707h1v1h-1zM83 707h1v1h-1zM85 707h1v1h-1zM89 707h1v1h-1zM98 707h1v1h-1zM107 707h1v1h-1zM112 707h1v1h-1zM121 707h1v1h-1zM125 707h1v1h-1zM59 708h1v1h-1zM63 708h4v1h-4zM71 708h3v1h-3zM77 708h2v1h-2zM83 708h3v1h-3zM89 708h2v1h-2zM98 708h1v1h-1zM107 708h1v1h-1zM109 708h1v1h-1zM112 708h1v1h-1zM118 708h10v1h-10zM59 709h1v1h-1zM62 709h1v1h-1zM71 709h3v1h-3zM76 709h1v1h-1zM79 709h1v1h-1zM83 709h3v1h-3zM88 709h1v1h-1zM91 709h1v1h-1zM98 709h1v1h-1zM107 709h2v1h-2zM112 709h1v1h-1zM120 709h1v1h-1zM125 709h1v1h-1zM58 710h10v1h-10zM70 710h1v1h-1zM75 710h1v1h-1zM79 710h1v1h-1zM82 710h1v1h-1zM87 710h1v1h-1zM91 710h1v1h-1zM96 710h3v1h-3zM107 710h1v1h-1zM112 710h1v1h-1zM118 710h2v1h-2zM125 710h1v1h-1z" fill="#000"/><rect x="22.5" y="718.5" width="8" height="8" rx="1" fill="#f4f4f4" stroke="#9a9a9a"/><rect x="24" y="722" width="5" height="1" fill="#3050a0" /><rect x="26" y="720" width="1" height="5" fill="#3050a0" /><rect x="32" y="722" width="1" height="1" fill="#a0a0a0" /><rect x="34" y="722" width="1" height="1" fill="#a0a0a0" /><rect x="36" y="722" width="1" height="1" fill="#a0a0a0" /><path d="M39.5 719.5v-2l1-1h5l1 1v1h6v10h-13z" fill="url(#dith)" stroke="#8a8a8a"/><rect x="52" y="719" width="1.5" height="11" fill="#000"/><rect x="40" y="729" width="13.5" height="1.5" fill="#000"/><g transform="translate(0,722)"><path d="M41.5 -3v7M44.5 -3v7M47.5 -3v7M40 -3.5h10M40 4.5h10" stroke="#000"/></g><path d="M62 715h1v1h-1zM70 715h1v1h-1zM73 715h1v1h-1zM79 715h1v1h-1zM62 716h1v1h-1zM70 716h2v1h-2zM73 716h2v1h-2zM76 716h3v1h-3zM58 717h10v1h-10zM70 717h2v1h-2zM73 717h2v1h-2zM76 717h1v1h-1zM58 718h1v1h-1zM62 718h1v1h-1zM67 718h1v1h-1zM70 718h1v1h-1zM73 718h1v1h-1zM76 718h1v1h-1zM58 719h1v1h-1zM62 719h1v1h-1zM67 719h1v1h-1zM70 719h5v1h-5zM76 719h5v1h-5zM58 720h1v1h-1zM62 720h1v1h-1zM67 720h1v1h-1zM70 720h1v1h-1zM72 720h2v1h-2zM76 720h1v1h-1zM78 720h1v1h-1zM58 721h1v1h-1zM62 721h1v1h-1zM67 721h1v1h-1zM70 721h1v1h-1zM72 721h3v1h-3zM76 721h1v1h-1zM78 721h1v1h-1zM58 722h10v1h-10zM70 722h2v1h-2zM73 722h1v1h-1zM76 722h1v1h-1zM78 722h1v1h-1zM58 723h1v1h-1zM62 723h1v1h-1zM67 723h1v1h-1zM70 723h2v1h-2zM73 723h1v1h-1zM76 723h1v1h-1zM78 723h1v1h-1zM62 724h1v1h-1zM70 724h1v1h-1zM73 724h1v1h-1zM75 724h1v1h-1zM78 724h1v1h-1zM62 725h1v1h-1zM70 725h6v1h-6zM78 725h1v1h-1zM62 726h1v1h-1zM75 726h1v1h-1zM78 726h1v1h-1z" fill="#000"/><rect x="22.5" y="734.5" width="8" height="8" rx="1" fill="#f4f4f4" stroke="#9a9a9a"/><rect x="24" y="738" width="5" height="1" fill="#3050a0" /><rect x="26" y="736" width="1" height="5" fill="#3050a0" /><rect x="32" y="738" width="1" height="1" fill="#a0a0a0" /><rect x="34" y="738" width="1" height="1" fill="#a0a0a0" /><rect x="36" y="738" width="1" height="1" fill="#a0a0a0" /><path d="M39.5 735.5v-2l1-1h5l1 1v1h6v10h-13z" fill="url(#dith)" stroke="#8a8a8a"/><rect x="52" y="735" width="1.5" height="11" fill="#000"/><rect x="40" y="745" width="13.5" height="1.5" fill="#000"/><g transform="translate(0,738)"><path d="M40.5 1l2.5-3l2.5 3zM46 -0.5h4l-2 3.5z" fill="none" stroke="#000"/></g><path d="M59 731h1v1h-1zM65 731h1v1h-1zM73 731h1v1h-1zM75 731h1v1h-1zM58 732h4v1h-4zM63 732h5v1h-5zM72 732h1v1h-1zM75 732h1v1h-1zM59 733h1v1h-1zM64 733h1v1h-1zM72 733h1v1h-1zM75 733h1v1h-1zM79 733h1v1h-1zM58 734h1v1h-1zM60 734h1v1h-1zM64 734h1v1h-1zM71 734h1v1h-1zM75 734h1v1h-1zM78 734h2v1h-2zM58 735h1v1h-1zM60 735h1v1h-1zM62 735h7v1h-7zM70 735h2v1h-2zM75 735h1v1h-1zM77 735h2v1h-2zM58 736h1v1h-1zM60 736h1v1h-1zM64 736h1v1h-1zM70 736h2v1h-2zM75 736h3v1h-3zM58 737h4v1h-4zM63 737h5v1h-5zM71 737h1v1h-1zM75 737h2v1h-2zM60 738h1v1h-1zM66 738h1v1h-1zM71 738h1v1h-1zM74 738h2v1h-2zM60 739h2v1h-2zM66 739h1v1h-1zM71 739h1v1h-1zM73 739h1v1h-1zM75 739h1v1h-1zM58 740h3v1h-3zM64 740h2v1h-2zM71 740h1v1h-1zM75 740h1v1h-1zM79 740h1v1h-1zM60 741h1v1h-1zM65 741h2v1h-2zM71 741h1v1h-1zM75 741h1v1h-1zM79 741h1v1h-1zM60 742h1v1h-1zM66 742h1v1h-1zM71 742h1v1h-1zM75 742h5v1h-5z" fill="#000"/><rect x="22.5" y="750.5" width="8" height="8" rx="1" fill="#f4f4f4" stroke="#9a9a9a"/><rect x="24" y="754" width="5" height="1" fill="#3050a0" /><rect x="26" y="752" width="1" height="5" fill="#3050a0" /><rect x="32" y="754" width="1" height="1" fill="#a0a0a0" /><rect x="34" y="754" width="1" height="1" fill="#a0a0a0" /><rect x="36" y="754" width="1" height="1" fill="#a0a0a0" /><path d="M39.5 751.5v-2l1-1h5l1 1v1h6v10h-13z" fill="url(#dith)" stroke="#8a8a8a"/><rect x="52" y="751" width="1.5" height="11" fill="#000"/><rect x="40" y="761" width="13.5" height="1.5" fill="#000"/><rect x="41.5" y="753.5" width="8" height="6" fill="#fff" stroke="#000080" stroke-width="1.5"/><rect x="43" y="755" width="4" height="3" fill="#c0c0c0"/><rect x="39" y="754" width="2" height="1" fill="#000080"/><rect x="39" y="758" width="2" height="1" fill="#000080"/><rect x="50" y="754" width="2" height="1" fill="#000080"/><rect x="50" y="758" width="2" height="1" fill="#000080"/><path d="M71 747h3v1h-3zM75 747h5v1h-5zM87 747h1v1h-1zM59 748h8v1h-8zM70 748h1v1h-1zM72 748h1v1h-1zM74 748h1v1h-1zM79 748h1v1h-1zM82 748h10v1h-10zM65 749h1v1h-1zM71 749h1v1h-1zM74 749h1v1h-1zM79 749h1v1h-1zM82 749h1v1h-1zM63 750h2v1h-2zM71 750h1v1h-1zM74 750h1v1h-1zM79 750h1v1h-1zM82 750h1v1h-1zM84 750h7v1h-7zM63 751h1v1h-1zM70 751h4v1h-4zM75 751h5v1h-5zM82 751h1v1h-1zM89 751h2v1h-2zM63 752h1v1h-1zM71 752h1v1h-1zM82 752h1v1h-1zM86 752h3v1h-3zM58 753h10v1h-10zM70 753h1v1h-1zM72 753h1v1h-1zM74 753h6v1h-6zM82 753h1v1h-1zM84 753h8v1h-8zM63 754h1v1h-1zM70 754h2v1h-2zM73 754h1v1h-1zM77 754h1v1h-1zM82 754h1v1h-1zM87 754h1v1h-1zM91 754h1v1h-1zM63 755h1v1h-1zM69 755h3v1h-3zM74 755h6v1h-6zM82 755h1v1h-1zM87 755h1v1h-1zM90 755h1v1h-1zM63 756h1v1h-1zM71 756h1v1h-1zM77 756h1v1h-1zM82 756h1v1h-1zM87 756h1v1h-1zM63 757h1v1h-1zM71 757h1v1h-1zM77 757h1v1h-1zM82 757h1v1h-1zM87 757h1v1h-1zM60 758h3v1h-3zM71 758h1v1h-1zM74 758h8v1h-8zM85 758h3v1h-3z" fill="#000"/><rect x="249" y="103" width="3" height="853" fill="#d2daea" /><rect x="252" y="103" width="880" height="853" fill="#b4b4b4" /><rect x="252" y="103" width="1" height="853" fill="#a0a0a0" /><rect x="252" y="103" width="880" height="1" fill="#a0a0a0" /><rect x="253" y="104" width="1" height="852" fill="#696969" /><rect x="253" y="104" width="879" height="1" fill="#696969" /><rect x="254" y="105" width="1" height="851" fill="#a0a0a0" /><rect x="254" y="105" width="878" height="1" fill="#a0a0a0" /><path d="M256 956V112a5 5 0 0 1 5-5H1132V956z" fill="#b9d1ea" stroke="none"/><path d="M256.5 956V112.5a5 5 0 0 1 5-5H1132" fill="none" stroke="#000"/><defs><linearGradient id="tg" gradientUnits="userSpaceOnUse" x1="0" y1="109" x2="0" y2="138"><stop offset="0" stop-color="#97b2d2"/><stop offset="1" stop-color="#b9d1ea"/></linearGradient></defs><path d="M258 956V114a5 5 0 0 1 5-5H1132V138H264V956z" fill="url(#tg)"/><path d="M257.5 956V113a4.5 4.5 0 0 1 4.5-4.5H1132" fill="none" stroke="#ffffff"/><rect x="258" y="138" width="6" height="818" fill="#b9d1ea" /><path d="M267.5 119.5h11l3 3v10.5h-14z" fill="#fff" stroke="#000" stroke-width="1.2"/><path d="M278.5 119.5v3h3" fill="none" stroke="#000" stroke-width="0.8"/><path d="M269 126h2M275 126h2M271.5 123v6M274.5 123v6" stroke="#303030"/><rect x="270" y="122" width="1" height="1" fill="#ff0"/><rect x="273" y="121" width="1" height="1" fill="#ff0"/><rect x="269" y="130" width="1" height="1" fill="#ff0"/><rect x="276" y="124" width="1" height="1" fill="#ff0"/><rect x="272" y="131" width="1" height="1" fill="#ff0"/><rect x="279" y="127" width="1" height="1" fill="#ff0"/><path d="M276 127l5 5" stroke="#404040" stroke-width="2"/><rect x="280" y="131" width="3" height="3" fill="#e00000"/><rect x="281" y="132" width="1" height="1" fill="#ff0"/><text x="286" y="131" font-size="12.5" fill="#000" >SIMATIC LAD</text><rect x="264" y="138" width="868" height="107" fill="#f0f0f0" /><rect x="264" y="138" width="868" height="1" fill="#a0a0a0" /><rect x="264" y="139" width="868" height="2" fill="#696969" /><rect x="264" y="138" width="1" height="107" fill="#a0a0a0" /><rect x="265" y="139" width="2" height="106" fill="#696969" /><rect x="267" y="141" width="38" height="17" fill="#f0f0f0" /><rect x="267.5" y="141.5" width="37" height="16" fill="none" stroke="#ffffff"/><rect x="305" y="141" width="1" height="18" fill="#000" /><rect x="306" y="141" width="99" height="17" fill="#f0f0f0" /><rect x="306.5" y="141.5" width="98" height="16" fill="none" stroke="#ffffff"/><rect x="405" y="141" width="1" height="18" fill="#000" /><rect x="406" y="141" width="74" height="17" fill="#f0f0f0" /><rect x="406.5" y="141.5" width="73" height="16" fill="none" stroke="#ffffff"/><rect x="480" y="141" width="1" height="18" fill="#000" /><rect x="481" y="141" width="85" height="17" fill="#f0f0f0" /><rect x="481.5" y="141.5" width="84" height="16" fill="none" stroke="#ffffff"/><rect x="566" y="141" width="1" height="18" fill="#000" /><rect x="567" y="141" width="249" height="17" fill="#f0f0f0" /><rect x="567.5" y="141.5" width="248" height="16" fill="none" stroke="#ffffff"/><rect x="816" y="141" width="1" height="18" fill="#000" /><rect x="267" y="158" width="550" height="1" fill="#000" /><path d="M347 143h3v1h-3zM346 144h8v1h-8zM345 145h3v1h-3zM351 145h2v1h-2zM344 146h4v1h-4zM350 146h3v1h-3zM347 147h5v1h-5zM347 148h4v1h-4zM345 149h9v1h-9zM344 150h4v1h-4zM352 150h2v1h-2zM346 151h2v1h-2zM352 151h2v1h-2zM346 152h2v1h-2zM352 152h2v1h-2zM346 153h8v1h-8zM346 154h2v1h-2zM352 154h2v1h-2z" fill="#000"/><path d="M359 143h5v1h-5zM357 144h4v1h-4zM362 144h2v1h-2zM358 145h2v1h-2zM362 145h6v1h-6zM358 146h2v1h-2zM361 146h7v1h-7zM357 147h6v1h-6zM364 147h2v1h-2zM358 148h3v1h-3zM362 148h5v1h-5zM358 149h3v1h-3zM362 149h6v1h-6zM357 150h11v1h-11zM356 151h4v1h-4zM361 151h2v1h-2zM364 151h4v1h-4zM358 152h2v1h-2zM361 152h2v1h-2zM364 152h2v1h-2zM358 153h2v1h-2zM364 153h2v1h-2zM358 154h2v1h-2zM362 154h4v1h-4z" fill="#000"/><path d="M423 143h3v1h-3zM419 144h11v1h-11zM422 145h2v1h-2zM425 145h2v1h-2zM420 146h4v1h-4zM425 146h4v1h-4zM419 147h5v1h-5zM425 147h5v1h-5zM422 148h2v1h-2zM425 148h2v1h-2zM420 149h9v1h-9zM421 150h2v1h-2zM426 150h2v1h-2zM422 151h2v1h-2zM425 151h3v1h-3zM423 152h3v1h-3zM421 153h7v1h-7zM419 154h3v1h-3zM426 154h4v1h-4z" fill="#000"/><path d="M433 143h9v1h-9zM433 144h2v1h-2zM440 144h2v1h-2zM433 145h2v1h-2zM440 145h2v1h-2zM433 146h9v1h-9zM432 147h11v1h-11zM433 148h9v1h-9zM433 149h2v1h-2zM436 149h3v1h-3zM440 149h2v1h-2zM433 150h2v1h-2zM436 150h3v1h-3zM440 150h2v1h-2zM433 151h9v1h-9zM433 152h9v1h-9zM436 153h3v1h-3zM432 154h11v1h-11z" fill="#000"/><path d="M449 143h2v1h-2zM446 144h8v1h-8zM447 145h7v1h-7zM445 146h11v1h-11zM448 147h5v1h-5zM446 148h9v1h-9zM445 149h3v1h-3zM449 149h3v1h-3zM454 149h2v1h-2zM449 150h2v1h-2zM445 151h11v1h-11zM448 152h5v1h-5zM447 153h3v1h-3zM451 153h4v1h-4zM445 154h3v1h-3zM453 154h3v1h-3z" fill="#000"/><path d="M458 143h7v1h-7zM467 143h2v1h-2zM459 144h2v1h-2zM462 144h7v1h-7zM459 145h2v1h-2zM462 145h7v1h-7zM458 146h11v1h-11zM459 147h2v1h-2zM462 147h7v1h-7zM459 148h2v1h-2zM462 148h2v1h-2zM467 148h2v1h-2zM458 149h2v1h-2zM462 149h2v1h-2zM465 149h4v1h-4zM462 150h3v1h-3zM459 151h9v1h-9zM462 152h3v1h-3zM462 153h3v1h-3zM458 154h11v1h-11z" fill="#000"/><path d="M499 143h8v1h-8zM499 144h8v1h-8zM499 145h11v1h-11zM500 146h4v1h-4zM505 146h5v1h-5zM499 147h10v1h-10zM499 148h4v1h-4zM504 148h5v1h-5zM501 149h2v1h-2zM504 149h5v1h-5zM499 150h6v1h-6zM506 150h3v1h-3zM500 151h4v1h-4zM506 151h2v1h-2zM500 152h4v1h-4zM505 152h4v1h-4zM500 153h10v1h-10zM499 154h2v1h-2zM504 154h2v1h-2zM508 154h2v1h-2z" fill="#000"/><path d="M513 143h2v1h-2zM513 144h2v1h-2zM516 144h7v1h-7zM513 145h2v1h-2zM516 145h2v1h-2zM521 145h2v1h-2zM511 146h12v1h-12zM513 147h2v1h-2zM516 147h2v1h-2zM519 147h2v1h-2zM513 148h2v1h-2zM516 148h7v1h-7zM512 149h6v1h-6zM519 149h2v1h-2zM511 150h7v1h-7zM519 150h2v1h-2zM513 151h10v1h-10zM513 152h6v1h-6zM521 152h2v1h-2zM513 153h6v1h-6zM521 153h2v1h-2zM512 154h11v1h-11z" fill="#000"/><path d="M529 143h2v1h-2zM526 144h8v1h-8zM527 145h7v1h-7zM525 146h11v1h-11zM528 147h5v1h-5zM526 148h9v1h-9zM525 149h3v1h-3zM529 149h3v1h-3zM534 149h2v1h-2zM529 150h2v1h-2zM525 151h11v1h-11zM528 152h5v1h-5zM527 153h3v1h-3zM531 153h4v1h-4zM525 154h3v1h-3zM533 154h3v1h-3z" fill="#000"/><path d="M538 143h7v1h-7zM547 143h2v1h-2zM539 144h2v1h-2zM542 144h7v1h-7zM539 145h2v1h-2zM542 145h7v1h-7zM538 146h11v1h-11zM539 147h2v1h-2zM542 147h7v1h-7zM539 148h2v1h-2zM542 148h2v1h-2zM547 148h2v1h-2zM538 149h2v1h-2zM542 149h2v1h-2zM545 149h4v1h-4zM542 150h3v1h-3zM539 151h9v1h-9zM542 152h3v1h-3zM542 153h3v1h-3zM538 154h11v1h-11z" fill="#000"/><path d="M680 143h3v1h-3zM686 143h2v1h-2zM681 144h3v1h-3zM686 144h2v1h-2zM683 145h8v1h-8zM686 146h2v1h-2zM680 147h3v1h-3zM686 147h2v1h-2zM681 148h2v1h-2zM686 148h2v1h-2zM683 149h8v1h-8zM682 150h2v1h-2zM686 150h2v1h-2zM681 151h2v1h-2zM686 151h2v1h-2zM681 152h2v1h-2zM686 152h2v1h-2zM680 153h3v1h-3zM686 153h2v1h-2zM680 154h2v1h-2zM683 154h9v1h-9z" fill="#000"/><path d="M695 143h3v1h-3zM693 144h4v1h-4zM698 144h6v1h-6zM694 145h10v1h-10zM693 146h5v1h-5zM699 146h4v1h-4zM694 147h3v1h-3zM699 147h5v1h-5zM693 148h6v1h-6zM700 148h5v1h-5zM694 149h3v1h-3zM700 149h2v1h-2zM693 150h11v1h-11zM693 151h4v1h-4zM700 151h2v1h-2zM692 152h12v1h-12zM694 153h3v1h-3zM700 153h2v1h-2zM694 154h3v1h-3zM700 154h2v1h-2z" fill="#000"/><rect x="306" y="159" width="511" height="65" fill="#ffffff" /><rect x="267" y="159" width="38" height="15" fill="#f0f0f0" /><rect x="267.5" y="159.5" width="37" height="14" fill="none" stroke="#ffffff"/><rect x="267" y="174" width="39" height="1" fill="#000" /><rect x="306" y="175" width="511" height="1" fill="#808080" /><text x="410.5" y="171" font-size="10.5" fill="#a0a0a0" >TEMP</text><rect x="267" y="175" width="38" height="15" fill="#f0f0f0" /><rect x="267.5" y="175.5" width="37" height="14" fill="none" stroke="#ffffff"/><rect x="267" y="190" width="39" height="1" fill="#000" /><rect x="306" y="191" width="511" height="1" fill="#808080" /><text x="410.5" y="187" font-size="10.5" fill="#a0a0a0" >TEMP</text><rect x="267" y="191" width="38" height="15" fill="#f0f0f0" /><rect x="267.5" y="191.5" width="37" height="14" fill="none" stroke="#ffffff"/><rect x="267" y="206" width="39" height="1" fill="#000" /><rect x="306" y="207" width="511" height="1" fill="#808080" /><text x="410.5" y="203" font-size="10.5" fill="#a0a0a0" >TEMP</text><rect x="267" y="207" width="38" height="15" fill="#f0f0f0" /><rect x="267.5" y="207.5" width="37" height="14" fill="none" stroke="#ffffff"/><rect x="267" y="222" width="39" height="1" fill="#000" /><rect x="306" y="223" width="511" height="1" fill="#808080" /><text x="410.5" y="219" font-size="10.5" fill="#a0a0a0" >TEMP</text><rect x="305" y="159" width="1" height="65" fill="#000" /><rect x="405" y="159" width="1" height="65" fill="#808080" /><rect x="480" y="159" width="1" height="65" fill="#808080" /><rect x="566" y="159" width="1" height="65" fill="#808080" /><rect x="816" y="159" width="1" height="65" fill="#808080" /><rect x="264" y="241" width="868" height="1" fill="#ffffff" /><rect x="264" y="242" width="868" height="3" fill="#f0f0f0" /><rect x="264" y="245" width="868" height="708" fill="#ffffff" /><rect x="264" y="245" width="868" height="1" fill="#a0a0a0" /><rect x="265" y="246" width="867" height="1" fill="#696969" /><rect x="266" y="247" width="866" height="1" fill="#a0a0a0" /><rect x="267" y="248" width="865" height="1" fill="#696969" /><rect x="264" y="245" width="1" height="704" fill="#a0a0a0" /><rect x="265" y="246" width="1" height="703" fill="#696969" /><rect x="266" y="247" width="1" height="702" fill="#a0a0a0" /><rect x="267" y="248" width="1" height="701" fill="#696969" /><rect x="264" y="949" width="868" height="1" fill="#f0f0f0" /><rect x="264" y="950" width="868" height="3" fill="#ffffff" /><rect x="276" y="249" width="2" height="683" fill="#000" /><path d="M301 253h2v1h-2zM305 253h3v1h-3zM288 254h11v1h-11zM301 254h2v1h-2zM305 254h6v1h-6zM288 255h2v1h-2zM297 255h2v1h-2zM301 255h2v1h-2zM304 255h3v1h-3zM308 255h3v1h-3zM288 256h2v1h-2zM292 256h2v1h-2zM295 256h4v1h-4zM300 256h10v1h-10zM288 257h16v1h-16zM306 257h3v1h-3zM288 258h5v1h-5zM294 258h5v1h-5zM301 258h2v1h-2zM305 258h5v1h-5zM288 259h2v1h-2zM291 259h2v1h-2zM294 259h5v1h-5zM301 259h6v1h-6zM308 259h3v1h-3zM288 260h11v1h-11zM300 260h11v1h-11zM288 261h11v1h-11zM304 261h3v1h-3zM309 261h2v1h-2zM288 262h3v1h-3zM293 262h2v1h-2zM297 262h2v1h-2zM301 262h6v1h-6zM309 262h2v1h-2zM288 263h2v1h-2zM297 263h6v1h-6zM304 263h7v1h-7zM288 264h2v1h-2zM295 264h4v1h-4zM309 264h2v1h-2z" fill="#000"/><text x="316" y="263" font-size="11" font-weight="bold">1</text><text x="341" y="262" font-size="11" fill="#008000" textLength="54" lengthAdjust="spacingAndGlyphs">Initialization</text><rect x="278" y="299" width="52" height="2" fill="#000" /><rect x="330" y="289" width="2" height="22" fill="#000" /><rect x="361" y="289" width="2" height="22" fill="#000" /><text x="347" y="284" font-size="12" fill="#000" text-anchor="middle" >SCAN_1ST</text><rect x="363" y="299" width="198" height="2" fill="#000" /><rect x="277.5" y="269.5" width="140" height="59" fill="none" stroke="#000"/><rect x="562" y="271" width="131" height="56" fill="none" stroke="#000" stroke-width="2"/><text x="627" y="284" font-size="12" fill="#000" text-anchor="middle" >PLC_INI</text><text x="565" y="304" font-size="12" fill="#000" >EN</text><path d="M301 353h2v1h-2zM305 353h3v1h-3zM288 354h11v1h-11zM301 354h2v1h-2zM305 354h6v1h-6zM288 355h2v1h-2zM297 355h2v1h-2zM301 355h2v1h-2zM304 355h3v1h-3zM308 355h3v1h-3zM288 356h2v1h-2zM292 356h2v1h-2zM295 356h4v1h-4zM300 356h10v1h-10zM288 357h16v1h-16zM306 357h3v1h-3zM288 358h5v1h-5zM294 358h5v1h-5zM301 358h2v1h-2zM305 358h5v1h-5zM288 359h2v1h-2zM291 359h2v1h-2zM294 359h5v1h-5zM301 359h6v1h-6zM308 359h3v1h-3zM288 360h11v1h-11zM300 360h11v1h-11zM288 361h11v1h-11zM304 361h3v1h-3zM309 361h2v1h-2zM288 362h3v1h-3zM293 362h2v1h-2zM297 362h2v1h-2zM301 362h6v1h-6zM309 362h2v1h-2zM288 363h2v1h-2zM297 363h6v1h-6zM304 363h7v1h-7zM288 364h2v1h-2zM295 364h4v1h-4zM309 364h2v1h-2z" fill="#000"/><text x="316" y="363" font-size="11" font-weight="bold">2</text><rect x="278" y="399" width="52" height="2" fill="#000" /><rect x="330" y="389" width="2" height="22" fill="#000" /><rect x="361" y="389" width="2" height="22" fill="#000" /><text x="347" y="384" font-size="12" fill="#000" text-anchor="middle" >P_M_CK3</text><rect x="363" y="399" width="103" height="2" fill="#000" /><path d="M471 390l-5 4l-1 2v7l1 2l5 4M501 390l5 4l1 2v7l-1 2l-5 4" fill="none" stroke="#000" stroke-width="2"/><text x="486.5" y="384" font-size="12" fill="#000" text-anchor="middle" >M_CLED3</text><path d="M301 453h2v1h-2zM305 453h3v1h-3zM288 454h11v1h-11zM301 454h2v1h-2zM305 454h6v1h-6zM288 455h2v1h-2zM297 455h2v1h-2zM301 455h2v1h-2zM304 455h3v1h-3zM308 455h3v1h-3zM288 456h2v1h-2zM292 456h2v1h-2zM295 456h4v1h-4zM300 456h10v1h-10zM288 457h16v1h-16zM306 457h3v1h-3zM288 458h5v1h-5zM294 458h5v1h-5zM301 458h2v1h-2zM305 458h5v1h-5zM288 459h2v1h-2zM291 459h2v1h-2zM294 459h5v1h-5zM301 459h6v1h-6zM308 459h3v1h-3zM288 460h11v1h-11zM300 460h11v1h-11zM288 461h11v1h-11zM304 461h3v1h-3zM309 461h2v1h-2zM288 462h3v1h-3zM293 462h2v1h-2zM297 462h2v1h-2zM301 462h6v1h-6zM309 462h2v1h-2zM288 463h2v1h-2zM297 463h6v1h-6zM304 463h7v1h-7zM288 464h2v1h-2zM295 464h4v1h-4zM309 464h2v1h-2z" fill="#000"/><text x="316" y="463" font-size="11" font-weight="bold">3</text><rect x="278" y="499" width="52" height="2" fill="#000" /><rect x="330" y="489" width="2" height="22" fill="#000" /><rect x="361" y="489" width="2" height="22" fill="#000" /><text x="347" y="484" font-size="12" fill="#000" text-anchor="middle" >I0.0</text><rect x="363" y="499" width="107" height="2" fill="#000" /><rect x="470" y="489" width="2" height="22" fill="#000" /><rect x="501" y="489" width="2" height="22" fill="#000" /><text x="487" y="484" font-size="12" fill="#000" text-anchor="middle" >P_N_DRV_CYC</text><rect x="503" y="499" width="103" height="2" fill="#000" /><path d="M611 490l-5 4l-1 2v7l1 2l5 4M641 490l5 4l1 2v7l-1 2l-5 4" fill="none" stroke="#000" stroke-width="2"/><text x="626.5" y="484" font-size="12" fill="#000" text-anchor="middle" >M251.3</text><path d="M301 553h2v1h-2zM305 553h3v1h-3zM288 554h11v1h-11zM301 554h2v1h-2zM305 554h6v1h-6zM288 555h2v1h-2zM297 555h2v1h-2zM301 555h2v1h-2zM304 555h3v1h-3zM308 555h3v1h-3zM288 556h2v1h-2zM292 556h2v1h-2zM295 556h4v1h-4zM300 556h10v1h-10zM288 557h16v1h-16zM306 557h3v1h-3zM288 558h5v1h-5zM294 558h5v1h-5zM301 558h2v1h-2zM305 558h5v1h-5zM288 559h2v1h-2zM291 559h2v1h-2zM294 559h5v1h-5zM301 559h6v1h-6zM308 559h3v1h-3zM288 560h11v1h-11zM300 560h11v1h-11zM288 561h11v1h-11zM304 561h3v1h-3zM309 561h2v1h-2zM288 562h3v1h-3zM293 562h2v1h-2zM297 562h2v1h-2zM301 562h6v1h-6zM309 562h2v1h-2zM288 563h2v1h-2zM297 563h6v1h-6zM304 563h7v1h-7zM288 564h2v1h-2zM295 564h4v1h-4zM309 564h2v1h-2z" fill="#000"/><text x="316" y="563" font-size="11" font-weight="bold">4</text><text x="341" y="562" font-size="11" fill="#008000" textLength="90" lengthAdjust="spacingAndGlyphs">Emergency control</text><rect x="278" y="599" width="52" height="2" fill="#000" /><rect x="330" y="589" width="2" height="22" fill="#000" /><rect x="361" y="589" width="2" height="22" fill="#000" /><text x="347" y="584" font-size="12" fill="#000" text-anchor="middle" >ONE</text><rect x="363" y="599" width="198" height="2" fill="#000" /><rect x="562" y="571" width="131" height="155" fill="none" stroke="#000" stroke-width="2"/><text x="627" y="584" font-size="12" fill="#000" text-anchor="middle" >EMG_STOP</text><text x="565" y="604" font-size="12" fill="#000" >EN</text><rect x="556" y="639" width="5" height="2" fill="#000" /><text x="555" y="644" font-size="12" fill="#000" text-anchor="end" >20</text><text x="565" y="644" font-size="12" fill="#000" >DELAY</text><rect x="556" y="659" width="5" height="2" fill="#000" /><text x="555" y="664" font-size="12" fill="#000" text-anchor="end" >M251.3</text><text x="565" y="664" font-size="12" fill="#000" >E_KEY</text><rect x="556" y="679" width="5" height="2" fill="#000" /><text x="555" y="684" font-size="12" fill="#000" text-anchor="end" >ONE</text><text x="565" y="684" font-size="12" fill="#000" >T_RDY_LM</text><rect x="556" y="699" width="5" height="2" fill="#000" /><text x="555" y="704" font-size="12" fill="#000" text-anchor="end" >ZERO</text><text x="565" y="704" font-size="12" fill="#000" >HWL_ON</text><rect x="556" y="719" width="5" height="2" fill="#000" /><text x="555" y="724" font-size="12" fill="#000" text-anchor="end" >ZERO</text><text x="565" y="724" font-size="12" fill="#000" >SpStop</text><rect x="693" y="639" width="5" height="2" fill="#000" /><text x="690" y="644" font-size="12" fill="#000" text-anchor="end" >T_EP_LM</text><text x="700" y="644" font-size="12" fill="#000" >M251.4</text><rect x="693" y="659" width="5" height="2" fill="#000" /><text x="690" y="664" font-size="12" fill="#000" text-anchor="end" >T_OFF1</text><text x="700" y="664" font-size="12" fill="#000" >Q0.0</text><rect x="693" y="679" width="5" height="2" fill="#000" /><text x="690" y="684" font-size="12" fill="#000" text-anchor="end" >T_OFF3</text><text x="700" y="684" font-size="12" fill="#000" >Q0.1</text><path d="M301 773h2v1h-2zM305 773h3v1h-3zM288 774h11v1h-11zM301 774h2v1h-2zM305 774h6v1h-6zM288 775h2v1h-2zM297 775h2v1h-2zM301 775h2v1h-2zM304 775h3v1h-3zM308 775h3v1h-3zM288 776h2v1h-2zM292 776h2v1h-2zM295 776h4v1h-4zM300 776h10v1h-10zM288 777h16v1h-16zM306 777h3v1h-3zM288 778h5v1h-5zM294 778h5v1h-5zM301 778h2v1h-2zM305 778h5v1h-5zM288 779h2v1h-2zM291 779h2v1h-2zM294 779h5v1h-5zM301 779h6v1h-6zM308 779h3v1h-3zM288 780h11v1h-11zM300 780h11v1h-11zM288 781h11v1h-11zM304 781h3v1h-3zM309 781h2v1h-2zM288 782h3v1h-3zM293 782h2v1h-2zM297 782h2v1h-2zM301 782h6v1h-6zM309 782h2v1h-2zM288 783h2v1h-2zM297 783h6v1h-6zM304 783h7v1h-7zM288 784h2v1h-2zM295 784h4v1h-4zM309 784h2v1h-2z" fill="#000"/><text x="316" y="783" font-size="11" font-weight="bold">5</text><text x="341" y="782" font-size="11" fill="#008000" textLength="249" lengthAdjust="spacingAndGlyphs">Transfer 802D MCP signals to interface area V1000</text><rect x="278" y="819" width="52" height="2" fill="#000" /><rect x="330" y="809" width="2" height="22" fill="#000" /><rect x="361" y="809" width="2" height="22" fill="#000" /><text x="347" y="804" font-size="12" fill="#000" text-anchor="middle" >ONE</text><rect x="363" y="819" width="107" height="2" fill="#000" /><rect x="470" y="809" width="2" height="22" fill="#000" /><rect x="501" y="809" width="2" height="22" fill="#000" /><text x="487" y="804" font-size="12" fill="#000" text-anchor="middle" >P_H_MCPA</text><path d="M488 816l-2 8" stroke="#000" stroke-width="1"/><rect x="503" y="819" width="198" height="2" fill="#000" /><rect x="415" y="820" width="2" height="112" fill="#000" /><path d="M702 932V791H833V932" fill="none" stroke="#000" stroke-width="2"/><text x="767" y="804" font-size="12" fill="#000" text-anchor="middle" >MCP_802D</text><text x="705" y="824" font-size="12" fill="#000" >EN</text><rect x="696" y="859" width="5" height="2" fill="#000" /><text x="695" y="864" font-size="12" fill="#000" text-anchor="end" >IB3</text><text x="705" y="864" font-size="12" fill="#000" >PB_0</text><rect x="696" y="879" width="5" height="2" fill="#000" /><text x="695" y="884" font-size="12" fill="#000" text-anchor="end" >IB4</text><text x="705" y="884" font-size="12" fill="#000" >PB_1</text><rect x="696" y="899" width="5" height="2" fill="#000" /><text x="695" y="904" font-size="12" fill="#000" text-anchor="end" >IB5</text><text x="705" y="904" font-size="12" fill="#000" >PB_2</text><rect x="696" y="919" width="5" height="2" fill="#000" /><text x="695" y="924" font-size="12" fill="#000" text-anchor="end" >IB6</text><text x="705" y="924" font-size="12" fill="#000" >PB_3</text><rect x="833" y="859" width="5" height="2" fill="#000" /><text x="830" y="864" font-size="12" fill="#000" text-anchor="end" >LEDs</text><text x="840" y="864" font-size="12" fill="#000" >QB2</text><rect x="267" y="932" width="865" height="17" fill="#f0f0f0" /><rect x="267" y="932" width="865" height="1" fill="#d8d8d8" /><rect x="268" y="933" width="17" height="16" fill="#ececec" /><rect x="286" y="933" width="17" height="16" fill="#ececec" /><path d="M278 936v9l-5-4.5z" fill="#a0a0a0"/><path d="M293 936v9l5-4.5z" fill="#000"/><rect x="355" y="932" width="777" height="1" fill="#000" /><rect x="304" y="948" width="828" height="1" fill="#a0a0a0" /><path d="M304 932L310 948H349L355 932z" fill="#ffffff"/><path d="M304.5 932L310 948.5M349.5 948.5L354.5 932.5M353 940L355.5 948.5" stroke="#000" fill="none"/><path d="M404.5 933L409.5 948.5M406.5 940L403.5 948.5" stroke="#000" fill="none"/><path d="M457.5 933L462.5 948.5M459.5 940L456.5 948.5" stroke="#000" fill="none"/><path d="M535 933L540 948.5M537 940L534 948.5" stroke="#000" fill="none"/><path d="M602 933L607 948.5M604 940L601 948.5" stroke="#000" fill="none"/><path d="M664 933L669 948.5M666 940L663 948.5" stroke="#000" fill="none"/><path d="M747.5 933L752.5 948.5M749.5 940L746.5 948.5" stroke="#000" fill="none"/><path d="M823.5 933L828.5 948.5M825.5 940L822.5 948.5" stroke="#000" fill="none"/><path d="M896 933L901 948.5M898 940L895 948.5" stroke="#000" fill="none"/><path d="M976 933L981 948.5M978 940L975 948.5" stroke="#000" fill="none"/><path d="M1048 933L1053 948.5M1050 940L1047 948.5" stroke="#000" fill="none"/><path d="M1120.5 933L1125.5 948.5M1122.5 940L1119.5 948.5" stroke="#000" fill="none"/><text x="329.25" y="944" font-size="11" fill="#000" text-anchor="middle" font-weight="bold" >MAIN</text><text x="379.0" y="944" font-size="11" fill="#000" text-anchor="middle" >SBR_0</text><text x="432.0" y="944" font-size="11" fill="#000" text-anchor="middle" >SBR_1</text><text x="497.25" y="944" font-size="11" fill="#000" text-anchor="middle" >HANDWHL</text><text x="569.5" y="944" font-size="11" fill="#000" text-anchor="middle" >USR_INI</text><text x="634.0" y="944" font-size="11" fill="#000" text-anchor="middle" >PLC_INI</text><text x="706.75" y="944" font-size="11" fill="#000" text-anchor="middle" >EMG_STOP</text><text x="786.5" y="944" font-size="11" fill="#000" text-anchor="middle" >MCP_802D</text><text x="860.75" y="944" font-size="11" fill="#000" text-anchor="middle" >SPD_OVR</text><text x="937.0" y="944" font-size="11" fill="#000" text-anchor="middle" >MCP_SIMU</text><text x="1013.0" y="944" font-size="11" fill="#000" text-anchor="middle" >MCP_NCK</text><text x="1085.25" y="944" font-size="11" fill="#000" text-anchor="middle" >AXIS_CTL</text></svg>
</body></html>
